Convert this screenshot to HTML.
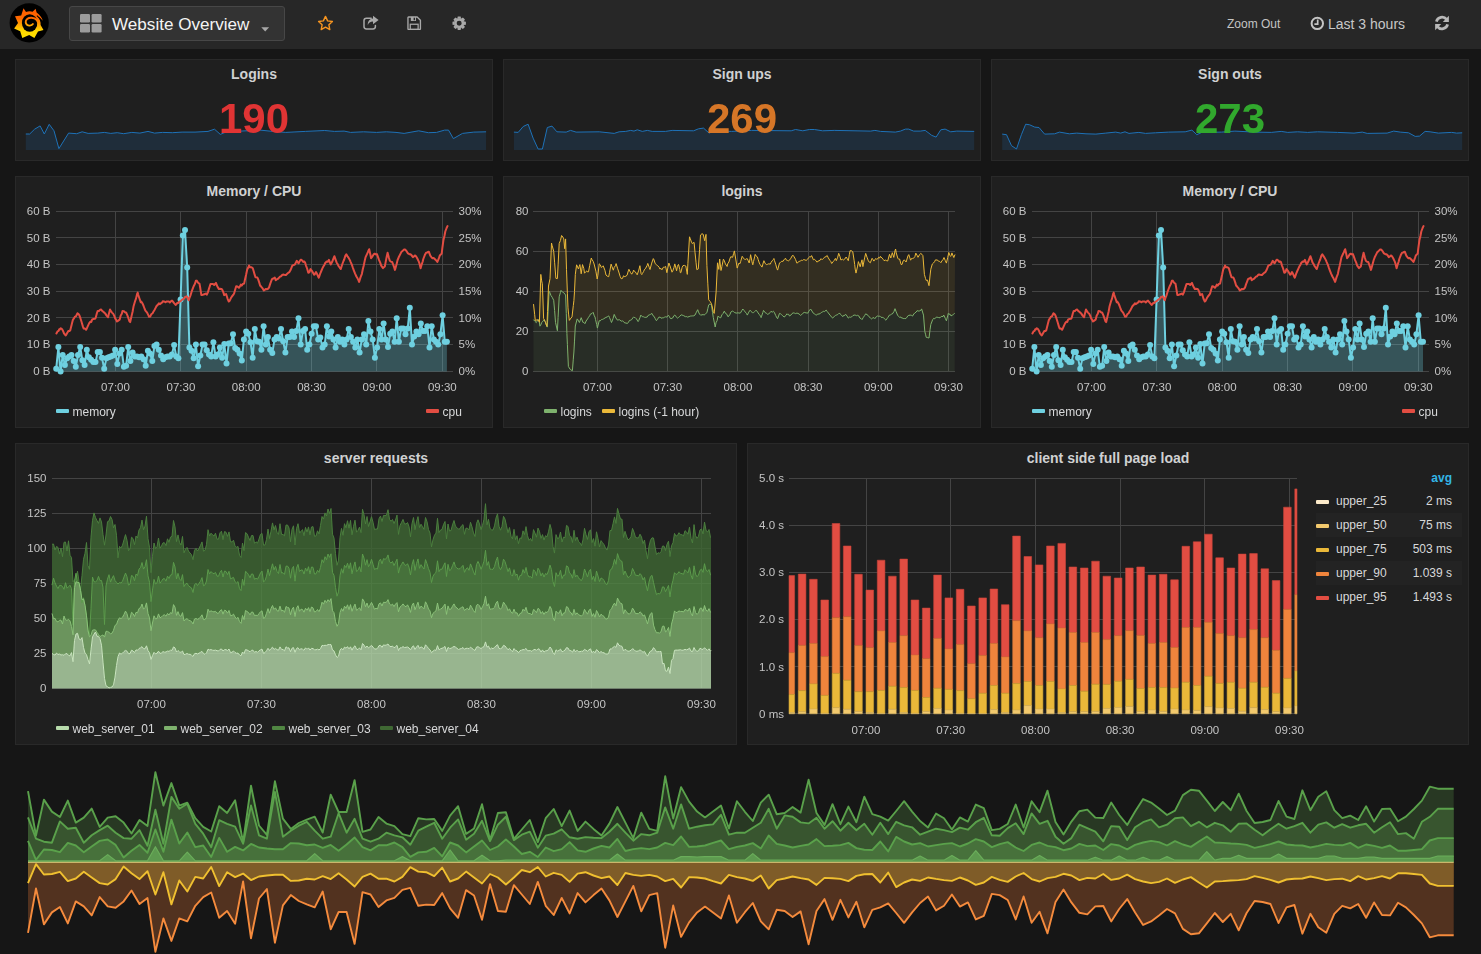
<!DOCTYPE html>
<html lang="en">
<head>
<meta charset="utf-8">
<title>Grafana - Website Overview</title>
<style>
html,body{margin:0;padding:0;}
body{width:1481px;height:954px;background:#161616;font-family:"Liberation Sans",Arial,sans-serif;color:#d8d9da;position:relative;overflow:hidden;}
.abs{position:absolute;}
.navbar{left:0;top:0;width:1481px;height:49px;background:#272727;}
.panel{position:absolute;box-sizing:border-box;background:#1f1f1f;border:1px solid #292929;}
.ptitle{position:absolute;left:0;right:0;top:6px;text-align:center;font-weight:bold;font-size:14px;line-height:16px;color:#d0d1d2;}
.big{position:absolute;text-align:center;font-weight:bold;font-size:42px;line-height:48px;}
#charts{position:absolute;left:0;top:0;will-change:transform;}
.titlebox{left:69px;top:6px;width:216px;height:35px;box-sizing:border-box;background:#333333;border:1px solid #474747;border-radius:3px;}
.titlebox .t{position:absolute;left:42px;top:6.5px;font-size:17.1px;line-height:21px;color:#f4f4f4;white-space:nowrap;}
.legend{position:absolute;font-size:12px;line-height:14px;color:#d8d9da;white-space:nowrap;}
.legend i{display:inline-block;width:13px;height:4px;border-radius:1px;vertical-align:3px;margin-right:3.5px;}
.lt{position:absolute;font-size:12px;line-height:14px;color:#d8d9da;white-space:nowrap;}
.row{position:absolute;left:1316px;width:146px;height:24px;}
.row.alt{background:#232323;}
.row i{position:absolute;left:0;top:11.2px;width:13px;height:4px;border-radius:1px;}
.row span{position:absolute;top:5px;font-size:12px;line-height:14px;}
.row .n{left:20px;}
.row .v{right:10px;}
</style>
</head>
<body>
<div class="abs navbar"></div>

<!-- logo -->
<svg class="abs" style="left:8px;top:2px" width="42" height="42" viewBox="8 2 42 42">
<defs><linearGradient id="lg1" gradientUnits="userSpaceOnUse" x1="0" y1="8" x2="0" y2="38"><stop offset="0" stop-color="#ff5a00"/><stop offset="0.35" stop-color="#ff6a00"/><stop offset="0.62" stop-color="#ffb400"/><stop offset="0.75" stop-color="#ffd800"/><stop offset="1" stop-color="#ffe000"/></linearGradient></defs>
<circle cx="29.2" cy="22.8" r="19.6" fill="#000"/>
<path d="M23.5 8.2 L26 12 Q29.5 10.8 32.6 11.8 L35.6 8.7 L36.6 12.6 C39.6 14.6 41.8 17.6 42.8 20.8 C41.4 18.8 39.6 17.4 37.6 16.4 C39.8 18.8 40.9 21.8 40.6 25.1 L43.5 30.1 L38 31.4 L34.4 37.9 L29.2 34.9 L22.3 37.9 L20.2 31.2 L14.1 28.4 L18 23 L15 16.2 L21.2 15.6 Z" fill="url(#lg1)"/>
<ellipse cx="29.7" cy="23" rx="7.8" ry="8.7" fill="#000"/>
<path d="M38.1 25.6 C39 21 36 17.9 31.4 17.7 C27.8 17.6 25.6 19.7 25.7 22.1 C25.8 24.3 27.6 25.7 29.8 25.6 C31.2 25.5 32.4 24.9 32.9 24.1" fill="none" stroke="url(#lg1)" stroke-width="1.9" stroke-linecap="round"/>
<path d="M36.9 15.6 C39.2 17.2 40.8 19.4 41.9 22.2" fill="none" stroke="#000" stroke-width="1.1"/>
</svg>

<!-- title dropdown -->
<div class="abs titlebox">
<svg class="abs" style="left:10px;top:7px" width="22" height="19" viewBox="0 0 22 19"><g fill="#9c9c9c"><rect x="0" y="0" width="10" height="8.4" rx="1.2"/><rect x="11.6" y="0" width="10" height="8.4" rx="1.2"/><rect x="0" y="10" width="10" height="8.4" rx="1.2"/><rect x="11.6" y="10" width="10" height="8.4" rx="1.2"/></g></svg>
<div class="t">Website Overview</div>
<svg class="abs" style="left:191px;top:20px" width="9" height="5" viewBox="0 0 9 5"><path d="M0.3 0.3H8.1L4.2 4.4Z" fill="#a8a8a8"/></svg>
</div>

<!-- nav icons -->
<svg class="abs" style="left:317px;top:15px" width="17" height="16" viewBox="0 0 17 16"><path d="M8.5 1.4 L10.6 5.9 L15.4 6.5 L11.9 9.8 L12.8 14.6 L8.5 12.2 L4.2 14.6 L5.1 9.8 L1.6 6.5 L6.4 5.9 Z" fill="none" stroke="#f79520" stroke-width="1.4" stroke-linejoin="round"/></svg>
<svg class="abs" style="left:362px;top:14.5px" width="18" height="16" viewBox="0 0 18 16"><path d="M9.2 3.2H4.4C3 3.2 2 4.2 2 5.6V11.6C2 13 3 14 4.4 14H11C12.4 14 13.4 13 13.4 11.6V10.4" fill="none" stroke="#a9a9a9" stroke-width="1.5" stroke-linecap="round"/><path d="M11 0.8L16.6 5L11 9.2V6.6C8.2 6.6 6.6 7.8 5.8 10.2C5.6 6.2 7.6 3.6 11 3.4Z" fill="#a9a9a9"/></svg>
<svg class="abs" style="left:407.3px;top:15.6px" width="14.4" height="14.4" viewBox="0 0 15 15"><path d="M1 1.6C1 1.2 1.2 1 1.6 1H10.6L14 4.4V13.4C14 13.8 13.8 14 13.4 14H1.6C1.2 14 1 13.8 1 13.4Z" fill="none" stroke="#a9a9a9" stroke-width="1.4" stroke-linejoin="round"/><rect x="4" y="1" width="5.4" height="4.2" fill="#a9a9a9"/><rect x="6.9" y="1.8" width="1.5" height="2.6" fill="#272727"/><rect x="3.4" y="8.6" width="8.2" height="5.4" fill="none" stroke="#a9a9a9" stroke-width="1.3"/></svg>
<svg class="abs" style="left:451.6px;top:15.7px" width="14.4" height="14.4" viewBox="-7.5 -7.5 15 15"><g fill="#a9a9a9"><path d="M-1.5 -7H1.5L2 -4.6H-2Z"/><path d="M-1.5 -7H1.5L2 -4.6H-2Z" transform="rotate(45)"/><path d="M-1.5 -7H1.5L2 -4.6H-2Z" transform="rotate(90)"/><path d="M-1.5 -7H1.5L2 -4.6H-2Z" transform="rotate(135)"/><path d="M-1.5 -7H1.5L2 -4.6H-2Z" transform="rotate(180)"/><path d="M-1.5 -7H1.5L2 -4.6H-2Z" transform="rotate(225)"/><path d="M-1.5 -7H1.5L2 -4.6H-2Z" transform="rotate(270)"/><path d="M-1.5 -7H1.5L2 -4.6H-2Z" transform="rotate(315)"/></g><circle r="3.9" fill="none" stroke="#a9a9a9" stroke-width="2.6"/></svg>

<div class="lt" style="left:1227px;top:17px;color:#c4c4c4;">Zoom Out</div>
<svg class="abs" style="left:1310px;top:16px" width="15" height="15" viewBox="0 0 15 15"><circle cx="7.3" cy="7.4" r="5.7" fill="none" stroke="#c4c4c4" stroke-width="2"/><path d="M7.7 3.6V8.1H4.4" fill="none" stroke="#c4c4c4" stroke-width="1.7"/></svg>
<div class="lt" style="left:1328px;top:16px;font-size:14px;line-height:16px;color:#c8c8c8;">Last 3 hours</div>
<svg class="abs" style="left:1434px;top:15px" width="16" height="16" viewBox="0 0 16 16"><g fill="none" stroke="#b8b8b8" stroke-width="2.7"><path d="M2.4 6.6A5.8 5.8 0 0 1 12.6 4.4"/><path d="M13.6 9.4A5.8 5.8 0 0 1 3.4 11.6"/></g><path d="M14.9 0.8V6.9H8.8Z" fill="#b8b8b8"/><path d="M1.1 15.2V9.1H7.2Z" fill="#b8b8b8"/></svg>

<!-- row 1 -->
<div class="panel" style="left:15px;top:59px;width:478px;height:102px;"><div class="ptitle">Logins</div></div>
<div class="panel" style="left:503px;top:59px;width:478px;height:102px;"><div class="ptitle">Sign ups</div></div>
<div class="panel" style="left:991px;top:59px;width:478px;height:102px;"><div class="ptitle">Sign outs</div></div>
<!-- row 2 -->
<div class="panel" style="left:15px;top:176px;width:478px;height:252px;"><div class="ptitle">Memory / CPU</div></div>
<div class="panel" style="left:503px;top:176px;width:478px;height:252px;"><div class="ptitle">logins</div></div>
<div class="panel" style="left:991px;top:176px;width:478px;height:252px;"><div class="ptitle">Memory / CPU</div></div>
<!-- row 3 -->
<div class="panel" style="left:15px;top:443px;width:722px;height:302px;"><div class="ptitle">server requests</div></div>
<div class="panel" style="left:747px;top:443px;width:722px;height:302px;"><div class="ptitle">client side full page load</div>
</div>
<div class="row" style="top:489px;"><i style="background:#fceaca"></i><span class="n">upper_25</span><span class="v">2 ms</span></div>
<div class="row alt" style="top:513px;"><i style="background:#f2c96d"></i><span class="n">upper_50</span><span class="v">75 ms</span></div>
<div class="row" style="top:537px;"><i style="background:#eab839"></i><span class="n">upper_75</span><span class="v">503 ms</span></div>
<div class="row alt" style="top:561px;"><i style="background:#ef843c"></i><span class="n">upper_90</span><span class="v">1.039 s</span></div>
<div class="row" style="top:585px;"><i style="background:#e24d42"></i><span class="n">upper_95</span><span class="v">1.493 s</span></div>
<div class="lt" style="left:1400px;width:52px;text-align:right;top:471px;color:#33b5e5;font-weight:bold;">avg</div>

<svg id="charts" width="1481" height="954" viewBox="0 0 1481 954" font-family='"Liberation Sans", Arial, sans-serif'><path d="M25.8 134 L29.7 134 L34.6 129.2 L40.1 125.9 L44.3 134 L49.2 124.3 L54 130.8 L58.9 148.6 L68.6 133.1 L76.7 133.7 L82.2 131.8 L88.1 133.4 L97.8 133.1 L104.3 132.4 L110.8 133.4 L117.2 132.7 L123.7 133.7 L131.8 132.4 L139.9 133.1 L148 131.4 L154.5 133.1 L162.6 132.4 L172.4 132.7 L182.1 132.1 L195 132.1 L208 131.4 L214.5 129.2 L220.3 134.4 L227.5 131.4 L240.4 131.1 L259.9 130.1 L272.8 131.4 L285.8 132.4 L305.3 131.4 L324.7 130.5 L334.4 131.4 L344.1 131.1 L350.6 132.4 L363.6 131.8 L376.6 132.4 L386.3 131.8 L396 132.4 L404.1 133.4 L418.7 130.8 L428.4 132.7 L436.5 132.4 L444.6 130.1 L448.5 130.1 L453.4 138.6 L462.5 133.4 L473.8 132.1 L486.1 131.8 L486.1 150 L25.8 150 Z" fill="#1f2d3a" stroke="none"/>
<path d="M25.8 134 L29.7 134 L34.6 129.2 L40.1 125.9 L44.3 134 L49.2 124.3 L54 130.8 L58.9 148.6 L68.6 133.1 L76.7 133.7 L82.2 131.8 L88.1 133.4 L97.8 133.1 L104.3 132.4 L110.8 133.4 L117.2 132.7 L123.7 133.7 L131.8 132.4 L139.9 133.1 L148 131.4 L154.5 133.1 L162.6 132.4 L172.4 132.7 L182.1 132.1 L195 132.1 L208 131.4 L214.5 129.2 L220.3 134.4 L227.5 131.4 L240.4 131.1 L259.9 130.1 L272.8 131.4 L285.8 132.4 L305.3 131.4 L324.7 130.5 L334.4 131.4 L344.1 131.1 L350.6 132.4 L363.6 131.8 L376.6 132.4 L386.3 131.8 L396 132.4 L404.1 133.4 L418.7 130.8 L428.4 132.7 L436.5 132.4 L444.6 130.1 L448.5 130.1 L453.4 138.6 L462.5 133.4 L473.8 132.1 L486.1 131.8" fill="none" stroke="#1e72b8" stroke-width="1" stroke-linejoin="round"/>
<path d="M513.9 132.1 L518.2 132.4 L523.2 126.5 L528.1 124.2 L533.1 138.1 L538.1 149 L542.4 149 L547.3 127.5 L552 126.1 L556.9 131.8 L566.2 132.1 L570.5 130.4 L576.1 132.1 L599.3 131.8 L614.2 133.4 L619.1 131.8 L625.7 131.4 L630.7 130.4 L634 131.1 L637.3 129.8 L642.3 131.4 L647.3 130.4 L652.2 131.4 L665.5 131.4 L672.1 130.4 L693.6 130.8 L698.5 128.8 L703.5 128.1 L709.1 133.1 L715.1 130.8 L731.6 131.4 L751.5 130.4 L791.2 130.8 L795.5 129.5 L802.8 130.8 L809.4 129.5 L814.4 129.5 L822.6 130.8 L834.2 130.4 L870.6 131.1 L874.9 130.4 L880.5 131.4 L895.4 132.1 L900.4 131.1 L905.4 129.1 L908.7 129.1 L913.6 131.1 L920.3 131.1 L925.2 130.4 L931.8 135.4 L936.1 137.1 L940.8 129.8 L945.1 129.1 L950.7 131.8 L956.7 131.1 L974.2 131.4 L974.2 150 L513.9 150 Z" fill="#1f2d3a" stroke="none"/>
<path d="M513.9 132.1 L518.2 132.4 L523.2 126.5 L528.1 124.2 L533.1 138.1 L538.1 149 L542.4 149 L547.3 127.5 L552 126.1 L556.9 131.8 L566.2 132.1 L570.5 130.4 L576.1 132.1 L599.3 131.8 L614.2 133.4 L619.1 131.8 L625.7 131.4 L630.7 130.4 L634 131.1 L637.3 129.8 L642.3 131.4 L647.3 130.4 L652.2 131.4 L665.5 131.4 L672.1 130.4 L693.6 130.8 L698.5 128.8 L703.5 128.1 L709.1 133.1 L715.1 130.8 L731.6 131.4 L751.5 130.4 L791.2 130.8 L795.5 129.5 L802.8 130.8 L809.4 129.5 L814.4 129.5 L822.6 130.8 L834.2 130.4 L870.6 131.1 L874.9 130.4 L880.5 131.4 L895.4 132.1 L900.4 131.1 L905.4 129.1 L908.7 129.1 L913.6 131.1 L920.3 131.1 L925.2 130.4 L931.8 135.4 L936.1 137.1 L940.8 129.8 L945.1 129.1 L950.7 131.8 L956.7 131.1 L974.2 131.4" fill="none" stroke="#1e72b8" stroke-width="1" stroke-linejoin="round"/>
<path d="M1002.2 134.1 L1006.5 134.7 L1011.5 145.7 L1016.5 149 L1021.4 134.7 L1025.7 124.2 L1029.7 124.8 L1034.7 127.1 L1039 127.5 L1044.6 134.1 L1054.5 133.8 L1059.5 132.1 L1069.4 133.8 L1076.7 133.1 L1086 133.8 L1095.9 134.1 L1105.8 133.1 L1115.7 132.1 L1120.7 133.1 L1125 131.8 L1129 133.4 L1138.9 132.4 L1145.5 133.4 L1155.5 132.8 L1168.7 132.1 L1185.2 131.8 L1191.9 130.1 L1196.8 134.7 L1201.8 132.4 L1221.6 132.1 L1234.9 131.1 L1254.7 132.1 L1271.3 132.4 L1281.2 131.4 L1287.8 132.4 L1297.7 131.8 L1307.7 132.4 L1317.6 131.8 L1337.5 132.4 L1354 133.1 L1362.3 132.1 L1367.2 133.4 L1387.1 133.1 L1393.7 131.1 L1400.3 132.1 L1408.6 132.8 L1415.2 136.4 L1419.5 136.1 L1425.1 131.4 L1430.1 131.8 L1438.4 133.1 L1451.6 132.4 L1456.6 133.1 L1462.2 132.8 L1462.2 150 L1002.2 150 Z" fill="#1f2d3a" stroke="none"/>
<path d="M1002.2 134.1 L1006.5 134.7 L1011.5 145.7 L1016.5 149 L1021.4 134.7 L1025.7 124.2 L1029.7 124.8 L1034.7 127.1 L1039 127.5 L1044.6 134.1 L1054.5 133.8 L1059.5 132.1 L1069.4 133.8 L1076.7 133.1 L1086 133.8 L1095.9 134.1 L1105.8 133.1 L1115.7 132.1 L1120.7 133.1 L1125 131.8 L1129 133.4 L1138.9 132.4 L1145.5 133.4 L1155.5 132.8 L1168.7 132.1 L1185.2 131.8 L1191.9 130.1 L1196.8 134.7 L1201.8 132.4 L1221.6 132.1 L1234.9 131.1 L1254.7 132.1 L1271.3 132.4 L1281.2 131.4 L1287.8 132.4 L1297.7 131.8 L1307.7 132.4 L1317.6 131.8 L1337.5 132.4 L1354 133.1 L1362.3 132.1 L1367.2 133.4 L1387.1 133.1 L1393.7 131.1 L1400.3 132.1 L1408.6 132.8 L1415.2 136.4 L1419.5 136.1 L1425.1 131.4 L1430.1 131.8 L1438.4 133.1 L1451.6 132.4 L1456.6 133.1 L1462.2 132.8" fill="none" stroke="#1e72b8" stroke-width="1" stroke-linejoin="round"/>
<path d="M55.8 211.5H453.4M55.8 237.5H453.4M55.8 264.5H453.4M55.8 291.5H453.4M55.8 317.5H453.4M55.8 344.5H453.4M55.8 371.5H453.4M115.5 211.5V371.5M180.5 211.5V371.5M246.5 211.5V371.5M311.5 211.5V371.5M376.5 211.5V371.5M442.5 211.5V371.5" stroke="#ffffff" stroke-opacity="0.17" stroke-width="1" fill="none" shape-rendering="crispEdges"/>
<text x="50.5" y="215.1" text-anchor="end" font-size="11.5" fill="#c4c4c4" font-weight="normal">60 B</text>
<text x="50.5" y="241.8" text-anchor="end" font-size="11.5" fill="#c4c4c4" font-weight="normal">50 B</text>
<text x="50.5" y="268.4" text-anchor="end" font-size="11.5" fill="#c4c4c4" font-weight="normal">40 B</text>
<text x="50.5" y="295.1" text-anchor="end" font-size="11.5" fill="#c4c4c4" font-weight="normal">30 B</text>
<text x="50.5" y="321.8" text-anchor="end" font-size="11.5" fill="#c4c4c4" font-weight="normal">20 B</text>
<text x="50.5" y="348.4" text-anchor="end" font-size="11.5" fill="#c4c4c4" font-weight="normal">10 B</text>
<text x="50.5" y="375.1" text-anchor="end" font-size="11.5" fill="#c4c4c4" font-weight="normal">0 B</text>
<text x="458.5" y="215.1" text-anchor="start" font-size="11.5" fill="#c4c4c4" font-weight="normal">30%</text>
<text x="458.5" y="241.8" text-anchor="start" font-size="11.5" fill="#c4c4c4" font-weight="normal">25%</text>
<text x="458.5" y="268.4" text-anchor="start" font-size="11.5" fill="#c4c4c4" font-weight="normal">20%</text>
<text x="458.5" y="295.1" text-anchor="start" font-size="11.5" fill="#c4c4c4" font-weight="normal">15%</text>
<text x="458.5" y="321.8" text-anchor="start" font-size="11.5" fill="#c4c4c4" font-weight="normal">10%</text>
<text x="458.5" y="348.4" text-anchor="start" font-size="11.5" fill="#c4c4c4" font-weight="normal">5%</text>
<text x="458.5" y="375.1" text-anchor="start" font-size="11.5" fill="#c4c4c4" font-weight="normal">0%</text>
<text x="115.5" y="390.8" text-anchor="middle" font-size="11.5" fill="#c4c4c4" font-weight="normal">07:00</text>
<text x="180.9" y="390.8" text-anchor="middle" font-size="11.5" fill="#c4c4c4" font-weight="normal">07:30</text>
<text x="246.2" y="390.8" text-anchor="middle" font-size="11.5" fill="#c4c4c4" font-weight="normal">08:00</text>
<text x="311.6" y="390.8" text-anchor="middle" font-size="11.5" fill="#c4c4c4" font-weight="normal">08:30</text>
<text x="376.9" y="390.8" text-anchor="middle" font-size="11.5" fill="#c4c4c4" font-weight="normal">09:00</text>
<text x="442.3" y="390.8" text-anchor="middle" font-size="11.5" fill="#c4c4c4" font-weight="normal">09:30</text>
<path d="M56.2 368.7 L58.4 347 L60.6 371.5 L62.7 355 L64.9 364.9 L67.1 358.3 L69.3 356.4 L71.5 355 L73.7 361.1 L75.8 366.8 L78 355 L80.2 347 L82.4 360.2 L84.6 364.9 L86.8 349.8 L88.9 357.3 L91.1 359.7 L93.3 362.1 L95.5 362.1 L97.7 352.1 L99.9 352.1 L102 357.8 L104.2 368.7 L106.4 358.3 L108.6 357.3 L110.8 356.4 L113 355.5 L115.1 349.8 L117.3 363.9 L119.5 353.6 L121.7 349.8 L123.9 366.8 L126.1 365.8 L128.2 347 L130.4 361.1 L132.6 352.6 L134.8 356.4 L137 356.4 L139.2 357.3 L141.3 356.4 L143.5 359.2 L145.7 365.8 L147.9 350.7 L150.1 353.6 L152.3 361.1 L154.4 346 L156.6 344.6 L158.8 349.8 L161 355.5 L163.2 359.2 L165.3 357.3 L167.5 356.4 L169.7 356.4 L171.9 354.5 L174.1 345.1 L176.3 356.4 L178.4 358.3 L180.6 299.5 L182.8 235.5 L185 230.1 L187.2 267.5 L189.4 347.4 L191.5 350.7 L193.7 358.3 L195.9 344.6 L198.1 366.3 L200.3 355.5 L202.5 344.6 L204.6 344.6 L206.8 350.3 L209 354.5 L211.2 356.4 L213.4 342.2 L215.6 356.4 L217.7 354.5 L219.9 347.4 L222.1 357.8 L224.3 344.1 L226.5 363.5 L228.7 343.6 L230.8 343.2 L233 334.2 L235.2 347.9 L237.4 349.8 L239.6 353.6 L241.8 360.6 L243.9 339.4 L246.1 331.4 L248.3 333.7 L250.5 342.2 L252.7 357.8 L254.8 329 L257 341.3 L259.2 341.8 L261.4 349.8 L263.6 326.2 L265.8 344.6 L267.9 337 L270.1 349.8 L272.3 353.1 L274.5 339.4 L276.7 337 L278.9 338.5 L281 329 L283.2 341.3 L285.4 352.6 L287.6 337 L289.8 337 L292 331.4 L294.1 337 L296.3 330.9 L298.5 318.2 L300.7 344.6 L302.9 330.9 L305.1 329 L307.2 349.8 L309.4 344.6 L311.6 333.7 L313.8 326.2 L316 326.2 L318.2 339.4 L320.3 337.5 L322.5 347.4 L324.7 344.6 L326.9 326.2 L329.1 336.6 L331.3 331.4 L333.4 339.4 L335.6 347.4 L337.8 337 L340 341.8 L342.2 339.4 L344.4 344.6 L346.5 339.4 L348.7 329 L350.9 337 L353.1 341.8 L355.3 347.4 L357.4 339.4 L359.6 352.6 L361.8 339.4 L364 334.2 L366.2 344.6 L368.4 321 L370.5 331.4 L372.7 339.4 L374.9 357.8 L377.1 347.4 L379.3 329 L381.5 339.4 L383.6 323.4 L385.8 339.4 L388 347 L390.2 333.7 L392.4 331.4 L394.6 341.8 L396.7 318.2 L398.9 341.8 L401.1 328.5 L403.3 328.5 L405.5 334.2 L407.7 328.5 L409.8 307.8 L412 344.6 L414.2 336.6 L416.4 331.4 L418.6 334.2 L420.8 323.4 L422.9 330.9 L425.1 330.9 L427.3 326.2 L429.5 347.4 L431.7 326.2 L433.9 339.4 L436 341.8 L438.2 344.6 L440.4 334.2 L442.6 315.3 L444.8 341.8 L446.9 341.8 L446.9 371.5 L56.2 371.5 Z" fill="#6ed0e0" fill-opacity="0.3"/>
<path d="M56.2 368.7 L58.4 347 L60.6 371.5 L62.7 355 L64.9 364.9 L67.1 358.3 L69.3 356.4 L71.5 355 L73.7 361.1 L75.8 366.8 L78 355 L80.2 347 L82.4 360.2 L84.6 364.9 L86.8 349.8 L88.9 357.3 L91.1 359.7 L93.3 362.1 L95.5 362.1 L97.7 352.1 L99.9 352.1 L102 357.8 L104.2 368.7 L106.4 358.3 L108.6 357.3 L110.8 356.4 L113 355.5 L115.1 349.8 L117.3 363.9 L119.5 353.6 L121.7 349.8 L123.9 366.8 L126.1 365.8 L128.2 347 L130.4 361.1 L132.6 352.6 L134.8 356.4 L137 356.4 L139.2 357.3 L141.3 356.4 L143.5 359.2 L145.7 365.8 L147.9 350.7 L150.1 353.6 L152.3 361.1 L154.4 346 L156.6 344.6 L158.8 349.8 L161 355.5 L163.2 359.2 L165.3 357.3 L167.5 356.4 L169.7 356.4 L171.9 354.5 L174.1 345.1 L176.3 356.4 L178.4 358.3 L180.6 299.5 L182.8 235.5 L185 230.1 L187.2 267.5 L189.4 347.4 L191.5 350.7 L193.7 358.3 L195.9 344.6 L198.1 366.3 L200.3 355.5 L202.5 344.6 L204.6 344.6 L206.8 350.3 L209 354.5 L211.2 356.4 L213.4 342.2 L215.6 356.4 L217.7 354.5 L219.9 347.4 L222.1 357.8 L224.3 344.1 L226.5 363.5 L228.7 343.6 L230.8 343.2 L233 334.2 L235.2 347.9 L237.4 349.8 L239.6 353.6 L241.8 360.6 L243.9 339.4 L246.1 331.4 L248.3 333.7 L250.5 342.2 L252.7 357.8 L254.8 329 L257 341.3 L259.2 341.8 L261.4 349.8 L263.6 326.2 L265.8 344.6 L267.9 337 L270.1 349.8 L272.3 353.1 L274.5 339.4 L276.7 337 L278.9 338.5 L281 329 L283.2 341.3 L285.4 352.6 L287.6 337 L289.8 337 L292 331.4 L294.1 337 L296.3 330.9 L298.5 318.2 L300.7 344.6 L302.9 330.9 L305.1 329 L307.2 349.8 L309.4 344.6 L311.6 333.7 L313.8 326.2 L316 326.2 L318.2 339.4 L320.3 337.5 L322.5 347.4 L324.7 344.6 L326.9 326.2 L329.1 336.6 L331.3 331.4 L333.4 339.4 L335.6 347.4 L337.8 337 L340 341.8 L342.2 339.4 L344.4 344.6 L346.5 339.4 L348.7 329 L350.9 337 L353.1 341.8 L355.3 347.4 L357.4 339.4 L359.6 352.6 L361.8 339.4 L364 334.2 L366.2 344.6 L368.4 321 L370.5 331.4 L372.7 339.4 L374.9 357.8 L377.1 347.4 L379.3 329 L381.5 339.4 L383.6 323.4 L385.8 339.4 L388 347 L390.2 333.7 L392.4 331.4 L394.6 341.8 L396.7 318.2 L398.9 341.8 L401.1 328.5 L403.3 328.5 L405.5 334.2 L407.7 328.5 L409.8 307.8 L412 344.6 L414.2 336.6 L416.4 331.4 L418.6 334.2 L420.8 323.4 L422.9 330.9 L425.1 330.9 L427.3 326.2 L429.5 347.4 L431.7 326.2 L433.9 339.4 L436 341.8 L438.2 344.6 L440.4 334.2 L442.6 315.3 L444.8 341.8 L446.9 341.8" fill="none" stroke="#6ed0e0" stroke-width="2" stroke-linejoin="round"/>
<g fill="#6ed0e0"><circle cx="56.2" cy="368.7" r="3"/><circle cx="58.4" cy="347" r="3"/><circle cx="60.6" cy="371.5" r="3"/><circle cx="62.7" cy="355" r="3"/><circle cx="64.9" cy="364.9" r="3"/><circle cx="67.1" cy="358.3" r="3"/><circle cx="69.3" cy="356.4" r="3"/><circle cx="71.5" cy="355" r="3"/><circle cx="73.7" cy="361.1" r="3"/><circle cx="75.8" cy="366.8" r="3"/><circle cx="78" cy="355" r="3"/><circle cx="80.2" cy="347" r="3"/><circle cx="82.4" cy="360.2" r="3"/><circle cx="84.6" cy="364.9" r="3"/><circle cx="86.8" cy="349.8" r="3"/><circle cx="88.9" cy="357.3" r="3"/><circle cx="91.1" cy="359.7" r="3"/><circle cx="93.3" cy="362.1" r="3"/><circle cx="95.5" cy="362.1" r="3"/><circle cx="97.7" cy="352.1" r="3"/><circle cx="99.9" cy="352.1" r="3"/><circle cx="102" cy="357.8" r="3"/><circle cx="104.2" cy="368.7" r="3"/><circle cx="106.4" cy="358.3" r="3"/><circle cx="108.6" cy="357.3" r="3"/><circle cx="110.8" cy="356.4" r="3"/><circle cx="113" cy="355.5" r="3"/><circle cx="115.1" cy="349.8" r="3"/><circle cx="117.3" cy="363.9" r="3"/><circle cx="119.5" cy="353.6" r="3"/><circle cx="121.7" cy="349.8" r="3"/><circle cx="123.9" cy="366.8" r="3"/><circle cx="126.1" cy="365.8" r="3"/><circle cx="128.2" cy="347" r="3"/><circle cx="130.4" cy="361.1" r="3"/><circle cx="132.6" cy="352.6" r="3"/><circle cx="134.8" cy="356.4" r="3"/><circle cx="137" cy="356.4" r="3"/><circle cx="139.2" cy="357.3" r="3"/><circle cx="141.3" cy="356.4" r="3"/><circle cx="143.5" cy="359.2" r="3"/><circle cx="145.7" cy="365.8" r="3"/><circle cx="147.9" cy="350.7" r="3"/><circle cx="150.1" cy="353.6" r="3"/><circle cx="152.3" cy="361.1" r="3"/><circle cx="154.4" cy="346" r="3"/><circle cx="156.6" cy="344.6" r="3"/><circle cx="158.8" cy="349.8" r="3"/><circle cx="161" cy="355.5" r="3"/><circle cx="163.2" cy="359.2" r="3"/><circle cx="165.3" cy="357.3" r="3"/><circle cx="167.5" cy="356.4" r="3"/><circle cx="169.7" cy="356.4" r="3"/><circle cx="171.9" cy="354.5" r="3"/><circle cx="174.1" cy="345.1" r="3"/><circle cx="176.3" cy="356.4" r="3"/><circle cx="178.4" cy="358.3" r="3"/><circle cx="180.6" cy="299.5" r="3"/><circle cx="182.8" cy="235.5" r="3"/><circle cx="185" cy="230.1" r="3"/><circle cx="187.2" cy="267.5" r="3"/><circle cx="189.4" cy="347.4" r="3"/><circle cx="191.5" cy="350.7" r="3"/><circle cx="193.7" cy="358.3" r="3"/><circle cx="195.9" cy="344.6" r="3"/><circle cx="198.1" cy="366.3" r="3"/><circle cx="200.3" cy="355.5" r="3"/><circle cx="202.5" cy="344.6" r="3"/><circle cx="204.6" cy="344.6" r="3"/><circle cx="206.8" cy="350.3" r="3"/><circle cx="209" cy="354.5" r="3"/><circle cx="211.2" cy="356.4" r="3"/><circle cx="213.4" cy="342.2" r="3"/><circle cx="215.6" cy="356.4" r="3"/><circle cx="217.7" cy="354.5" r="3"/><circle cx="219.9" cy="347.4" r="3"/><circle cx="222.1" cy="357.8" r="3"/><circle cx="224.3" cy="344.1" r="3"/><circle cx="226.5" cy="363.5" r="3"/><circle cx="228.7" cy="343.6" r="3"/><circle cx="230.8" cy="343.2" r="3"/><circle cx="233" cy="334.2" r="3"/><circle cx="235.2" cy="347.9" r="3"/><circle cx="237.4" cy="349.8" r="3"/><circle cx="239.6" cy="353.6" r="3"/><circle cx="241.8" cy="360.6" r="3"/><circle cx="243.9" cy="339.4" r="3"/><circle cx="246.1" cy="331.4" r="3"/><circle cx="248.3" cy="333.7" r="3"/><circle cx="250.5" cy="342.2" r="3"/><circle cx="252.7" cy="357.8" r="3"/><circle cx="254.8" cy="329" r="3"/><circle cx="257" cy="341.3" r="3"/><circle cx="259.2" cy="341.8" r="3"/><circle cx="261.4" cy="349.8" r="3"/><circle cx="263.6" cy="326.2" r="3"/><circle cx="265.8" cy="344.6" r="3"/><circle cx="267.9" cy="337" r="3"/><circle cx="270.1" cy="349.8" r="3"/><circle cx="272.3" cy="353.1" r="3"/><circle cx="274.5" cy="339.4" r="3"/><circle cx="276.7" cy="337" r="3"/><circle cx="278.9" cy="338.5" r="3"/><circle cx="281" cy="329" r="3"/><circle cx="283.2" cy="341.3" r="3"/><circle cx="285.4" cy="352.6" r="3"/><circle cx="287.6" cy="337" r="3"/><circle cx="289.8" cy="337" r="3"/><circle cx="292" cy="331.4" r="3"/><circle cx="294.1" cy="337" r="3"/><circle cx="296.3" cy="330.9" r="3"/><circle cx="298.5" cy="318.2" r="3"/><circle cx="300.7" cy="344.6" r="3"/><circle cx="302.9" cy="330.9" r="3"/><circle cx="305.1" cy="329" r="3"/><circle cx="307.2" cy="349.8" r="3"/><circle cx="309.4" cy="344.6" r="3"/><circle cx="311.6" cy="333.7" r="3"/><circle cx="313.8" cy="326.2" r="3"/><circle cx="316" cy="326.2" r="3"/><circle cx="318.2" cy="339.4" r="3"/><circle cx="320.3" cy="337.5" r="3"/><circle cx="322.5" cy="347.4" r="3"/><circle cx="324.7" cy="344.6" r="3"/><circle cx="326.9" cy="326.2" r="3"/><circle cx="329.1" cy="336.6" r="3"/><circle cx="331.3" cy="331.4" r="3"/><circle cx="333.4" cy="339.4" r="3"/><circle cx="335.6" cy="347.4" r="3"/><circle cx="337.8" cy="337" r="3"/><circle cx="340" cy="341.8" r="3"/><circle cx="342.2" cy="339.4" r="3"/><circle cx="344.4" cy="344.6" r="3"/><circle cx="346.5" cy="339.4" r="3"/><circle cx="348.7" cy="329" r="3"/><circle cx="350.9" cy="337" r="3"/><circle cx="353.1" cy="341.8" r="3"/><circle cx="355.3" cy="347.4" r="3"/><circle cx="357.4" cy="339.4" r="3"/><circle cx="359.6" cy="352.6" r="3"/><circle cx="361.8" cy="339.4" r="3"/><circle cx="364" cy="334.2" r="3"/><circle cx="366.2" cy="344.6" r="3"/><circle cx="368.4" cy="321" r="3"/><circle cx="370.5" cy="331.4" r="3"/><circle cx="372.7" cy="339.4" r="3"/><circle cx="374.9" cy="357.8" r="3"/><circle cx="377.1" cy="347.4" r="3"/><circle cx="379.3" cy="329" r="3"/><circle cx="381.5" cy="339.4" r="3"/><circle cx="383.6" cy="323.4" r="3"/><circle cx="385.8" cy="339.4" r="3"/><circle cx="388" cy="347" r="3"/><circle cx="390.2" cy="333.7" r="3"/><circle cx="392.4" cy="331.4" r="3"/><circle cx="394.6" cy="341.8" r="3"/><circle cx="396.7" cy="318.2" r="3"/><circle cx="398.9" cy="341.8" r="3"/><circle cx="401.1" cy="328.5" r="3"/><circle cx="403.3" cy="328.5" r="3"/><circle cx="405.5" cy="334.2" r="3"/><circle cx="407.7" cy="328.5" r="3"/><circle cx="409.8" cy="307.8" r="3"/><circle cx="412" cy="344.6" r="3"/><circle cx="414.2" cy="336.6" r="3"/><circle cx="416.4" cy="331.4" r="3"/><circle cx="418.6" cy="334.2" r="3"/><circle cx="420.8" cy="323.4" r="3"/><circle cx="422.9" cy="330.9" r="3"/><circle cx="425.1" cy="330.9" r="3"/><circle cx="427.3" cy="326.2" r="3"/><circle cx="429.5" cy="347.4" r="3"/><circle cx="431.7" cy="326.2" r="3"/><circle cx="433.9" cy="339.4" r="3"/><circle cx="436" cy="341.8" r="3"/><circle cx="438.2" cy="344.6" r="3"/><circle cx="440.4" cy="334.2" r="3"/><circle cx="442.6" cy="315.3" r="3"/><circle cx="444.8" cy="341.8" r="3"/><circle cx="446.9" cy="341.8" r="3"/></g>
<path d="M56.4 333.4 L57.5 331.4 L58.6 330.8 L59.2 329.3 L59.7 329.5 L60.8 328.2 L61.9 329 L63 330.8 L64 333.4 L65.6 335.5 L66.2 334.8 L67.3 332.7 L68.3 331.1 L69.5 330.9 L70.2 330.4 L71.7 324.5 L72.9 319.8 L73.9 318.4 L75 316.6 L76 316.3 L77.5 313.2 L78.2 313.7 L79.3 315.1 L80.4 318.2 L81.5 321.8 L83 326.9 L83.7 328.5 L84.8 328.5 L86.1 329.8 L86.9 328.2 L88.5 324.6 L89.1 323.4 L90.2 321.8 L91.3 321.9 L92.2 319.4 L93.5 319 L94.9 318.8 L95.7 317.8 L96.8 313.5 L97.7 310.9 L98.9 311 L100 309.9 L101 309.5 L102.2 310.9 L103.3 311.7 L104.4 312.8 L105 313.1 L106.6 315.6 L108.1 317.2 L108.7 314.5 L110 309.5 L110.9 311.2 L112 312.6 L113.3 313.9 L114.2 315.7 L115.3 318.6 L116.4 320.3 L117 321.4 L117.5 321.2 L118.5 320.4 L119.7 319.6 L120.7 315.5 L121.8 313.8 L122.5 311.1 L124 311.2 L125.1 312.4 L126.1 312.4 L127.3 315.1 L128.4 318.2 L129.4 321.3 L130.2 322.1 L131.6 315.9 L132.7 311.2 L133.5 306.6 L134.9 301.7 L136 298.7 L137.1 293.9 L137.7 292.6 L138.2 294.8 L139.3 298 L140.8 302.3 L141.4 301.7 L142.6 303.6 L143.6 306 L144.7 309 L145.4 310.6 L146.9 312.3 L148 314.4 L149.1 316.7 L150.2 316.6 L151.2 314.3 L152.7 313.2 L153.4 311.7 L154.5 310 L155.6 307.9 L156.4 306.3 L157.8 304.8 L158.9 303.3 L160.1 304.1 L161.1 303.2 L162.2 302.5 L162.8 301.3 L164.3 301.5 L165.6 302.3 L166.5 301.4 L167.6 301.5 L168.7 301.4 L169.2 301.9 L169.8 302.5 L170.9 301.3 L172 300.6 L173.1 301.8 L174.1 303.2 L175.6 304.9 L176.3 304.4 L177.4 302.7 L178.4 302.9 L179.6 301.4 L180.7 301.2 L182.1 299.6 L182.9 299.3 L183.9 298.7 L185 296.9 L186.1 296.7 L186.7 296.2 L187.2 297 L188.3 299.7 L188.8 300.3 L189.4 298 L190.5 295.4 L191.6 291.7 L193.1 287.6 L193.8 285.9 L194.8 284.1 L195.9 280.8 L196.7 280.6 L198.1 282.7 L199.5 283.8 L200.3 288.3 L201.3 294.9 L202.5 294.9 L203.6 294.5 L205 294 L205.8 293.5 L206.8 294.7 L207.9 292.3 L209 288.6 L210.5 284 L211.2 284 L212.3 283.9 L213.4 284.2 L214.2 285 L216 282.9 L216.7 285 L217.7 287.1 L218.8 289.1 L219.9 288.7 L221.5 288.9 L222.1 289.5 L223.2 291.9 L224.2 295.1 L225.4 294.4 L226.1 294 L227.6 298.8 L228.8 301.5 L229.7 300.7 L230.8 298.3 L231.9 296.5 L233.4 294.7 L234.1 293.4 L235.2 289.5 L236.2 286.3 L237.4 286.5 L238.9 287.8 L239.5 287.1 L240.8 284.6 L241.7 285.6 L242.8 284 L244.1 283.6 L245 279.4 L246.1 274.8 L247.2 269.5 L248.3 267.5 L249 265.5 L250 267.3 L251.5 267.2 L252.8 268.3 L253.7 271.2 L254.8 275.2 L255.5 277.2 L257.3 277.4 L258.1 279.2 L259.2 282.4 L260.1 285.5 L261.3 286.8 L262.4 288.1 L263.8 290.4 L264.6 290 L265.7 288.9 L266.8 289.3 L268.3 288.5 L269 287.6 L270.1 284.1 L271.1 281.3 L272 279.2 L273.3 278.5 L274.8 277.5 L275.7 280.2 L276.6 279.4 L277.7 279 L278.8 277.9 L279.4 277.5 L279.9 276.6 L281 276.3 L282.1 275 L283 274.5 L284.2 274.8 L285.8 275.1 L286.4 274.7 L287.5 273.4 L288.6 272.5 L289.4 272.1 L290.8 269.5 L292.2 265.8 L292.9 265.2 L294 265 L294.9 264.5 L296.2 261.9 L296.8 260.8 L297.3 261.6 L298.6 263.3 L299.5 261.5 L300.8 259.7 L301.7 260 L303.2 262 L303.9 261.4 L305 262.2 L306 265.6 L307.1 268.5 L308.3 272.7 L309.3 272.4 L310.5 269.1 L311.5 270.3 L312.6 272 L313.7 273.9 L314.2 274.7 L314.8 274.3 L316 272.1 L316.9 273.7 L318 276.2 L318.8 277.7 L320.2 273.6 L321.3 271 L322.4 268.4 L323.5 266.3 L324.6 264.4 L325.2 263 L326.7 261.5 L327.8 261.8 L328.9 259.9 L330 262.6 L330.7 264.5 L332.2 261.8 L333.3 258.8 L334.4 256.2 L335.5 259.3 L336.6 262.4 L337.1 263.3 L337.6 264 L338.7 266.2 L339.8 267.8 L340.8 269 L342 265 L343.5 261 L344.2 259.5 L345.3 255.9 L346.3 254.4 L347.4 256.1 L348.5 257.6 L350 260.4 L350.7 262.1 L351.8 264.6 L352.7 267.3 L354 270.8 L355.1 273.6 L356.4 276.5 L357.3 277.9 L358.4 280.1 L359.1 281.9 L360.5 277.4 L361.9 273.8 L362.7 269.8 L363.8 265.2 L364.9 259.9 L365.6 257.1 L367.1 253.8 L368.2 251.3 L369.2 249.2 L370.3 254.2 L371.1 258.2 L372.5 256.3 L373.6 254.4 L374.7 253.7 L375.8 254.4 L376.9 254.1 L377.5 255.6 L379.1 260.1 L380.2 262.6 L381.2 265.6 L382.3 267.1 L383 268.1 L384.8 266.6 L385.6 262.4 L386.7 256.7 L387.6 252.7 L388.9 257.8 L389.8 260.8 L391.1 261.7 L392.1 261.9 L393.2 264.6 L394.3 267.7 L394.9 269.9 L395.4 268.6 L396.5 264.4 L397.6 260 L398.7 257.3 L399.8 255.1 L401.3 252.1 L401.9 251.6 L403 250.6 L404.1 249.5 L405 249.6 L406.3 250.8 L407.7 253.1 L408.5 253.7 L409.6 254.3 L410.5 254.2 L411.8 255.5 L412.3 256.4 L412.9 257.1 L413.9 256.4 L415 255.4 L416 256.3 L417.2 258.3 L418.8 261.6 L419.4 263.3 L420.6 268.3 L421.6 264.8 L422.7 261.5 L423.3 259 L424.8 255.1 L426.1 252.7 L427 252.6 L428.1 251.9 L428.8 251.7 L430.3 255.7 L431.6 257.4 L432.5 258.2 L433.6 258 L434.3 258.6 L435.7 259.9 L436.8 261.1 L437.4 262 L439 257.9 L439.8 255.5 L441.7 253.6 L442.3 248.4 L443.5 239.7 L444.5 235.7 L445.3 231.5 L446.6 228 L447.5 226.1" fill="none" stroke="#e24d42" stroke-width="2" stroke-linejoin="round" stroke-linecap="round"/>
<path d="M1031.8 211.5H1429.4M1031.8 237.5H1429.4M1031.8 264.5H1429.4M1031.8 291.5H1429.4M1031.8 317.5H1429.4M1031.8 344.5H1429.4M1031.8 371.5H1429.4M1091.5 211.5V371.5M1156.5 211.5V371.5M1222.5 211.5V371.5M1287.5 211.5V371.5M1352.5 211.5V371.5M1418.5 211.5V371.5" stroke="#ffffff" stroke-opacity="0.17" stroke-width="1" fill="none" shape-rendering="crispEdges"/>
<text x="1026.5" y="215.1" text-anchor="end" font-size="11.5" fill="#c4c4c4" font-weight="normal">60 B</text>
<text x="1026.5" y="241.8" text-anchor="end" font-size="11.5" fill="#c4c4c4" font-weight="normal">50 B</text>
<text x="1026.5" y="268.4" text-anchor="end" font-size="11.5" fill="#c4c4c4" font-weight="normal">40 B</text>
<text x="1026.5" y="295.1" text-anchor="end" font-size="11.5" fill="#c4c4c4" font-weight="normal">30 B</text>
<text x="1026.5" y="321.8" text-anchor="end" font-size="11.5" fill="#c4c4c4" font-weight="normal">20 B</text>
<text x="1026.5" y="348.4" text-anchor="end" font-size="11.5" fill="#c4c4c4" font-weight="normal">10 B</text>
<text x="1026.5" y="375.1" text-anchor="end" font-size="11.5" fill="#c4c4c4" font-weight="normal">0 B</text>
<text x="1434.5" y="215.1" text-anchor="start" font-size="11.5" fill="#c4c4c4" font-weight="normal">30%</text>
<text x="1434.5" y="241.8" text-anchor="start" font-size="11.5" fill="#c4c4c4" font-weight="normal">25%</text>
<text x="1434.5" y="268.4" text-anchor="start" font-size="11.5" fill="#c4c4c4" font-weight="normal">20%</text>
<text x="1434.5" y="295.1" text-anchor="start" font-size="11.5" fill="#c4c4c4" font-weight="normal">15%</text>
<text x="1434.5" y="321.8" text-anchor="start" font-size="11.5" fill="#c4c4c4" font-weight="normal">10%</text>
<text x="1434.5" y="348.4" text-anchor="start" font-size="11.5" fill="#c4c4c4" font-weight="normal">5%</text>
<text x="1434.5" y="375.1" text-anchor="start" font-size="11.5" fill="#c4c4c4" font-weight="normal">0%</text>
<text x="1091.5" y="390.8" text-anchor="middle" font-size="11.5" fill="#c4c4c4" font-weight="normal">07:00</text>
<text x="1156.9" y="390.8" text-anchor="middle" font-size="11.5" fill="#c4c4c4" font-weight="normal">07:30</text>
<text x="1222.2" y="390.8" text-anchor="middle" font-size="11.5" fill="#c4c4c4" font-weight="normal">08:00</text>
<text x="1287.6" y="390.8" text-anchor="middle" font-size="11.5" fill="#c4c4c4" font-weight="normal">08:30</text>
<text x="1352.9" y="390.8" text-anchor="middle" font-size="11.5" fill="#c4c4c4" font-weight="normal">09:00</text>
<text x="1418.3" y="390.8" text-anchor="middle" font-size="11.5" fill="#c4c4c4" font-weight="normal">09:30</text>
<path d="M1032.2 368.7 L1034.4 347 L1036.6 371.5 L1038.7 355 L1040.9 364.9 L1043.1 358.3 L1045.3 356.4 L1047.5 355 L1049.7 361.1 L1051.8 366.8 L1054 355 L1056.2 347 L1058.4 360.2 L1060.6 364.9 L1062.8 349.8 L1064.9 357.3 L1067.1 359.7 L1069.3 362.1 L1071.5 362.1 L1073.7 352.1 L1075.9 352.1 L1078 357.8 L1080.2 368.7 L1082.4 358.3 L1084.6 357.3 L1086.8 356.4 L1089 355.5 L1091.1 349.8 L1093.3 363.9 L1095.5 353.6 L1097.7 349.8 L1099.9 366.8 L1102.1 365.8 L1104.2 347 L1106.4 361.1 L1108.6 352.6 L1110.8 356.4 L1113 356.4 L1115.2 357.3 L1117.3 356.4 L1119.5 359.2 L1121.7 365.8 L1123.9 350.7 L1126.1 353.6 L1128.3 361.1 L1130.4 346 L1132.6 344.6 L1134.8 349.8 L1137 355.5 L1139.2 359.2 L1141.3 357.3 L1143.5 356.4 L1145.7 356.4 L1147.9 354.5 L1150.1 345.1 L1152.3 356.4 L1154.4 358.3 L1156.6 299.5 L1158.8 235.5 L1161 230.1 L1163.2 267.5 L1165.4 347.4 L1167.5 350.7 L1169.7 358.3 L1171.9 344.6 L1174.1 366.3 L1176.3 355.5 L1178.5 344.6 L1180.6 344.6 L1182.8 350.3 L1185 354.5 L1187.2 356.4 L1189.4 342.2 L1191.6 356.4 L1193.7 354.5 L1195.9 347.4 L1198.1 357.8 L1200.3 344.1 L1202.5 363.5 L1204.7 343.6 L1206.8 343.2 L1209 334.2 L1211.2 347.9 L1213.4 349.8 L1215.6 353.6 L1217.8 360.6 L1219.9 339.4 L1222.1 331.4 L1224.3 333.7 L1226.5 342.2 L1228.7 357.8 L1230.8 329 L1233 341.3 L1235.2 341.8 L1237.4 349.8 L1239.6 326.2 L1241.8 344.6 L1243.9 337 L1246.1 349.8 L1248.3 353.1 L1250.5 339.4 L1252.7 337 L1254.9 338.5 L1257 329 L1259.2 341.3 L1261.4 352.6 L1263.6 337 L1265.8 337 L1268 331.4 L1270.1 337 L1272.3 330.9 L1274.5 318.2 L1276.7 344.6 L1278.9 330.9 L1281.1 329 L1283.2 349.8 L1285.4 344.6 L1287.6 333.7 L1289.8 326.2 L1292 326.2 L1294.2 339.4 L1296.3 337.5 L1298.5 347.4 L1300.7 344.6 L1302.9 326.2 L1305.1 336.6 L1307.3 331.4 L1309.4 339.4 L1311.6 347.4 L1313.8 337 L1316 341.8 L1318.2 339.4 L1320.4 344.6 L1322.5 339.4 L1324.7 329 L1326.9 337 L1329.1 341.8 L1331.3 347.4 L1333.4 339.4 L1335.6 352.6 L1337.8 339.4 L1340 334.2 L1342.2 344.6 L1344.4 321 L1346.5 331.4 L1348.7 339.4 L1350.9 357.8 L1353.1 347.4 L1355.3 329 L1357.5 339.4 L1359.6 323.4 L1361.8 339.4 L1364 347 L1366.2 333.7 L1368.4 331.4 L1370.6 341.8 L1372.7 318.2 L1374.9 341.8 L1377.1 328.5 L1379.3 328.5 L1381.5 334.2 L1383.7 328.5 L1385.8 307.8 L1388 344.6 L1390.2 336.6 L1392.4 331.4 L1394.6 334.2 L1396.8 323.4 L1398.9 330.9 L1401.1 330.9 L1403.3 326.2 L1405.5 347.4 L1407.7 326.2 L1409.9 339.4 L1412 341.8 L1414.2 344.6 L1416.4 334.2 L1418.6 315.3 L1420.8 341.8 L1423 341.8 L1423 371.5 L1032.2 371.5 Z" fill="#6ed0e0" fill-opacity="0.3"/>
<path d="M1032.2 368.7 L1034.4 347 L1036.6 371.5 L1038.7 355 L1040.9 364.9 L1043.1 358.3 L1045.3 356.4 L1047.5 355 L1049.7 361.1 L1051.8 366.8 L1054 355 L1056.2 347 L1058.4 360.2 L1060.6 364.9 L1062.8 349.8 L1064.9 357.3 L1067.1 359.7 L1069.3 362.1 L1071.5 362.1 L1073.7 352.1 L1075.9 352.1 L1078 357.8 L1080.2 368.7 L1082.4 358.3 L1084.6 357.3 L1086.8 356.4 L1089 355.5 L1091.1 349.8 L1093.3 363.9 L1095.5 353.6 L1097.7 349.8 L1099.9 366.8 L1102.1 365.8 L1104.2 347 L1106.4 361.1 L1108.6 352.6 L1110.8 356.4 L1113 356.4 L1115.2 357.3 L1117.3 356.4 L1119.5 359.2 L1121.7 365.8 L1123.9 350.7 L1126.1 353.6 L1128.3 361.1 L1130.4 346 L1132.6 344.6 L1134.8 349.8 L1137 355.5 L1139.2 359.2 L1141.3 357.3 L1143.5 356.4 L1145.7 356.4 L1147.9 354.5 L1150.1 345.1 L1152.3 356.4 L1154.4 358.3 L1156.6 299.5 L1158.8 235.5 L1161 230.1 L1163.2 267.5 L1165.4 347.4 L1167.5 350.7 L1169.7 358.3 L1171.9 344.6 L1174.1 366.3 L1176.3 355.5 L1178.5 344.6 L1180.6 344.6 L1182.8 350.3 L1185 354.5 L1187.2 356.4 L1189.4 342.2 L1191.6 356.4 L1193.7 354.5 L1195.9 347.4 L1198.1 357.8 L1200.3 344.1 L1202.5 363.5 L1204.7 343.6 L1206.8 343.2 L1209 334.2 L1211.2 347.9 L1213.4 349.8 L1215.6 353.6 L1217.8 360.6 L1219.9 339.4 L1222.1 331.4 L1224.3 333.7 L1226.5 342.2 L1228.7 357.8 L1230.8 329 L1233 341.3 L1235.2 341.8 L1237.4 349.8 L1239.6 326.2 L1241.8 344.6 L1243.9 337 L1246.1 349.8 L1248.3 353.1 L1250.5 339.4 L1252.7 337 L1254.9 338.5 L1257 329 L1259.2 341.3 L1261.4 352.6 L1263.6 337 L1265.8 337 L1268 331.4 L1270.1 337 L1272.3 330.9 L1274.5 318.2 L1276.7 344.6 L1278.9 330.9 L1281.1 329 L1283.2 349.8 L1285.4 344.6 L1287.6 333.7 L1289.8 326.2 L1292 326.2 L1294.2 339.4 L1296.3 337.5 L1298.5 347.4 L1300.7 344.6 L1302.9 326.2 L1305.1 336.6 L1307.3 331.4 L1309.4 339.4 L1311.6 347.4 L1313.8 337 L1316 341.8 L1318.2 339.4 L1320.4 344.6 L1322.5 339.4 L1324.7 329 L1326.9 337 L1329.1 341.8 L1331.3 347.4 L1333.4 339.4 L1335.6 352.6 L1337.8 339.4 L1340 334.2 L1342.2 344.6 L1344.4 321 L1346.5 331.4 L1348.7 339.4 L1350.9 357.8 L1353.1 347.4 L1355.3 329 L1357.5 339.4 L1359.6 323.4 L1361.8 339.4 L1364 347 L1366.2 333.7 L1368.4 331.4 L1370.6 341.8 L1372.7 318.2 L1374.9 341.8 L1377.1 328.5 L1379.3 328.5 L1381.5 334.2 L1383.7 328.5 L1385.8 307.8 L1388 344.6 L1390.2 336.6 L1392.4 331.4 L1394.6 334.2 L1396.8 323.4 L1398.9 330.9 L1401.1 330.9 L1403.3 326.2 L1405.5 347.4 L1407.7 326.2 L1409.9 339.4 L1412 341.8 L1414.2 344.6 L1416.4 334.2 L1418.6 315.3 L1420.8 341.8 L1423 341.8" fill="none" stroke="#6ed0e0" stroke-width="2" stroke-linejoin="round"/>
<g fill="#6ed0e0"><circle cx="1032.2" cy="368.7" r="3"/><circle cx="1034.4" cy="347" r="3"/><circle cx="1036.6" cy="371.5" r="3"/><circle cx="1038.7" cy="355" r="3"/><circle cx="1040.9" cy="364.9" r="3"/><circle cx="1043.1" cy="358.3" r="3"/><circle cx="1045.3" cy="356.4" r="3"/><circle cx="1047.5" cy="355" r="3"/><circle cx="1049.7" cy="361.1" r="3"/><circle cx="1051.8" cy="366.8" r="3"/><circle cx="1054" cy="355" r="3"/><circle cx="1056.2" cy="347" r="3"/><circle cx="1058.4" cy="360.2" r="3"/><circle cx="1060.6" cy="364.9" r="3"/><circle cx="1062.8" cy="349.8" r="3"/><circle cx="1064.9" cy="357.3" r="3"/><circle cx="1067.1" cy="359.7" r="3"/><circle cx="1069.3" cy="362.1" r="3"/><circle cx="1071.5" cy="362.1" r="3"/><circle cx="1073.7" cy="352.1" r="3"/><circle cx="1075.9" cy="352.1" r="3"/><circle cx="1078" cy="357.8" r="3"/><circle cx="1080.2" cy="368.7" r="3"/><circle cx="1082.4" cy="358.3" r="3"/><circle cx="1084.6" cy="357.3" r="3"/><circle cx="1086.8" cy="356.4" r="3"/><circle cx="1089" cy="355.5" r="3"/><circle cx="1091.1" cy="349.8" r="3"/><circle cx="1093.3" cy="363.9" r="3"/><circle cx="1095.5" cy="353.6" r="3"/><circle cx="1097.7" cy="349.8" r="3"/><circle cx="1099.9" cy="366.8" r="3"/><circle cx="1102.1" cy="365.8" r="3"/><circle cx="1104.2" cy="347" r="3"/><circle cx="1106.4" cy="361.1" r="3"/><circle cx="1108.6" cy="352.6" r="3"/><circle cx="1110.8" cy="356.4" r="3"/><circle cx="1113" cy="356.4" r="3"/><circle cx="1115.2" cy="357.3" r="3"/><circle cx="1117.3" cy="356.4" r="3"/><circle cx="1119.5" cy="359.2" r="3"/><circle cx="1121.7" cy="365.8" r="3"/><circle cx="1123.9" cy="350.7" r="3"/><circle cx="1126.1" cy="353.6" r="3"/><circle cx="1128.3" cy="361.1" r="3"/><circle cx="1130.4" cy="346" r="3"/><circle cx="1132.6" cy="344.6" r="3"/><circle cx="1134.8" cy="349.8" r="3"/><circle cx="1137" cy="355.5" r="3"/><circle cx="1139.2" cy="359.2" r="3"/><circle cx="1141.3" cy="357.3" r="3"/><circle cx="1143.5" cy="356.4" r="3"/><circle cx="1145.7" cy="356.4" r="3"/><circle cx="1147.9" cy="354.5" r="3"/><circle cx="1150.1" cy="345.1" r="3"/><circle cx="1152.3" cy="356.4" r="3"/><circle cx="1154.4" cy="358.3" r="3"/><circle cx="1156.6" cy="299.5" r="3"/><circle cx="1158.8" cy="235.5" r="3"/><circle cx="1161" cy="230.1" r="3"/><circle cx="1163.2" cy="267.5" r="3"/><circle cx="1165.4" cy="347.4" r="3"/><circle cx="1167.5" cy="350.7" r="3"/><circle cx="1169.7" cy="358.3" r="3"/><circle cx="1171.9" cy="344.6" r="3"/><circle cx="1174.1" cy="366.3" r="3"/><circle cx="1176.3" cy="355.5" r="3"/><circle cx="1178.5" cy="344.6" r="3"/><circle cx="1180.6" cy="344.6" r="3"/><circle cx="1182.8" cy="350.3" r="3"/><circle cx="1185" cy="354.5" r="3"/><circle cx="1187.2" cy="356.4" r="3"/><circle cx="1189.4" cy="342.2" r="3"/><circle cx="1191.6" cy="356.4" r="3"/><circle cx="1193.7" cy="354.5" r="3"/><circle cx="1195.9" cy="347.4" r="3"/><circle cx="1198.1" cy="357.8" r="3"/><circle cx="1200.3" cy="344.1" r="3"/><circle cx="1202.5" cy="363.5" r="3"/><circle cx="1204.7" cy="343.6" r="3"/><circle cx="1206.8" cy="343.2" r="3"/><circle cx="1209" cy="334.2" r="3"/><circle cx="1211.2" cy="347.9" r="3"/><circle cx="1213.4" cy="349.8" r="3"/><circle cx="1215.6" cy="353.6" r="3"/><circle cx="1217.8" cy="360.6" r="3"/><circle cx="1219.9" cy="339.4" r="3"/><circle cx="1222.1" cy="331.4" r="3"/><circle cx="1224.3" cy="333.7" r="3"/><circle cx="1226.5" cy="342.2" r="3"/><circle cx="1228.7" cy="357.8" r="3"/><circle cx="1230.8" cy="329" r="3"/><circle cx="1233" cy="341.3" r="3"/><circle cx="1235.2" cy="341.8" r="3"/><circle cx="1237.4" cy="349.8" r="3"/><circle cx="1239.6" cy="326.2" r="3"/><circle cx="1241.8" cy="344.6" r="3"/><circle cx="1243.9" cy="337" r="3"/><circle cx="1246.1" cy="349.8" r="3"/><circle cx="1248.3" cy="353.1" r="3"/><circle cx="1250.5" cy="339.4" r="3"/><circle cx="1252.7" cy="337" r="3"/><circle cx="1254.9" cy="338.5" r="3"/><circle cx="1257" cy="329" r="3"/><circle cx="1259.2" cy="341.3" r="3"/><circle cx="1261.4" cy="352.6" r="3"/><circle cx="1263.6" cy="337" r="3"/><circle cx="1265.8" cy="337" r="3"/><circle cx="1268" cy="331.4" r="3"/><circle cx="1270.1" cy="337" r="3"/><circle cx="1272.3" cy="330.9" r="3"/><circle cx="1274.5" cy="318.2" r="3"/><circle cx="1276.7" cy="344.6" r="3"/><circle cx="1278.9" cy="330.9" r="3"/><circle cx="1281.1" cy="329" r="3"/><circle cx="1283.2" cy="349.8" r="3"/><circle cx="1285.4" cy="344.6" r="3"/><circle cx="1287.6" cy="333.7" r="3"/><circle cx="1289.8" cy="326.2" r="3"/><circle cx="1292" cy="326.2" r="3"/><circle cx="1294.2" cy="339.4" r="3"/><circle cx="1296.3" cy="337.5" r="3"/><circle cx="1298.5" cy="347.4" r="3"/><circle cx="1300.7" cy="344.6" r="3"/><circle cx="1302.9" cy="326.2" r="3"/><circle cx="1305.1" cy="336.6" r="3"/><circle cx="1307.3" cy="331.4" r="3"/><circle cx="1309.4" cy="339.4" r="3"/><circle cx="1311.6" cy="347.4" r="3"/><circle cx="1313.8" cy="337" r="3"/><circle cx="1316" cy="341.8" r="3"/><circle cx="1318.2" cy="339.4" r="3"/><circle cx="1320.4" cy="344.6" r="3"/><circle cx="1322.5" cy="339.4" r="3"/><circle cx="1324.7" cy="329" r="3"/><circle cx="1326.9" cy="337" r="3"/><circle cx="1329.1" cy="341.8" r="3"/><circle cx="1331.3" cy="347.4" r="3"/><circle cx="1333.4" cy="339.4" r="3"/><circle cx="1335.6" cy="352.6" r="3"/><circle cx="1337.8" cy="339.4" r="3"/><circle cx="1340" cy="334.2" r="3"/><circle cx="1342.2" cy="344.6" r="3"/><circle cx="1344.4" cy="321" r="3"/><circle cx="1346.5" cy="331.4" r="3"/><circle cx="1348.7" cy="339.4" r="3"/><circle cx="1350.9" cy="357.8" r="3"/><circle cx="1353.1" cy="347.4" r="3"/><circle cx="1355.3" cy="329" r="3"/><circle cx="1357.5" cy="339.4" r="3"/><circle cx="1359.6" cy="323.4" r="3"/><circle cx="1361.8" cy="339.4" r="3"/><circle cx="1364" cy="347" r="3"/><circle cx="1366.2" cy="333.7" r="3"/><circle cx="1368.4" cy="331.4" r="3"/><circle cx="1370.6" cy="341.8" r="3"/><circle cx="1372.7" cy="318.2" r="3"/><circle cx="1374.9" cy="341.8" r="3"/><circle cx="1377.1" cy="328.5" r="3"/><circle cx="1379.3" cy="328.5" r="3"/><circle cx="1381.5" cy="334.2" r="3"/><circle cx="1383.7" cy="328.5" r="3"/><circle cx="1385.8" cy="307.8" r="3"/><circle cx="1388" cy="344.6" r="3"/><circle cx="1390.2" cy="336.6" r="3"/><circle cx="1392.4" cy="331.4" r="3"/><circle cx="1394.6" cy="334.2" r="3"/><circle cx="1396.8" cy="323.4" r="3"/><circle cx="1398.9" cy="330.9" r="3"/><circle cx="1401.1" cy="330.9" r="3"/><circle cx="1403.3" cy="326.2" r="3"/><circle cx="1405.5" cy="347.4" r="3"/><circle cx="1407.7" cy="326.2" r="3"/><circle cx="1409.9" cy="339.4" r="3"/><circle cx="1412" cy="341.8" r="3"/><circle cx="1414.2" cy="344.6" r="3"/><circle cx="1416.4" cy="334.2" r="3"/><circle cx="1418.6" cy="315.3" r="3"/><circle cx="1420.8" cy="341.8" r="3"/><circle cx="1423" cy="341.8" r="3"/></g>
<path d="M1032.4 333.4 L1033.5 331.4 L1034.6 330.8 L1035.2 329.3 L1035.7 329.5 L1036.8 328.2 L1037.9 329 L1039 330.8 L1040 333.4 L1041.6 335.5 L1042.2 334.8 L1043.3 332.7 L1044.3 331.1 L1045.5 330.9 L1046.2 330.4 L1047.7 324.5 L1048.9 319.8 L1049.9 318.4 L1051 316.6 L1052 316.3 L1053.5 313.2 L1054.2 313.7 L1055.3 315.1 L1056.4 318.2 L1057.5 321.8 L1059 326.9 L1059.7 328.5 L1060.8 328.5 L1062.1 329.8 L1062.9 328.2 L1064.5 324.6 L1065.1 323.4 L1066.2 321.8 L1067.3 321.9 L1068.2 319.4 L1069.5 319 L1070.9 318.8 L1071.7 317.8 L1072.8 313.5 L1073.7 310.9 L1074.9 311 L1076 309.9 L1077 309.5 L1078.2 310.9 L1079.3 311.7 L1080.4 312.8 L1081 313.1 L1082.6 315.6 L1084.1 317.2 L1084.7 314.5 L1086 309.5 L1086.9 311.2 L1088 312.6 L1089.3 313.9 L1090.2 315.7 L1091.3 318.6 L1092.4 320.3 L1093 321.4 L1093.5 321.2 L1094.5 320.4 L1095.7 319.6 L1096.7 315.5 L1097.8 313.8 L1098.5 311.1 L1100 311.2 L1101.1 312.4 L1102.1 312.4 L1103.3 315.1 L1104.4 318.2 L1105.5 321.3 L1106.2 322.1 L1107.6 315.9 L1108.7 311.2 L1109.5 306.6 L1110.9 301.7 L1112 298.7 L1113.1 293.9 L1113.7 292.6 L1114.2 294.8 L1115.3 298 L1116.8 302.3 L1117.4 301.7 L1118.6 303.6 L1119.6 306 L1120.7 309 L1121.4 310.6 L1122.9 312.3 L1124 314.4 L1125 316.7 L1126.2 316.6 L1127.2 314.3 L1128.7 313.2 L1129.4 311.7 L1130.5 310 L1131.6 307.9 L1132.4 306.3 L1133.8 304.8 L1134.9 303.3 L1136 304.1 L1137.1 303.2 L1138.2 302.5 L1138.8 301.3 L1140.3 301.5 L1141.5 302.3 L1142.5 301.4 L1143.6 301.5 L1144.7 301.4 L1145.2 301.9 L1145.8 302.5 L1146.9 301.3 L1148 300.6 L1149 301.8 L1150.1 303.2 L1151.6 304.9 L1152.3 304.4 L1153.4 302.7 L1154.4 302.9 L1155.6 301.4 L1156.7 301.2 L1158.1 299.6 L1158.9 299.3 L1160 298.7 L1161 296.9 L1162.1 296.7 L1162.7 296.2 L1163.2 297 L1164.3 299.7 L1164.8 300.3 L1165.4 298 L1166.5 295.4 L1167.6 291.7 L1169.1 287.6 L1169.8 285.9 L1170.8 284.1 L1171.9 280.8 L1172.7 280.6 L1174.1 282.7 L1175.5 283.8 L1176.3 288.3 L1177.3 294.9 L1178.5 294.9 L1179.6 294.5 L1181 294 L1181.8 293.5 L1182.8 294.7 L1183.9 292.3 L1185 288.6 L1186.5 284 L1187.2 284 L1188.3 283.9 L1189.4 284.2 L1190.2 285 L1192 282.9 L1192.7 285 L1193.7 287.1 L1194.8 289.1 L1195.9 288.7 L1197.5 288.9 L1198.1 289.5 L1199.2 291.9 L1200.2 295.1 L1201.4 294.4 L1202.1 294 L1203.5 298.8 L1204.8 301.5 L1205.7 300.7 L1206.8 298.3 L1207.9 296.5 L1209.4 294.7 L1210.1 293.4 L1211.2 289.5 L1212.2 286.3 L1213.4 286.5 L1214.9 287.8 L1215.5 287.1 L1216.8 284.6 L1217.7 285.6 L1218.8 284 L1220.1 283.6 L1221 279.4 L1222.1 274.8 L1223.2 269.5 L1224.3 267.5 L1225 265.5 L1226 267.3 L1227.5 267.2 L1228.8 268.3 L1229.7 271.2 L1230.8 275.2 L1231.5 277.2 L1233.3 277.4 L1234.1 279.2 L1235.2 282.4 L1236.1 285.5 L1237.3 286.8 L1238.4 288.1 L1239.8 290.4 L1240.6 290 L1241.7 288.9 L1242.8 289.3 L1244.3 288.5 L1245 287.6 L1246.1 284.1 L1247.2 281.3 L1248 279.2 L1249.3 278.5 L1250.8 277.5 L1251.7 280.2 L1252.6 279.4 L1253.7 279 L1254.8 277.9 L1255.3 277.5 L1255.9 276.6 L1257 276.3 L1258 275 L1259 274.5 L1260.2 274.8 L1261.8 275.1 L1262.4 274.7 L1263.5 273.4 L1264.6 272.5 L1265.4 272.1 L1266.8 269.5 L1268.2 265.8 L1269 265.2 L1270 265 L1270.9 264.5 L1272.2 261.9 L1272.8 260.8 L1273.3 261.6 L1274.6 263.3 L1275.5 261.5 L1276.8 259.7 L1277.7 260 L1279.2 262 L1279.8 261.4 L1281 262.2 L1282 265.6 L1283.1 268.5 L1284.3 272.7 L1285.3 272.4 L1286.5 269.1 L1287.5 270.3 L1288.6 272 L1289.7 273.9 L1290.2 274.7 L1290.8 274.3 L1292 272.1 L1292.9 273.7 L1294 276.2 L1294.8 277.7 L1296.2 273.6 L1297.3 271 L1298.5 268.4 L1299.5 266.3 L1300.6 264.4 L1301.2 263 L1302.7 261.5 L1303.8 261.8 L1304.9 259.9 L1306 262.6 L1306.7 264.5 L1308.2 261.8 L1309.3 258.8 L1310.4 256.2 L1311.5 259.3 L1312.5 262.4 L1313.1 263.3 L1313.6 264 L1314.7 266.2 L1315.8 267.8 L1316.8 269 L1318 265 L1319.5 261 L1320.2 259.5 L1321.3 255.9 L1322.3 254.4 L1323.5 256.1 L1324.5 257.6 L1326 260.4 L1326.7 262.1 L1327.8 264.6 L1328.7 267.3 L1330 270.8 L1331.1 273.6 L1332.4 276.5 L1333.3 277.9 L1334.3 280.1 L1335.1 281.9 L1336.5 277.4 L1337.9 273.8 L1338.7 269.8 L1339.8 265.2 L1340.9 259.9 L1341.5 257.1 L1343.1 253.8 L1344.2 251.3 L1345.2 249.2 L1346.3 254.2 L1347.1 258.2 L1348.5 256.3 L1349.6 254.4 L1350.7 253.7 L1351.8 254.4 L1352.9 254.1 L1353.5 255.6 L1355.1 260.1 L1356.2 262.6 L1357.2 265.6 L1358.3 267.1 L1359 268.1 L1360.8 266.6 L1361.6 262.4 L1362.7 256.7 L1363.6 252.7 L1364.9 257.8 L1365.8 260.8 L1367 261.7 L1368.2 261.9 L1369.2 264.6 L1370.3 267.7 L1370.9 269.9 L1371.4 268.6 L1372.5 264.4 L1373.7 260 L1374.7 257.3 L1375.8 255.1 L1377.3 252.1 L1378 251.6 L1379 250.6 L1380.1 249.5 L1381 249.6 L1382.3 250.8 L1383.7 253.1 L1384.5 253.7 L1385.6 254.3 L1386.5 254.2 L1387.8 255.5 L1388.3 256.4 L1388.8 257.1 L1389.9 256.4 L1391 255.4 L1392 256.3 L1393.2 258.3 L1394.8 261.6 L1395.4 263.3 L1396.6 268.3 L1397.6 264.8 L1398.7 261.5 L1399.3 259 L1400.8 255.1 L1402.1 252.7 L1403 252.6 L1404.1 251.9 L1404.8 251.7 L1406.3 255.7 L1407.6 257.4 L1408.5 258.2 L1409.6 258 L1410.3 258.6 L1411.7 259.9 L1412.8 261.1 L1413.5 262 L1415 257.9 L1415.8 255.5 L1417.7 253.6 L1418.3 248.4 L1419.5 239.7 L1420.5 235.7 L1421.3 231.5 L1422.6 228 L1423.5 226.1" fill="none" stroke="#e24d42" stroke-width="2" stroke-linejoin="round" stroke-linecap="round"/>
<path d="M533 211.5H955M533 251.5H955M533 291.5H955M533 331.5H955M533 371.5H955M597.5 211.5V371.5M667.5 211.5V371.5M737.5 211.5V371.5M808.5 211.5V371.5M878.5 211.5V371.5M948.5 211.5V371.5" stroke="#ffffff" stroke-opacity="0.17" stroke-width="1" fill="none" shape-rendering="crispEdges"/>
<text x="528.5" y="215.1" text-anchor="end" font-size="11.5" fill="#c4c4c4" font-weight="normal">80</text>
<text x="528.5" y="255.1" text-anchor="end" font-size="11.5" fill="#c4c4c4" font-weight="normal">60</text>
<text x="528.5" y="295.1" text-anchor="end" font-size="11.5" fill="#c4c4c4" font-weight="normal">40</text>
<text x="528.5" y="335.1" text-anchor="end" font-size="11.5" fill="#c4c4c4" font-weight="normal">20</text>
<text x="528.5" y="375.1" text-anchor="end" font-size="11.5" fill="#c4c4c4" font-weight="normal">0</text>
<text x="597.5" y="390.8" text-anchor="middle" font-size="11.5" fill="#c4c4c4" font-weight="normal">07:00</text>
<text x="667.7" y="390.8" text-anchor="middle" font-size="11.5" fill="#c4c4c4" font-weight="normal">07:30</text>
<text x="737.9" y="390.8" text-anchor="middle" font-size="11.5" fill="#c4c4c4" font-weight="normal">08:00</text>
<text x="808.1" y="390.8" text-anchor="middle" font-size="11.5" fill="#c4c4c4" font-weight="normal">08:30</text>
<text x="878.3" y="390.8" text-anchor="middle" font-size="11.5" fill="#c4c4c4" font-weight="normal">09:00</text>
<text x="948.5" y="390.8" text-anchor="middle" font-size="11.5" fill="#c4c4c4" font-weight="normal">09:30</text>
<path d="M533.5 304.1 L534.7 314.7 L535.3 320.5 L537 319.8 L538.1 319.9 L539.4 322.3 L540.8 274.4 L541.7 280.9 L542.3 283.8 L542.9 298 L543.6 318.4 L545.4 322.3 L546.9 326.4 L547.5 311.5 L548.5 286 L550 278.8 L551.5 243 L552.2 245.8 L553.7 251.2 L554.6 262.2 L555.9 278.3 L557.4 278.6 L558.1 264.9 L559.2 243.5 L560.4 240.6 L561.6 235.5 L562.8 237 L563.8 238.9 L564.7 248.7 L565.6 238.9 L566.5 269.3 L567.4 293.2 L568 307.9 L568.6 314.1 L569.3 320.4 L570.9 318.1 L572 316.9 L573.3 305.6 L573.9 300.6 L574.5 291.3 L575.3 274.5 L576.6 264.8 L578.5 269 L579.1 266.7 L579.9 264.6 L581.2 273.8 L582.5 264.6 L583.8 268.5 L584.5 273.2 L586.1 271.4 L586.7 270.9 L587.3 271.8 L588.5 271.8 L589.7 265.4 L591.3 258 L592 259.6 L593.2 261.4 L594.1 264 L595.9 271.2 L597.2 279 L597.9 275.2 L599.2 263.8 L600.2 264.7 L601.4 267.5 L602.5 266.4 L603.2 265.8 L604.9 270.2 L606 275 L607.2 276.1 L608.7 276.7 L609.5 272.6 L611.1 264.1 L611.9 266.4 L613.3 270.2 L614.2 267.4 L615.4 265.7 L616.1 263.6 L617.7 268.8 L618.8 272 L620.1 276.3 L621.2 278.7 L622.4 278.5 L623.6 275.7 L624.3 276.6 L625.9 276.2 L627.1 275.2 L628.3 270.9 L628.9 269.3 L630.6 272.6 L631.7 274.2 L633 272 L633.5 270.2 L634.1 271 L635.3 271.8 L636.5 273.8 L637.2 274.8 L638.8 270.1 L639.9 265.7 L641.1 273.8 L641.8 274.6 L642.3 273.6 L643.5 271.7 L644.6 269.2 L645.4 268.7 L647 265.7 L647.8 263.4 L649.3 267.6 L650 269.5 L651.7 263.1 L653.3 258.6 L654 259.8 L655.2 263.6 L656.4 264.7 L657.5 265.5 L659.2 267.3 L659.9 269 L661 268.4 L661.9 269.8 L663.4 267.2 L664.5 267.2 L665.6 266.4 L666.9 272.7 L668 267 L668.9 263 L670.4 267 L672 272.2 L672.7 271.2 L673.9 267.7 L674.8 263.9 L676.6 270.8 L677.4 266.3 L678.5 264.4 L679.8 269.5 L680.3 272.7 L680.9 272.6 L682.1 267.4 L683 265.6 L684.4 265.4 L685.8 266 L687.3 274.4 L687.9 263.4 L689.5 236.8 L690.3 238.7 L691.5 242.2 L692.2 243.5 L694.1 242.4 L695 252.3 L696.1 262.8 L696.8 269.6 L698.3 268.9 L699.6 249.2 L700.5 235 L702 233.7 L703.2 234.3 L704.7 240.7 L706 234.4 L706.9 265.4 L707.8 283.2 L708.7 299.8 L710.2 301.5 L711.5 303.8 L712.5 308 L713.3 311.6 L714.2 313.4 L714.9 306 L716.1 292 L717.5 262.8 L718.8 269.4 L719.7 259 L721 270.5 L721.9 266.4 L723.4 259.2 L724.2 260.4 L725.4 263.9 L727.1 266.5 L727.7 263.8 L728.9 262 L730.1 258.1 L730.8 256.7 L732.6 257.3 L733.6 253.5 L734.4 250.9 L735.9 260 L737.2 268.1 L738.2 265.1 L739 263 L740 263.7 L740.6 261.7 L742.2 256.3 L742.9 257.6 L744.6 259.2 L745.3 259.5 L746.4 258.8 L747.3 258.7 L749.2 263 L750 258.7 L750.6 254.7 L752.3 263.1 L752.8 264.8 L753.5 261.6 L754.6 256.9 L755.2 254.4 L755.8 255.7 L757.4 256.9 L758.1 259.3 L759.3 263 L760.2 264.6 L762 267.1 L762.8 264.2 L763.9 260.7 L765.2 263.5 L766.6 264.6 L767.5 264.3 L768.7 263.8 L770.3 264.1 L771 262.5 L772.2 260.7 L773.4 259.5 L773.9 258.5 L774.5 260.7 L775.7 264.2 L776.9 268.5 L777.6 270.1 L779.5 262.9 L780.4 262.5 L781.5 261.3 L783.1 261.3 L783.9 259.9 L785.5 258.2 L786.2 259.9 L787.4 260.4 L788.6 260.8 L789.7 259.9 L790.9 258.2 L792.3 255.6 L793.2 255.4 L794.1 256.8 L795.6 259.6 L796.9 263.2 L797.9 262.4 L799.1 261.4 L800.5 261.1 L801.4 260.1 L802.6 260.4 L803.3 259.7 L804.9 259.8 L806.1 260.5 L807.3 259.5 L808.8 257.6 L809.6 256.6 L810.8 257 L811.6 255.6 L813.4 259.8 L814.3 259.3 L815.5 260.2 L817.1 262.2 L817.8 261.2 L819 260.8 L820.1 260.3 L820.7 258.8 L821.3 259.1 L822.5 259.4 L823.7 258.2 L824.4 257.3 L826 256.6 L827.2 255.5 L828.3 257.9 L829.9 260.4 L830.7 261.3 L831.7 263.5 L833 261.8 L834.2 260.4 L835.4 258.4 L836.3 260.7 L837.7 257.2 L838.7 253.3 L840 256.6 L840.9 260 L842.4 259.2 L843.7 260 L844.7 259.1 L846.1 257 L847.1 258.5 L848.3 260.7 L849.4 254.3 L850.1 250.7 L851.7 250.8 L852.8 251.9 L854.1 260.3 L854.7 264.5 L855.2 269.1 L856 273.1 L857.6 266.1 L858.4 261.6 L860.2 266.8 L861.1 263 L862 259.8 L862.9 266.6 L864.6 257.9 L865.7 253.4 L867 257.2 L868.4 260.9 L869.3 262.1 L870.3 262.8 L872.1 258.3 L872.8 259.3 L873.9 261.1 L875.1 259.2 L875.8 258.5 L876.3 259.2 L877.6 259 L878.6 257.3 L879.8 258 L880.4 256.3 L881 257.1 L882.2 258.1 L883.3 259.5 L884 260.6 L885.7 260.1 L886.8 260.8 L887.7 261 L889.5 254.3 L890.8 258 L891.5 255.5 L892.3 252.7 L893.8 257.4 L895 250.7 L895.6 249 L896.2 252.8 L897.8 258.2 L898.5 259.1 L899.6 259 L901.1 264.5 L902 264.5 L903.2 260.8 L904.2 259.8 L906.1 262 L906.7 260.1 L907.9 256 L908.8 254.6 L910.6 260.2 L911.4 258.6 L912.6 258.4 L913.4 258.4 L914.9 256.5 L915.8 253.1 L917.3 255.7 L918 257.3 L919.6 254.6 L920.7 253.4 L921.9 254.3 L922.9 255.6 L924.4 274.4 L925.5 278.4 L926.2 280.4 L927.5 280.1 L929 285.7 L930.1 275 L930.8 269.2 L932.3 264 L933.6 262.9 L934.8 261.3 L935.4 259.9 L936 260 L937.1 259.9 L938.2 260.9 L939.5 261.3 L940.9 262.7 L941.8 261 L943 259.6 L944 257.5 L945.3 260.6 L946.4 263.1 L947.7 257.5 L948.8 252.5 L950 255.5 L950.6 256.4 L951.2 255.5 L951.9 252.9 L953.8 257.5 L955 254.5 L954.7 313.3 L953.5 314.3 L952.4 315.1 L951 315.9 L950 314.1 L948.9 314.2 L948.3 313.4 L947.7 315.9 L946.4 320.8 L945.3 318.4 L943.7 315 L943 316.6 L941.8 316.4 L940.7 316.9 L940 317.8 L938.3 317.5 L937.1 317.2 L936.3 317.1 L934.8 318.8 L933.6 318.4 L932.7 319.6 L930.8 324.5 L930.1 329.4 L929 338 L927.8 337.7 L926.2 337.3 L925.5 334.2 L924.8 331.5 L923.5 315.1 L921.6 308.9 L920.8 310.4 L919.6 310.9 L918.9 311.1 L917.1 310.7 L916.1 312.1 L914.9 312.9 L913.8 314 L912.5 316.1 L911.4 315.3 L910.2 315.1 L908.8 315.4 L907.9 315.8 L906.7 317.7 L905.1 318.8 L904.4 318.5 L903.2 318.5 L902 317.8 L901.5 318 L900.9 317 L899.7 317.3 L898.5 316.3 L897.8 315.7 L896.2 311.9 L895 308.7 L893.9 311.7 L892.3 314 L891.5 314.2 L890.4 314.9 L889.5 315 L888 317.3 L886.8 318.9 L885.9 320.2 L884.5 318.9 L883.3 317.5 L882.2 317.4 L881 317.3 L879.8 316.1 L878.6 316.3 L877.6 316 L876.3 316.7 L874.9 318.7 L874 317.7 L872.8 317.9 L871.6 318.9 L870.5 318.2 L869.4 317 L868.1 315.4 L867 314.7 L865.7 313.8 L864.6 315.6 L863.4 317.3 L862 319.6 L861.1 318.6 L859.9 318.1 L858.8 315.9 L857.4 315.3 L856.4 315.7 L855.2 315.1 L854.1 315.1 L852.8 315.7 L851.7 316.8 L850.6 317.3 L849.4 317.1 L848.3 318.1 L847.1 316.1 L845.5 314.2 L844.7 315.5 L843.5 315.5 L842.8 316.7 L841.2 314.8 L840 313.7 L839.1 313.2 L837.7 314.6 L836.3 315.1 L835.4 315.5 L834.2 316.6 L832.7 317.9 L831.9 317.5 L830.7 315.9 L829.9 315 L828.3 312.9 L827.2 311.5 L826.2 310.1 L824.4 311.6 L823.7 311.3 L822.5 311.9 L821.3 312.6 L820.7 313.1 L820.1 313.6 L819 314 L817.8 314.1 L816.1 315.2 L815.5 314.7 L814.3 313.8 L813.4 313.3 L812 311.1 L810.6 309 L809.6 310.1 L808.5 311.8 L807.9 313.2 L807.3 313 L806.1 312.9 L804.9 312.6 L804.2 312.4 L802.6 313.5 L801.4 314.9 L800.5 315.4 L799.1 314 L797.9 313.4 L796.9 313.1 L795.6 313.6 L794.4 313.1 L793.2 312.9 L792.1 313.5 L790.9 315.1 L789.5 316 L788.6 314.3 L787.4 314.3 L786.8 313.9 L786.2 315.2 L785 316.3 L784 317.1 L782.7 315.7 L781.5 314.6 L780.4 313.7 L779.5 313.4 L777.6 318.7 L776.9 317.9 L775.7 315.5 L774.5 312.8 L773.9 311.7 L773.4 311.3 L772.2 312.2 L771 311.3 L770.3 312.2 L768.7 314 L767.5 314.3 L766.3 313.2 L765.2 312.7 L763.5 310.4 L762.8 312.6 L761.6 316.2 L761.1 317.6 L760.5 316.1 L759.3 314.5 L758.1 312.9 L756.5 310.5 L755.8 310.5 L754.6 311.6 L753.5 312.6 L752.8 312.5 L752.3 312.6 L751.1 311.5 L750.1 310.2 L748.8 312.1 L747.3 315.1 L746.4 313.4 L745.3 312.1 L744.1 310.5 L742.8 309 L741.8 310.6 L740.6 312.8 L740 313.1 L739 313 L738.2 312.9 L737.1 312.9 L736.3 313.1 L734.7 312.6 L733.5 311.6 L732.4 311.1 L730.8 312.1 L730.1 314.2 L728.9 316 L728 316.8 L726.5 313.8 L725.4 313.3 L724.3 311.1 L723 313.6 L721.9 314.8 L720.7 317.8 L719.5 317.3 L717.9 316.2 L717.2 320.4 L716 322.8 L715.2 327 L713.3 317.5 L712.5 312.3 L711.5 305.3 L710.2 303.9 L708.7 304.9 L707.8 308.7 L706.9 312.7 L705.5 313.8 L704.1 315.1 L703.1 314.5 L702 314.9 L700.5 315.1 L699.6 314.2 L698.5 312.1 L697.7 309.7 L696.1 312.8 L695 315 L693.8 315.8 L692.6 315.9 L691.3 316 L690.3 316.1 L689.1 316.6 L687.6 317.1 L686.8 316.6 L685.6 316.7 L684 315.9 L683.3 315.5 L682.1 315.1 L681.2 314.8 L679.8 316.3 L678.6 317.4 L677.5 318.1 L676.2 316.9 L674.8 315 L673.9 315.7 L672.7 318 L671.1 318.7 L670.4 318.5 L669.2 316.3 L668.4 315.2 L666.9 317.1 L665.7 316.8 L664.5 317.2 L663.8 317.7 L662.2 317.9 L661 318.2 L660.1 317.1 L658.7 317.3 L657.5 319.4 L656.4 320.7 L655.2 318.6 L654 316.3 L652.8 315.5 L651.9 313.4 L650.5 314.4 L649.3 314.9 L648.2 315.4 L647.3 316.9 L645.8 317.4 L644.6 317.3 L643.6 316.8 L642.3 316.7 L640.8 315.1 L640 317.5 L638.8 320.4 L638.1 321.6 L636.3 318.7 L635.3 317.7 L634.1 317.4 L633.5 317.1 L633 317.6 L631.8 319.5 L630.8 320.1 L629.4 320.5 L628.3 322.6 L627.1 323.5 L625.9 322.9 L624.8 323.1 L623.4 321.4 L622.4 320.9 L621.2 321.2 L619.7 319.8 L618.9 319.8 L617.7 320 L617 319.8 L615.4 317 L614.2 314.4 L613.1 318.4 L611.5 322.5 L610.7 320.5 L609.5 317.5 L608.7 315.9 L607.2 316.9 L606 317.4 L605.1 317.9 L603.7 318.8 L602.5 319.4 L601.4 319.6 L600.2 320.9 L599.2 320.7 L597.4 328.1 L596.7 324.5 L595.5 319.5 L595 317 L594.3 315.9 L593.1 312.3 L592 313.5 L590.4 314.1 L589.7 315.8 L588.5 317.3 L587.6 318.9 L586.1 321 L584.9 323.7 L583.8 322.4 L583 322.5 L581.2 317.7 L580.3 320.2 L579.4 322.5 L578 320 L577.2 318.9 L575.3 326 L574.5 341.1 L573.9 352 L573.3 359.2 L572.4 370.7 L570.9 369.9 L570.2 369.4 L568.4 366.5 L567.4 344.7 L566.9 333.4 L566.3 313.6 L565.6 295 L563.8 292.8 L562.8 292.1 L561.6 291.4 L561 290.4 L560.4 292.6 L559.2 296.8 L558.1 317.4 L557.4 330.7 L555.5 322.4 L554.6 310.4 L553.7 300.3 L552.2 297.3 L550.9 295.4 L549.9 292.7 L549.1 291.2 L547.3 327.1 L546.4 325.3 L545.2 321.7 L544.5 319.8 L542.7 321.3 L541.7 322.6 L540.5 325.6 L539.9 326.2 L539 319.7 L538.2 319.9 L537 321.4 L536.3 322.6 L534.7 321 L533.5 319.7 Z" fill="#eab839" fill-opacity="0.1"/>
<path d="M533.5 319.7 L534.7 321 L536.3 322.6 L537 321.4 L538.2 319.9 L539 319.7 L539.9 326.2 L540.5 325.6 L541.7 322.6 L542.7 321.3 L544.5 319.8 L545.2 321.7 L546.4 325.3 L547.3 327.1 L549.1 291.2 L549.9 292.7 L550.9 295.4 L552.2 297.3 L553.7 300.3 L554.6 310.4 L555.5 322.4 L557.4 330.7 L558.1 317.4 L559.2 296.8 L560.4 292.6 L561 290.4 L561.6 291.4 L562.8 292.1 L563.8 292.8 L565.6 295 L566.3 313.6 L566.9 333.4 L567.4 344.7 L568.4 366.5 L570.2 369.4 L570.9 369.9 L572.4 370.7 L573.3 359.2 L573.9 352 L574.5 341.1 L575.3 326 L577.2 318.9 L578 320 L579.4 322.5 L580.3 320.2 L581.2 317.7 L583 322.5 L583.8 322.4 L584.9 323.7 L586.1 321 L587.6 318.9 L588.5 317.3 L589.7 315.8 L590.4 314.1 L592 313.5 L593.1 312.3 L594.3 315.9 L595 317 L595.5 319.5 L596.7 324.5 L597.4 328.1 L599.2 320.7 L600.2 320.9 L601.4 319.6 L602.5 319.4 L603.7 318.8 L605.1 317.9 L606 317.4 L607.2 316.9 L608.7 315.9 L609.5 317.5 L610.7 320.5 L611.5 322.5 L613.1 318.4 L614.2 314.4 L615.4 317 L617 319.8 L617.7 320 L618.9 319.8 L619.7 319.8 L621.2 321.2 L622.4 320.9 L623.4 321.4 L624.8 323.1 L625.9 322.9 L627.1 323.5 L628.3 322.6 L629.4 320.5 L630.8 320.1 L631.8 319.5 L633 317.6 L633.5 317.1 L634.1 317.4 L635.3 317.7 L636.3 318.7 L638.1 321.6 L638.8 320.4 L640 317.5 L640.8 315.1 L642.3 316.7 L643.6 316.8 L644.6 317.3 L645.8 317.4 L647.3 316.9 L648.2 315.4 L649.3 314.9 L650.5 314.4 L651.9 313.4 L652.8 315.5 L654 316.3 L655.2 318.6 L656.4 320.7 L657.5 319.4 L658.7 317.3 L660.1 317.1 L661 318.2 L662.2 317.9 L663.8 317.7 L664.5 317.2 L665.7 316.8 L666.9 317.1 L668.4 315.2 L669.2 316.3 L670.4 318.5 L671.1 318.7 L672.7 318 L673.9 315.7 L674.8 315 L676.2 316.9 L677.5 318.1 L678.6 317.4 L679.8 316.3 L681.2 314.8 L682.1 315.1 L683.3 315.5 L684 315.9 L685.6 316.7 L686.8 316.6 L687.6 317.1 L689.1 316.6 L690.3 316.1 L691.3 316 L692.6 315.9 L693.8 315.8 L695 315 L696.1 312.8 L697.7 309.7 L698.5 312.1 L699.6 314.2 L700.5 315.1 L702 314.9 L703.1 314.5 L704.1 315.1 L705.5 313.8 L706.9 312.7 L707.8 308.7 L708.7 304.9 L710.2 303.9 L711.5 305.3 L712.5 312.3 L713.3 317.5 L715.2 327 L716 322.8 L717.2 320.4 L717.9 316.2 L719.5 317.3 L720.7 317.8 L721.9 314.8 L723 313.6 L724.3 311.1 L725.4 313.3 L726.5 313.8 L728 316.8 L728.9 316 L730.1 314.2 L730.8 312.1 L732.4 311.1 L733.5 311.6 L734.7 312.6 L736.3 313.1 L737.1 312.9 L738.2 312.9 L739 313 L740 313.1 L740.6 312.8 L741.8 310.6 L742.8 309 L744.1 310.5 L745.3 312.1 L746.4 313.4 L747.3 315.1 L748.8 312.1 L750.1 310.2 L751.1 311.5 L752.3 312.6 L752.8 312.5 L753.5 312.6 L754.6 311.6 L755.8 310.5 L756.5 310.5 L758.1 312.9 L759.3 314.5 L760.5 316.1 L761.1 317.6 L761.6 316.2 L762.8 312.6 L763.5 310.4 L765.2 312.7 L766.3 313.2 L767.5 314.3 L768.7 314 L770.3 312.2 L771 311.3 L772.2 312.2 L773.4 311.3 L773.9 311.7 L774.5 312.8 L775.7 315.5 L776.9 317.9 L777.6 318.7 L779.5 313.4 L780.4 313.7 L781.5 314.6 L782.7 315.7 L784 317.1 L785 316.3 L786.2 315.2 L786.8 313.9 L787.4 314.3 L788.6 314.3 L789.5 316 L790.9 315.1 L792.1 313.5 L793.2 312.9 L794.4 313.1 L795.6 313.6 L796.9 313.1 L797.9 313.4 L799.1 314 L800.5 315.4 L801.4 314.9 L802.6 313.5 L804.2 312.4 L804.9 312.6 L806.1 312.9 L807.3 313 L807.9 313.2 L808.5 311.8 L809.6 310.1 L810.6 309 L812 311.1 L813.4 313.3 L814.3 313.8 L815.5 314.7 L816.1 315.2 L817.8 314.1 L819 314 L820.1 313.6 L820.7 313.1 L821.3 312.6 L822.5 311.9 L823.7 311.3 L824.4 311.6 L826.2 310.1 L827.2 311.5 L828.3 312.9 L829.9 315 L830.7 315.9 L831.9 317.5 L832.7 317.9 L834.2 316.6 L835.4 315.5 L836.3 315.1 L837.7 314.6 L839.1 313.2 L840 313.7 L841.2 314.8 L842.8 316.7 L843.5 315.5 L844.7 315.5 L845.5 314.2 L847.1 316.1 L848.3 318.1 L849.4 317.1 L850.6 317.3 L851.7 316.8 L852.8 315.7 L854.1 315.1 L855.2 315.1 L856.4 315.7 L857.4 315.3 L858.8 315.9 L859.9 318.1 L861.1 318.6 L862 319.6 L863.4 317.3 L864.6 315.6 L865.7 313.8 L867 314.7 L868.1 315.4 L869.4 317 L870.5 318.2 L871.6 318.9 L872.8 317.9 L874 317.7 L874.9 318.7 L876.3 316.7 L877.6 316 L878.6 316.3 L879.8 316.1 L881 317.3 L882.2 317.4 L883.3 317.5 L884.5 318.9 L885.9 320.2 L886.8 318.9 L888 317.3 L889.5 315 L890.4 314.9 L891.5 314.2 L892.3 314 L893.9 311.7 L895 308.7 L896.2 311.9 L897.8 315.7 L898.5 316.3 L899.7 317.3 L900.9 317 L901.5 318 L902 317.8 L903.2 318.5 L904.4 318.5 L905.1 318.8 L906.7 317.7 L907.9 315.8 L908.8 315.4 L910.2 315.1 L911.4 315.3 L912.5 316.1 L913.8 314 L914.9 312.9 L916.1 312.1 L917.1 310.7 L918.9 311.1 L919.6 310.9 L920.8 310.4 L921.6 308.9 L923.5 315.1 L924.8 331.5 L925.5 334.2 L926.2 337.3 L927.8 337.7 L929 338 L930.1 329.4 L930.8 324.5 L932.7 319.6 L933.6 318.4 L934.8 318.8 L936.3 317.1 L937.1 317.2 L938.3 317.5 L940 317.8 L940.7 316.9 L941.8 316.4 L943 316.6 L943.7 315 L945.3 318.4 L946.4 320.8 L947.7 315.9 L948.3 313.4 L948.9 314.2 L950 314.1 L951 315.9 L952.4 315.1 L953.5 314.3 L954.7 313.3 L954.7 371.5 L533.5 371.5 Z" fill="#7eb26d" fill-opacity="0.1"/>
<path d="M533.5 319.7 L534.7 321 L536.3 322.6 L537 321.4 L538.2 319.9 L539 319.7 L539.9 326.2 L540.5 325.6 L541.7 322.6 L542.7 321.3 L544.5 319.8 L545.2 321.7 L546.4 325.3 L547.3 327.1 L549.1 291.2 L549.9 292.7 L550.9 295.4 L552.2 297.3 L553.7 300.3 L554.6 310.4 L555.5 322.4 L557.4 330.7 L558.1 317.4 L559.2 296.8 L560.4 292.6 L561 290.4 L561.6 291.4 L562.8 292.1 L563.8 292.8 L565.6 295 L566.3 313.6 L566.9 333.4 L567.4 344.7 L568.4 366.5 L570.2 369.4 L570.9 369.9 L572.4 370.7 L573.3 359.2 L573.9 352 L574.5 341.1 L575.3 326 L577.2 318.9 L578 320 L579.4 322.5 L580.3 320.2 L581.2 317.7 L583 322.5 L583.8 322.4 L584.9 323.7 L586.1 321 L587.6 318.9 L588.5 317.3 L589.7 315.8 L590.4 314.1 L592 313.5 L593.1 312.3 L594.3 315.9 L595 317 L595.5 319.5 L596.7 324.5 L597.4 328.1 L599.2 320.7 L600.2 320.9 L601.4 319.6 L602.5 319.4 L603.7 318.8 L605.1 317.9 L606 317.4 L607.2 316.9 L608.7 315.9 L609.5 317.5 L610.7 320.5 L611.5 322.5 L613.1 318.4 L614.2 314.4 L615.4 317 L617 319.8 L617.7 320 L618.9 319.8 L619.7 319.8 L621.2 321.2 L622.4 320.9 L623.4 321.4 L624.8 323.1 L625.9 322.9 L627.1 323.5 L628.3 322.6 L629.4 320.5 L630.8 320.1 L631.8 319.5 L633 317.6 L633.5 317.1 L634.1 317.4 L635.3 317.7 L636.3 318.7 L638.1 321.6 L638.8 320.4 L640 317.5 L640.8 315.1 L642.3 316.7 L643.6 316.8 L644.6 317.3 L645.8 317.4 L647.3 316.9 L648.2 315.4 L649.3 314.9 L650.5 314.4 L651.9 313.4 L652.8 315.5 L654 316.3 L655.2 318.6 L656.4 320.7 L657.5 319.4 L658.7 317.3 L660.1 317.1 L661 318.2 L662.2 317.9 L663.8 317.7 L664.5 317.2 L665.7 316.8 L666.9 317.1 L668.4 315.2 L669.2 316.3 L670.4 318.5 L671.1 318.7 L672.7 318 L673.9 315.7 L674.8 315 L676.2 316.9 L677.5 318.1 L678.6 317.4 L679.8 316.3 L681.2 314.8 L682.1 315.1 L683.3 315.5 L684 315.9 L685.6 316.7 L686.8 316.6 L687.6 317.1 L689.1 316.6 L690.3 316.1 L691.3 316 L692.6 315.9 L693.8 315.8 L695 315 L696.1 312.8 L697.7 309.7 L698.5 312.1 L699.6 314.2 L700.5 315.1 L702 314.9 L703.1 314.5 L704.1 315.1 L705.5 313.8 L706.9 312.7 L707.8 308.7 L708.7 304.9 L710.2 303.9 L711.5 305.3 L712.5 312.3 L713.3 317.5 L715.2 327 L716 322.8 L717.2 320.4 L717.9 316.2 L719.5 317.3 L720.7 317.8 L721.9 314.8 L723 313.6 L724.3 311.1 L725.4 313.3 L726.5 313.8 L728 316.8 L728.9 316 L730.1 314.2 L730.8 312.1 L732.4 311.1 L733.5 311.6 L734.7 312.6 L736.3 313.1 L737.1 312.9 L738.2 312.9 L739 313 L740 313.1 L740.6 312.8 L741.8 310.6 L742.8 309 L744.1 310.5 L745.3 312.1 L746.4 313.4 L747.3 315.1 L748.8 312.1 L750.1 310.2 L751.1 311.5 L752.3 312.6 L752.8 312.5 L753.5 312.6 L754.6 311.6 L755.8 310.5 L756.5 310.5 L758.1 312.9 L759.3 314.5 L760.5 316.1 L761.1 317.6 L761.6 316.2 L762.8 312.6 L763.5 310.4 L765.2 312.7 L766.3 313.2 L767.5 314.3 L768.7 314 L770.3 312.2 L771 311.3 L772.2 312.2 L773.4 311.3 L773.9 311.7 L774.5 312.8 L775.7 315.5 L776.9 317.9 L777.6 318.7 L779.5 313.4 L780.4 313.7 L781.5 314.6 L782.7 315.7 L784 317.1 L785 316.3 L786.2 315.2 L786.8 313.9 L787.4 314.3 L788.6 314.3 L789.5 316 L790.9 315.1 L792.1 313.5 L793.2 312.9 L794.4 313.1 L795.6 313.6 L796.9 313.1 L797.9 313.4 L799.1 314 L800.5 315.4 L801.4 314.9 L802.6 313.5 L804.2 312.4 L804.9 312.6 L806.1 312.9 L807.3 313 L807.9 313.2 L808.5 311.8 L809.6 310.1 L810.6 309 L812 311.1 L813.4 313.3 L814.3 313.8 L815.5 314.7 L816.1 315.2 L817.8 314.1 L819 314 L820.1 313.6 L820.7 313.1 L821.3 312.6 L822.5 311.9 L823.7 311.3 L824.4 311.6 L826.2 310.1 L827.2 311.5 L828.3 312.9 L829.9 315 L830.7 315.9 L831.9 317.5 L832.7 317.9 L834.2 316.6 L835.4 315.5 L836.3 315.1 L837.7 314.6 L839.1 313.2 L840 313.7 L841.2 314.8 L842.8 316.7 L843.5 315.5 L844.7 315.5 L845.5 314.2 L847.1 316.1 L848.3 318.1 L849.4 317.1 L850.6 317.3 L851.7 316.8 L852.8 315.7 L854.1 315.1 L855.2 315.1 L856.4 315.7 L857.4 315.3 L858.8 315.9 L859.9 318.1 L861.1 318.6 L862 319.6 L863.4 317.3 L864.6 315.6 L865.7 313.8 L867 314.7 L868.1 315.4 L869.4 317 L870.5 318.2 L871.6 318.9 L872.8 317.9 L874 317.7 L874.9 318.7 L876.3 316.7 L877.6 316 L878.6 316.3 L879.8 316.1 L881 317.3 L882.2 317.4 L883.3 317.5 L884.5 318.9 L885.9 320.2 L886.8 318.9 L888 317.3 L889.5 315 L890.4 314.9 L891.5 314.2 L892.3 314 L893.9 311.7 L895 308.7 L896.2 311.9 L897.8 315.7 L898.5 316.3 L899.7 317.3 L900.9 317 L901.5 318 L902 317.8 L903.2 318.5 L904.4 318.5 L905.1 318.8 L906.7 317.7 L907.9 315.8 L908.8 315.4 L910.2 315.1 L911.4 315.3 L912.5 316.1 L913.8 314 L914.9 312.9 L916.1 312.1 L917.1 310.7 L918.9 311.1 L919.6 310.9 L920.8 310.4 L921.6 308.9 L923.5 315.1 L924.8 331.5 L925.5 334.2 L926.2 337.3 L927.8 337.7 L929 338 L930.1 329.4 L930.8 324.5 L932.7 319.6 L933.6 318.4 L934.8 318.8 L936.3 317.1 L937.1 317.2 L938.3 317.5 L940 317.8 L940.7 316.9 L941.8 316.4 L943 316.6 L943.7 315 L945.3 318.4 L946.4 320.8 L947.7 315.9 L948.3 313.4 L948.9 314.2 L950 314.1 L951 315.9 L952.4 315.1 L953.5 314.3 L954.7 313.3" fill="none" stroke="#7eb26d" stroke-width="1" stroke-linejoin="round"/>
<path d="M533.5 304.1 L534.7 314.7 L535.3 320.5 L537 319.8 L538.1 319.9 L539.4 322.3 L540.8 274.4 L541.7 280.9 L542.3 283.8 L542.9 298 L543.6 318.4 L545.4 322.3 L546.9 326.4 L547.5 311.5 L548.5 286 L550 278.8 L551.5 243 L552.2 245.8 L553.7 251.2 L554.6 262.2 L555.9 278.3 L557.4 278.6 L558.1 264.9 L559.2 243.5 L560.4 240.6 L561.6 235.5 L562.8 237 L563.8 238.9 L564.7 248.7 L565.6 238.9 L566.5 269.3 L567.4 293.2 L568 307.9 L568.6 314.1 L569.3 320.4 L570.9 318.1 L572 316.9 L573.3 305.6 L573.9 300.6 L574.5 291.3 L575.3 274.5 L576.6 264.8 L578.5 269 L579.1 266.7 L579.9 264.6 L581.2 273.8 L582.5 264.6 L583.8 268.5 L584.5 273.2 L586.1 271.4 L586.7 270.9 L587.3 271.8 L588.5 271.8 L589.7 265.4 L591.3 258 L592 259.6 L593.2 261.4 L594.1 264 L595.9 271.2 L597.2 279 L597.9 275.2 L599.2 263.8 L600.2 264.7 L601.4 267.5 L602.5 266.4 L603.2 265.8 L604.9 270.2 L606 275 L607.2 276.1 L608.7 276.7 L609.5 272.6 L611.1 264.1 L611.9 266.4 L613.3 270.2 L614.2 267.4 L615.4 265.7 L616.1 263.6 L617.7 268.8 L618.8 272 L620.1 276.3 L621.2 278.7 L622.4 278.5 L623.6 275.7 L624.3 276.6 L625.9 276.2 L627.1 275.2 L628.3 270.9 L628.9 269.3 L630.6 272.6 L631.7 274.2 L633 272 L633.5 270.2 L634.1 271 L635.3 271.8 L636.5 273.8 L637.2 274.8 L638.8 270.1 L639.9 265.7 L641.1 273.8 L641.8 274.6 L642.3 273.6 L643.5 271.7 L644.6 269.2 L645.4 268.7 L647 265.7 L647.8 263.4 L649.3 267.6 L650 269.5 L651.7 263.1 L653.3 258.6 L654 259.8 L655.2 263.6 L656.4 264.7 L657.5 265.5 L659.2 267.3 L659.9 269 L661 268.4 L661.9 269.8 L663.4 267.2 L664.5 267.2 L665.6 266.4 L666.9 272.7 L668 267 L668.9 263 L670.4 267 L672 272.2 L672.7 271.2 L673.9 267.7 L674.8 263.9 L676.6 270.8 L677.4 266.3 L678.5 264.4 L679.8 269.5 L680.3 272.7 L680.9 272.6 L682.1 267.4 L683 265.6 L684.4 265.4 L685.8 266 L687.3 274.4 L687.9 263.4 L689.5 236.8 L690.3 238.7 L691.5 242.2 L692.2 243.5 L694.1 242.4 L695 252.3 L696.1 262.8 L696.8 269.6 L698.3 268.9 L699.6 249.2 L700.5 235 L702 233.7 L703.2 234.3 L704.7 240.7 L706 234.4 L706.9 265.4 L707.8 283.2 L708.7 299.8 L710.2 301.5 L711.5 303.8 L712.5 308 L713.3 311.6 L714.2 313.4 L714.9 306 L716.1 292 L717.5 262.8 L718.8 269.4 L719.7 259 L721 270.5 L721.9 266.4 L723.4 259.2 L724.2 260.4 L725.4 263.9 L727.1 266.5 L727.7 263.8 L728.9 262 L730.1 258.1 L730.8 256.7 L732.6 257.3 L733.6 253.5 L734.4 250.9 L735.9 260 L737.2 268.1 L738.2 265.1 L739 263 L740 263.7 L740.6 261.7 L742.2 256.3 L742.9 257.6 L744.6 259.2 L745.3 259.5 L746.4 258.8 L747.3 258.7 L749.2 263 L750 258.7 L750.6 254.7 L752.3 263.1 L752.8 264.8 L753.5 261.6 L754.6 256.9 L755.2 254.4 L755.8 255.7 L757.4 256.9 L758.1 259.3 L759.3 263 L760.2 264.6 L762 267.1 L762.8 264.2 L763.9 260.7 L765.2 263.5 L766.6 264.6 L767.5 264.3 L768.7 263.8 L770.3 264.1 L771 262.5 L772.2 260.7 L773.4 259.5 L773.9 258.5 L774.5 260.7 L775.7 264.2 L776.9 268.5 L777.6 270.1 L779.5 262.9 L780.4 262.5 L781.5 261.3 L783.1 261.3 L783.9 259.9 L785.5 258.2 L786.2 259.9 L787.4 260.4 L788.6 260.8 L789.7 259.9 L790.9 258.2 L792.3 255.6 L793.2 255.4 L794.1 256.8 L795.6 259.6 L796.9 263.2 L797.9 262.4 L799.1 261.4 L800.5 261.1 L801.4 260.1 L802.6 260.4 L803.3 259.7 L804.9 259.8 L806.1 260.5 L807.3 259.5 L808.8 257.6 L809.6 256.6 L810.8 257 L811.6 255.6 L813.4 259.8 L814.3 259.3 L815.5 260.2 L817.1 262.2 L817.8 261.2 L819 260.8 L820.1 260.3 L820.7 258.8 L821.3 259.1 L822.5 259.4 L823.7 258.2 L824.4 257.3 L826 256.6 L827.2 255.5 L828.3 257.9 L829.9 260.4 L830.7 261.3 L831.7 263.5 L833 261.8 L834.2 260.4 L835.4 258.4 L836.3 260.7 L837.7 257.2 L838.7 253.3 L840 256.6 L840.9 260 L842.4 259.2 L843.7 260 L844.7 259.1 L846.1 257 L847.1 258.5 L848.3 260.7 L849.4 254.3 L850.1 250.7 L851.7 250.8 L852.8 251.9 L854.1 260.3 L854.7 264.5 L855.2 269.1 L856 273.1 L857.6 266.1 L858.4 261.6 L860.2 266.8 L861.1 263 L862 259.8 L862.9 266.6 L864.6 257.9 L865.7 253.4 L867 257.2 L868.4 260.9 L869.3 262.1 L870.3 262.8 L872.1 258.3 L872.8 259.3 L873.9 261.1 L875.1 259.2 L875.8 258.5 L876.3 259.2 L877.6 259 L878.6 257.3 L879.8 258 L880.4 256.3 L881 257.1 L882.2 258.1 L883.3 259.5 L884 260.6 L885.7 260.1 L886.8 260.8 L887.7 261 L889.5 254.3 L890.8 258 L891.5 255.5 L892.3 252.7 L893.8 257.4 L895 250.7 L895.6 249 L896.2 252.8 L897.8 258.2 L898.5 259.1 L899.6 259 L901.1 264.5 L902 264.5 L903.2 260.8 L904.2 259.8 L906.1 262 L906.7 260.1 L907.9 256 L908.8 254.6 L910.6 260.2 L911.4 258.6 L912.6 258.4 L913.4 258.4 L914.9 256.5 L915.8 253.1 L917.3 255.7 L918 257.3 L919.6 254.6 L920.7 253.4 L921.9 254.3 L922.9 255.6 L924.4 274.4 L925.5 278.4 L926.2 280.4 L927.5 280.1 L929 285.7 L930.1 275 L930.8 269.2 L932.3 264 L933.6 262.9 L934.8 261.3 L935.4 259.9 L936 260 L937.1 259.9 L938.2 260.9 L939.5 261.3 L940.9 262.7 L941.8 261 L943 259.6 L944 257.5 L945.3 260.6 L946.4 263.1 L947.7 257.5 L948.8 252.5 L950 255.5 L950.6 256.4 L951.2 255.5 L951.9 252.9 L953.8 257.5 L955 254.5" fill="none" stroke="#eab839" stroke-width="1" stroke-linejoin="round"/>
<path d="M51.8 478.5H711M51.8 513.5H711M51.8 548.5H711M51.8 583.5H711M51.8 618.5H711M51.8 653.5H711M51.8 688.5H711M151.5 478.5V688.5M261.5 478.5V688.5M371.5 478.5V688.5M481.5 478.5V688.5M591.5 478.5V688.5M701.5 478.5V688.5" stroke="#ffffff" stroke-opacity="0.17" stroke-width="1" fill="none" shape-rendering="crispEdges"/>
<text x="46.5" y="482.1" text-anchor="end" font-size="11.5" fill="#c4c4c4" font-weight="normal">150</text>
<text x="46.5" y="517.1" text-anchor="end" font-size="11.5" fill="#c4c4c4" font-weight="normal">125</text>
<text x="46.5" y="552.1" text-anchor="end" font-size="11.5" fill="#c4c4c4" font-weight="normal">100</text>
<text x="46.5" y="587.1" text-anchor="end" font-size="11.5" fill="#c4c4c4" font-weight="normal">75</text>
<text x="46.5" y="622.1" text-anchor="end" font-size="11.5" fill="#c4c4c4" font-weight="normal">50</text>
<text x="46.5" y="657.1" text-anchor="end" font-size="11.5" fill="#c4c4c4" font-weight="normal">25</text>
<text x="46.5" y="692.1" text-anchor="end" font-size="11.5" fill="#c4c4c4" font-weight="normal">0</text>
<text x="151.4" y="707.8" text-anchor="middle" font-size="11.5" fill="#c4c4c4" font-weight="normal">07:00</text>
<text x="261.4" y="707.8" text-anchor="middle" font-size="11.5" fill="#c4c4c4" font-weight="normal">07:30</text>
<text x="371.4" y="707.8" text-anchor="middle" font-size="11.5" fill="#c4c4c4" font-weight="normal">08:00</text>
<text x="481.4" y="707.8" text-anchor="middle" font-size="11.5" fill="#c4c4c4" font-weight="normal">08:30</text>
<text x="591.4" y="707.8" text-anchor="middle" font-size="11.5" fill="#c4c4c4" font-weight="normal">09:00</text>
<text x="701.4" y="707.8" text-anchor="middle" font-size="11.5" fill="#c4c4c4" font-weight="normal">09:30</text>
<path d="M52 544.3 L53.5 544 L55 550 L56.5 546.5 L58 547.4 L59.5 554.1 L61 548 L62.5 556.7 L64 542.3 L65.5 542 L67 551 L68.5 540.8 L70 555.3 L71.5 557.6 L73 581.7 L74.5 580 L76 579.5 L77.5 571.2 L79 581.4 L80.5 589.7 L82 575.5 L83.5 559.3 L85 553.3 L86.5 542.5 L88 565.6 L89.5 569.3 L91 537.1 L92.5 520.3 L94 512.9 L95.5 517.6 L97 520.6 L98.5 523.4 L100 517.9 L101.5 521.9 L103 534.6 L104.5 545.2 L106 535 L107.5 521.7 L109 521 L110.5 516.5 L112 519.4 L113.5 527.8 L115 524.5 L116.5 535.3 L118 557.8 L119.5 546.4 L121 547.9 L122.5 545.2 L124 539.8 L125.5 534.6 L127 540.3 L128.5 550.7 L130 549.1 L131.5 537.2 L133 538.5 L134.5 544.7 L136 536.1 L137.5 537.9 L139 530 L140.5 527.7 L142 520.1 L143.5 529.7 L145 526.1 L146.5 516.2 L148 538.7 L149.5 547.5 L151 572.7 L152.5 556.3 L154 543 L155.5 548.5 L157 546.7 L158.5 538 L160 548.2 L161.5 545.9 L163 542.8 L164.5 542.8 L166 545.6 L167.5 538.8 L169 542.3 L170.5 537.1 L172 536.4 L173.5 520.5 L175 526.9 L176.5 541.6 L178 534.9 L179.5 542.3 L181 545.1 L182.5 536.4 L184 552.8 L185.5 549.1 L187 547.4 L188.5 551.1 L190 553 L191.5 554.7 L193 559.7 L194.5 550.3 L196 548.3 L197.5 551 L199 548.5 L200.5 545.3 L202 541.9 L203.5 551.2 L205 550.3 L206.5 544.6 L208 529.7 L209.5 536 L211 533.2 L212.5 534.7 L214 536.1 L215.5 533.2 L217 539.2 L218.5 539.2 L220 532.8 L221.5 531.2 L223 539.6 L224.5 531.6 L226 532.2 L227.5 536.4 L229 531.9 L230.5 541.8 L232 541.9 L233.5 540.2 L235 545.8 L236.5 547.3 L238 546.4 L239.5 555.3 L241 557.5 L242.5 543.1 L244 550.6 L245.5 532.6 L247 533.7 L248.5 537.3 L250 540.5 L251.5 535.6 L253 535.5 L254.5 543.3 L256 541.8 L257.5 543.1 L259 539.1 L260.5 534.4 L262 533.4 L263.5 545.1 L265 545 L266.5 539.5 L268 529.1 L269.5 538.5 L271 531.2 L272.5 522.9 L274 529.8 L275.5 525.5 L277 532.3 L278.5 534.4 L280 523.7 L281.5 534.4 L283 534.5 L284.5 535.8 L286 525.1 L287.5 525 L289 528 L290.5 541.8 L292 529.4 L293.5 525.8 L295 545 L296.5 528.7 L298 523.7 L299.5 532.8 L301 531.6 L302.5 529.6 L304 535.7 L305.5 527.4 L307 532.1 L308.5 526.9 L310 534.8 L311.5 527 L313 526.6 L314.5 536.3 L316 536 L317.5 530.8 L319 533.9 L320.5 525.6 L322 516.5 L323.5 519.1 L325 512.9 L326.5 516 L328 509 L329.5 513.6 L331 508.5 L332.5 534.2 L334 538.1 L335.5 553.6 L337 565.3 L338.5 560.1 L340 537.5 L341.5 528.4 L343 535.3 L344.5 523.7 L346 527.8 L347.5 520.7 L349 528.2 L350.5 520.4 L352 534.8 L353.5 526.6 L355 520.2 L356.5 532.2 L358 530.4 L359.5 527.1 L361 532.6 L362.5 509.3 L364 514.7 L365.5 524 L367 516.5 L368.5 526.5 L370 521.8 L371.5 516.7 L373 522.2 L374.5 529.6 L376 529 L377.5 529 L379 518.7 L380.5 516.1 L382 521.5 L383.5 515.5 L385 515.7 L386.5 515.2 L388 509.7 L389.5 519.3 L391 521.3 L392.5 519.5 L394 523.5 L395.5 520.1 L397 515.1 L398.5 534.4 L400 525.5 L401.5 522.5 L403 519.4 L404.5 523.8 L406 524 L407.5 522.6 L409 526.5 L410.5 536.8 L412 523.6 L413.5 517.5 L415 529.7 L416.5 521.9 L418 516.6 L419.5 527.5 L421 524.2 L422.5 526.7 L424 529.4 L425.5 517.5 L427 521.6 L428.5 529.5 L430 533.1 L431.5 546.9 L433 539.5 L434.5 535.2 L436 533.1 L437.5 518.3 L439 532.6 L440.5 530 L442 529.5 L443.5 524.6 L445 521.5 L446.5 539 L448 524 L449.5 531 L451 530.5 L452.5 524.9 L454 520.5 L455.5 526.4 L457 527.6 L458.5 529.2 L460 528.7 L461.5 525.9 L463 524.6 L464.5 534.3 L466 528.1 L467.5 528.3 L469 529.9 L470.5 522.3 L472 526.9 L473.5 532.9 L475 536.5 L476.5 523.6 L478 519.8 L479.5 523.9 L481 529.6 L482.5 525.6 L484 519.2 L485.5 503.7 L487 524.8 L488.5 519.3 L490 528.4 L491.5 529.8 L493 530.1 L494.5 525.9 L496 518 L497.5 513.8 L499 526.3 L500.5 530.2 L502 526.5 L503.5 516.3 L505 519.1 L506.5 525.8 L508 532.7 L509.5 527.5 L511 536.3 L512.5 538.8 L514 529.3 L515.5 539.6 L517 535.7 L518.5 543.6 L520 537.9 L521.5 538.6 L523 530.8 L524.5 534.5 L526 526.6 L527.5 535.7 L529 540.4 L530.5 538.4 L532 541.2 L533.5 529.6 L535 533.1 L536.5 537.2 L538 528.1 L539.5 531.5 L541 538.4 L542.5 534.6 L544 540.1 L545.5 535.7 L547 536.8 L548.5 531.8 L550 524.4 L551.5 530 L553 546.4 L554.5 553.1 L556 534.6 L557.5 538.6 L559 538 L560.5 532 L562 542 L563.5 537.1 L565 537.7 L566.5 525.4 L568 526.5 L569.5 535.3 L571 536.8 L572.5 542.5 L574 530.3 L575.5 540.5 L577 537.1 L578.5 541.3 L580 542.9 L581.5 545.7 L583 539.9 L584.5 528.3 L586 534.6 L587.5 539.4 L589 531.8 L590.5 529.8 L592 542.6 L593.5 538.6 L595 546.2 L596.5 531.8 L598 538.6 L599.5 547 L601 540.6 L602.5 542.7 L604 544.6 L605.5 548.2 L607 550.1 L608.5 544.9 L610 530.5 L611.5 530.6 L613 523.8 L614.5 516.9 L616 523.4 L617.5 508.4 L619 514.1 L620.5 519.1 L622 519.2 L623.5 537.5 L625 531.3 L626.5 536.1 L628 540 L629.5 538.8 L631 536.7 L632.5 528.4 L634 532.2 L635.5 537.4 L637 537.9 L638.5 537.9 L640 534.2 L641.5 536.9 L643 543.6 L644.5 540 L646 550.7 L647.5 558.7 L649 546.2 L650.5 540.2 L652 537.8 L653.5 538 L655 546.8 L656.5 554.6 L658 552.7 L659.5 553.3 L661 551.7 L662.5 546.1 L664 546.1 L665.5 550.5 L667 544.3 L668.5 541.2 L670 556.5 L671.5 545.8 L673 542.7 L674.5 533.4 L676 536.1 L677.5 535.4 L679 532.7 L680.5 534.7 L682 534.7 L683.5 536 L685 530.7 L686.5 531.9 L688 534.2 L689.5 527.1 L691 538.3 L692.5 543 L694 524.6 L695.5 535.4 L697 538.4 L698.5 536.2 L700 529.9 L701.5 529 L703 533.9 L704.5 522.1 L706 530.1 L707.5 532.2 L709 529.5 L710.5 537.4 L711 537.2 L711 574.7 L710.5 574.8 L709 569.5 L707.5 571.6 L706 570.2 L704.5 563.7 L703 572.4 L701.5 569.1 L700 570.3 L698.5 575 L697 576.8 L695.5 574.1 L694 565.8 L692.5 579.1 L691 575.1 L689.5 567.4 L688 572.9 L686.5 571.2 L685 569.7 L683.5 574.3 L682 573.6 L680.5 573.4 L679 571.7 L677.5 573.8 L676 574.5 L674.5 572.7 L673 580.2 L671.5 585.9 L670 596.9 L668.5 585.4 L667 588.8 L665.5 591.7 L664 587.1 L662.5 586.9 L661 592.1 L659.5 594 L658 593.4 L656.5 594.7 L655 589.2 L653.5 582.4 L652 575.4 L650.5 576.6 L649 582.1 L647.5 590.8 L646 585 L644.5 577.4 L643 580 L641.5 575.3 L640 573.6 L638.5 576 L637 575.3 L635.5 575.4 L634 571.4 L632.5 568.4 L631 574.9 L629.5 576.5 L628 577.7 L626.5 574.4 L625 571 L623.5 574.9 L622 561.4 L620.5 560.8 L619 558.3 L617.5 553.6 L616 564.3 L614.5 559.4 L613 565.7 L611.5 569.3 L610 570.2 L608.5 580.7 L607 584.6 L605.5 583.7 L604 580.5 L602.5 578.7 L601 578 L599.5 581.6 L598 576 L596.5 571.1 L595 581.5 L593.5 576.2 L592 579.7 L590.5 569.3 L589 571.5 L587.5 576.9 L586 572.8 L584.5 569 L583 577.2 L581.5 580.5 L580 579.7 L578.5 577.6 L577 575.1 L575.5 577 L574 569.6 L572.5 578.2 L571 574.2 L569.5 573.1 L568 566.8 L566.5 565.8 L565 575.2 L563.5 575.1 L562 578.7 L560.5 570.3 L559 575.4 L557.5 576.2 L556 572.7 L554.5 586.5 L553 581.5 L551.5 569.7 L550 565.1 L548.5 570.8 L547 574.6 L545.5 573.5 L544 577.1 L542.5 572.9 L541 576 L539.5 570.6 L538 568.2 L536.5 575.6 L535 571.3 L533.5 569.7 L532 578.2 L530.5 576.5 L529 577 L527.5 574.4 L526 567.4 L524.5 573.1 L523 569.5 L521.5 575.4 L520 575.4 L518.5 580.2 L517 574 L515.5 575.5 L514 569.6 L512.5 576.1 L511 574.6 L509.5 567.9 L508 571.7 L506.5 566.4 L505 561.7 L503.5 559.2 L502 566.6 L500.5 569.7 L499 567 L497.5 557 L496 560.9 L494.5 566.5 L493 569.4 L491.5 569.3 L490 569.2 L488.5 561.6 L487 565.4 L485.5 550.3 L484 561.1 L482.5 565.8 L481 569.3 L479.5 564.7 L478 561.4 L476.5 564.6 L475 575.1 L473.5 571.9 L472 567.5 L470.5 563.9 L469 570.3 L467.5 567.7 L466 569 L464.5 572.3 L463 565.3 L461.5 567.1 L460 568.7 L458.5 568.9 L457 568.3 L455.5 566.7 L454 561.9 L452.5 565.7 L451 569.5 L449.5 570.6 L448 564.3 L446.5 576.5 L445 562.8 L443.5 565.8 L442 569.3 L440.5 569.1 L439 571.7 L437.5 560.8 L436 572.4 L434.5 573.8 L433 576.2 L431.5 582.5 L430 572.3 L428.5 568.7 L427 563.7 L425.5 559.6 L424 569 L422.5 567 L421 564.6 L419.5 568.3 L418 558.9 L416.5 563.6 L415 570.4 L413.5 559.6 L412 564.8 L410.5 575 L409 567.2 L407.5 563.7 L406 565.5 L404.5 564.7 L403 561.9 L401.5 564.4 L400 566.9 L398.5 573.1 L397 559.2 L395.5 562.4 L394 565.6 L392.5 561.4 L391 563.1 L389.5 561.8 L388 554.9 L386.5 558.4 L385 559.3 L383.5 558.6 L382 563.9 L380.5 559.1 L379 561.4 L377.5 569 L376 568.5 L374.5 569.5 L373 564.3 L371.5 559.3 L370 564.1 L368.5 566.7 L367 559.6 L365.5 565.2 L364 558.1 L362.5 554 L361 571.9 L359.5 566.7 L358 570.4 L356.5 571.5 L355 561.9 L353.5 566.9 L352 573.8 L350.5 562.8 L349 568.7 L347.5 563.2 L346 567.7 L344.5 565.3 L343 573.2 L341.5 568.7 L340 575.6 L338.5 591.9 L337 596.2 L335.5 587.4 L334 575.3 L332.5 572.6 L331 553.8 L329.5 557.4 L328 554 L326.5 559.7 L325 556.7 L323.5 562.6 L322 559.7 L320.5 567.3 L319 572.4 L317.5 570.3 L316 573.9 L314.5 574 L313 567.3 L311.5 567 L310 573.9 L308.5 566.7 L307 571.2 L305.5 568 L304 574.1 L302.5 570 L301 570 L299.5 571.5 L298 564.4 L296.5 568.2 L295 581.2 L293.5 566.4 L292 568.9 L290.5 578.2 L289 568.2 L287.5 566.1 L286 566.2 L284.5 574.4 L283 572.7 L281.5 573 L280 564.5 L278.5 573.5 L277 571.4 L275.5 566.4 L274 569.9 L272.5 563.8 L271 569.5 L269.5 575.7 L268 569.1 L266.5 576.1 L265 580.7 L263.5 581.9 L262 571.1 L260.5 573 L259 576.3 L257.5 579.2 L256 578.3 L254.5 579.4 L253 574.2 L251.5 574 L250 577.8 L248.5 574.7 L247 572.6 L245.5 571.4 L244 585.4 L242.5 579.1 L241 590.6 L239.5 588.6 L238 581.6 L236.5 582.9 L235 581.7 L233.5 577.4 L232 578.1 L230.5 578.9 L229 571.3 L227.5 574.6 L226 571.5 L224.5 571.1 L223 577 L221.5 570.3 L220 572.4 L218.5 576.3 L217 576.1 L215.5 572.4 L214 573.7 L212.5 573.2 L211 571.5 L209.5 573.9 L208 569.5 L206.5 581 L205 584.9 L203.5 585.8 L202 577.6 L200.5 581.2 L199 583.3 L197.5 585.5 L196 583.3 L194.5 584.8 L193 592.5 L191.5 587.9 L190 587 L188.5 585.7 L187 583.2 L185.5 584 L184 586.6 L182.5 574.6 L181 580.7 L179.5 578.9 L178 573.3 L176.5 578.9 L175 567 L173.5 562.4 L172 574.6 L170.5 575 L169 578.5 L167.5 576.1 L166 581.2 L164.5 578.6 L163 578.9 L161.5 581.2 L160 583.2 L158.5 576.2 L157 582.9 L155.5 583.9 L154 579.4 L152.5 590.1 L151 601.6 L149.5 582.3 L148 575.9 L146.5 559.7 L145 566.5 L143.5 569.1 L142 562.5 L140.5 567.7 L139 569.1 L137.5 575.5 L136 574.1 L134.5 580.7 L133 576.3 L131.5 575.5 L130 584 L128.5 585.2 L127 576.9 L125.5 573.1 L124 577 L122.5 581.2 L121 583 L119.5 582.5 L118 584 L116.5 582.4 L115 580.5 L113.5 575.6 L112 578.3 L110.5 582.1 L109 574.7 L107.5 579.1 L106 586 L104.5 624.5 L103 587.3 L101.5 580.5 L100 580.7 L98.5 576.4 L97 580.6 L95.5 581.8 L94 581.7 L92.5 577.1 L91 608.3 L89.5 634.6 L88 629.3 L86.5 616.6 L85 606.1 L83.5 597.8 L82 602.7 L80.5 588.6 L79 584.2 L77.5 583.3 L76 573.2 L74.5 580.7 L73 624.8 L71.5 588.6 L70 585.2 L68.5 586.7 L67 588.2 L65.5 582.7 L64 589.3 L62.5 586.5 L61 585.4 L59.5 585.4 L58 588.7 L56.5 586.1 L55 582.8 L53.5 578.1 L52 585.1Z" fill="#3f6833" fill-opacity="0.8"/>
<path d="M52 585.1 L53.5 578.1 L55 582.8 L56.5 586.1 L58 588.7 L59.5 585.4 L61 585.4 L62.5 586.5 L64 589.3 L65.5 582.7 L67 588.2 L68.5 586.7 L70 585.2 L71.5 588.6 L73 624.8 L74.5 580.7 L76 573.2 L77.5 583.3 L79 584.2 L80.5 588.6 L82 602.7 L83.5 597.8 L85 606.1 L86.5 616.6 L88 629.3 L89.5 634.6 L91 608.3 L92.5 577.1 L94 581.7 L95.5 581.8 L97 580.6 L98.5 576.4 L100 580.7 L101.5 580.5 L103 587.3 L104.5 624.5 L106 586 L107.5 579.1 L109 574.7 L110.5 582.1 L112 578.3 L113.5 575.6 L115 580.5 L116.5 582.4 L118 584 L119.5 582.5 L121 583 L122.5 581.2 L124 577 L125.5 573.1 L127 576.9 L128.5 585.2 L130 584 L131.5 575.5 L133 576.3 L134.5 580.7 L136 574.1 L137.5 575.5 L139 569.1 L140.5 567.7 L142 562.5 L143.5 569.1 L145 566.5 L146.5 559.7 L148 575.9 L149.5 582.3 L151 601.6 L152.5 590.1 L154 579.4 L155.5 583.9 L157 582.9 L158.5 576.2 L160 583.2 L161.5 581.2 L163 578.9 L164.5 578.6 L166 581.2 L167.5 576.1 L169 578.5 L170.5 575 L172 574.6 L173.5 562.4 L175 567 L176.5 578.9 L178 573.3 L179.5 578.9 L181 580.7 L182.5 574.6 L184 586.6 L185.5 584 L187 583.2 L188.5 585.7 L190 587 L191.5 587.9 L193 592.5 L194.5 584.8 L196 583.3 L197.5 585.5 L199 583.3 L200.5 581.2 L202 577.6 L203.5 585.8 L205 584.9 L206.5 581 L208 569.5 L209.5 573.9 L211 571.5 L212.5 573.2 L214 573.7 L215.5 572.4 L217 576.1 L218.5 576.3 L220 572.4 L221.5 570.3 L223 577 L224.5 571.1 L226 571.5 L227.5 574.6 L229 571.3 L230.5 578.9 L232 578.1 L233.5 577.4 L235 581.7 L236.5 582.9 L238 581.6 L239.5 588.6 L241 590.6 L242.5 579.1 L244 585.4 L245.5 571.4 L247 572.6 L248.5 574.7 L250 577.8 L251.5 574 L253 574.2 L254.5 579.4 L256 578.3 L257.5 579.2 L259 576.3 L260.5 573 L262 571.1 L263.5 581.9 L265 580.7 L266.5 576.1 L268 569.1 L269.5 575.7 L271 569.5 L272.5 563.8 L274 569.9 L275.5 566.4 L277 571.4 L278.5 573.5 L280 564.5 L281.5 573 L283 572.7 L284.5 574.4 L286 566.2 L287.5 566.1 L289 568.2 L290.5 578.2 L292 568.9 L293.5 566.4 L295 581.2 L296.5 568.2 L298 564.4 L299.5 571.5 L301 570 L302.5 570 L304 574.1 L305.5 568 L307 571.2 L308.5 566.7 L310 573.9 L311.5 567 L313 567.3 L314.5 574 L316 573.9 L317.5 570.3 L319 572.4 L320.5 567.3 L322 559.7 L323.5 562.6 L325 556.7 L326.5 559.7 L328 554 L329.5 557.4 L331 553.8 L332.5 572.6 L334 575.3 L335.5 587.4 L337 596.2 L338.5 591.9 L340 575.6 L341.5 568.7 L343 573.2 L344.5 565.3 L346 567.7 L347.5 563.2 L349 568.7 L350.5 562.8 L352 573.8 L353.5 566.9 L355 561.9 L356.5 571.5 L358 570.4 L359.5 566.7 L361 571.9 L362.5 554 L364 558.1 L365.5 565.2 L367 559.6 L368.5 566.7 L370 564.1 L371.5 559.3 L373 564.3 L374.5 569.5 L376 568.5 L377.5 569 L379 561.4 L380.5 559.1 L382 563.9 L383.5 558.6 L385 559.3 L386.5 558.4 L388 554.9 L389.5 561.8 L391 563.1 L392.5 561.4 L394 565.6 L395.5 562.4 L397 559.2 L398.5 573.1 L400 566.9 L401.5 564.4 L403 561.9 L404.5 564.7 L406 565.5 L407.5 563.7 L409 567.2 L410.5 575 L412 564.8 L413.5 559.6 L415 570.4 L416.5 563.6 L418 558.9 L419.5 568.3 L421 564.6 L422.5 567 L424 569 L425.5 559.6 L427 563.7 L428.5 568.7 L430 572.3 L431.5 582.5 L433 576.2 L434.5 573.8 L436 572.4 L437.5 560.8 L439 571.7 L440.5 569.1 L442 569.3 L443.5 565.8 L445 562.8 L446.5 576.5 L448 564.3 L449.5 570.6 L451 569.5 L452.5 565.7 L454 561.9 L455.5 566.7 L457 568.3 L458.5 568.9 L460 568.7 L461.5 567.1 L463 565.3 L464.5 572.3 L466 569 L467.5 567.7 L469 570.3 L470.5 563.9 L472 567.5 L473.5 571.9 L475 575.1 L476.5 564.6 L478 561.4 L479.5 564.7 L481 569.3 L482.5 565.8 L484 561.1 L485.5 550.3 L487 565.4 L488.5 561.6 L490 569.2 L491.5 569.3 L493 569.4 L494.5 566.5 L496 560.9 L497.5 557 L499 567 L500.5 569.7 L502 566.6 L503.5 559.2 L505 561.7 L506.5 566.4 L508 571.7 L509.5 567.9 L511 574.6 L512.5 576.1 L514 569.6 L515.5 575.5 L517 574 L518.5 580.2 L520 575.4 L521.5 575.4 L523 569.5 L524.5 573.1 L526 567.4 L527.5 574.4 L529 577 L530.5 576.5 L532 578.2 L533.5 569.7 L535 571.3 L536.5 575.6 L538 568.2 L539.5 570.6 L541 576 L542.5 572.9 L544 577.1 L545.5 573.5 L547 574.6 L548.5 570.8 L550 565.1 L551.5 569.7 L553 581.5 L554.5 586.5 L556 572.7 L557.5 576.2 L559 575.4 L560.5 570.3 L562 578.7 L563.5 575.1 L565 575.2 L566.5 565.8 L568 566.8 L569.5 573.1 L571 574.2 L572.5 578.2 L574 569.6 L575.5 577 L577 575.1 L578.5 577.6 L580 579.7 L581.5 580.5 L583 577.2 L584.5 569 L586 572.8 L587.5 576.9 L589 571.5 L590.5 569.3 L592 579.7 L593.5 576.2 L595 581.5 L596.5 571.1 L598 576 L599.5 581.6 L601 578 L602.5 578.7 L604 580.5 L605.5 583.7 L607 584.6 L608.5 580.7 L610 570.2 L611.5 569.3 L613 565.7 L614.5 559.4 L616 564.3 L617.5 553.6 L619 558.3 L620.5 560.8 L622 561.4 L623.5 574.9 L625 571 L626.5 574.4 L628 577.7 L629.5 576.5 L631 574.9 L632.5 568.4 L634 571.4 L635.5 575.4 L637 575.3 L638.5 576 L640 573.6 L641.5 575.3 L643 580 L644.5 577.4 L646 585 L647.5 590.8 L649 582.1 L650.5 576.6 L652 575.4 L653.5 582.4 L655 589.2 L656.5 594.7 L658 593.4 L659.5 594 L661 592.1 L662.5 586.9 L664 587.1 L665.5 591.7 L667 588.8 L668.5 585.4 L670 596.9 L671.5 585.9 L673 580.2 L674.5 572.7 L676 574.5 L677.5 573.8 L679 571.7 L680.5 573.4 L682 573.6 L683.5 574.3 L685 569.7 L686.5 571.2 L688 572.9 L689.5 567.4 L691 575.1 L692.5 579.1 L694 565.8 L695.5 574.1 L697 576.8 L698.5 575 L700 570.3 L701.5 569.1 L703 572.4 L704.5 563.7 L706 570.2 L707.5 571.6 L709 569.5 L710.5 574.8 L711 574.7 L711 612.7 L710.5 612.3 L709 608.6 L707.5 611.3 L706 610.2 L704.5 605.5 L703 611.5 L701.5 608.1 L700 608.3 L698.5 612.9 L697 614.5 L695.5 612.4 L694 606.5 L692.5 615.9 L691 613.2 L689.5 608 L688 611.1 L686.5 610.1 L685 609.5 L683.5 612 L682 611.4 L680.5 611.5 L679 611 L677.5 612 L676 612.7 L674.5 610.9 L673 618.6 L671.5 624.1 L670 636.4 L668.5 627.4 L667 630.7 L665.5 631.9 L664 626.1 L662.5 626.3 L661 631.8 L659.5 633 L658 632.7 L656.5 632.8 L655 629.7 L653.5 625.1 L652 612.7 L650.5 613.8 L649 617.6 L647.5 623.9 L646 619.3 L644.5 614.9 L643 616.1 L641.5 613 L640 611.9 L638.5 613.7 L637 613.6 L635.5 613.6 L634 610.3 L632.5 608.1 L631 612.7 L629.5 613.8 L628 613.8 L626.5 611.7 L625 609.7 L623.5 613.7 L622 603.8 L620.5 603.4 L619 601.1 L617.5 598.1 L616 605.9 L614.5 603.1 L613 605.4 L611.5 608.9 L610 610.4 L608.5 617.1 L607 619 L605.5 618.9 L604 616.4 L602.5 615.5 L601 614.2 L599.5 616.9 L598 613.1 L596.5 610.5 L595 617.3 L593.5 613.6 L592 616.4 L590.5 609.1 L589 610.2 L587.5 614.2 L586 612 L584.5 609.3 L583 614.4 L581.5 616 L580 615.5 L578.5 614.5 L577 612.8 L575.5 614.7 L574 609.3 L572.5 615.4 L571 612.6 L569.5 611.7 L568 607.5 L566.5 606.6 L565 612.8 L563.5 613 L562 615.8 L560.5 609.8 L559 613.3 L557.5 612.9 L556 611.1 L554.5 620.7 L553 617.6 L551.5 609.2 L550 606.4 L548.5 610.6 L547 612.6 L545.5 611.9 L544 614.5 L542.5 611.5 L541 613.7 L539.5 609.5 L538 608.3 L536.5 612.7 L535 610.5 L533.5 609.5 L532 614.9 L530.5 613.7 L529 613.5 L527.5 612.9 L526 607.3 L524.5 611 L523 609.2 L521.5 613.2 L520 613.4 L518.5 616.3 L517 612.7 L515.5 613.2 L514 609.1 L512.5 613.4 L511 612.2 L509.5 608.8 L508 610.6 L506.5 606.3 L505 604.3 L503.5 602.1 L502 607.3 L500.5 609.1 L499 608 L497.5 601.2 L496 603.1 L494.5 607.4 L493 608.8 L491.5 608.9 L490 609.4 L488.5 603.7 L487 606 L485.5 596.2 L484 603.5 L482.5 606.9 L481 609.5 L479.5 605.8 L478 604.3 L476.5 605.3 L475 612.5 L473.5 610.6 L472 607.9 L470.5 605.2 L469 610 L467.5 608.3 L466 609.1 L464.5 610.5 L463 606.8 L461.5 607.4 L460 608.5 L458.5 609.6 L457 607.9 L455.5 607.1 L454 603.9 L452.5 606.2 L451 609 L449.5 609.7 L448 605.9 L446.5 614.4 L445 604.1 L443.5 606.2 L442 608.3 L440.5 608.9 L439 610.4 L437.5 603 L436 610.8 L434.5 612 L433 613.3 L431.5 617.7 L430 610.9 L428.5 609 L427 604.7 L425.5 601.8 L424 608.9 L422.5 607.2 L421 606.1 L419.5 608.6 L418 602.2 L416.5 605.7 L415 609.8 L413.5 603 L412 605.3 L410.5 612.4 L409 607.7 L407.5 604.8 L406 606.8 L404.5 605.9 L403 603.9 L401.5 605.9 L400 607 L398.5 611.8 L397 602.6 L395.5 604.1 L394 606.6 L392.5 604.1 L391 605.3 L389.5 604 L388 599.6 L386.5 602.2 L385 602.5 L383.5 602.2 L382 606 L380.5 602.9 L379 603.8 L377.5 609 L376 608.2 L374.5 609.3 L373 605.5 L371.5 602.4 L370 605.1 L368.5 607.7 L367 603 L365.5 606.7 L364 601.1 L362.5 598.9 L361 610.7 L359.5 607.7 L358 609.4 L356.5 610.3 L355 604.1 L353.5 607.2 L352 611.3 L350.5 604.6 L349 609.6 L347.5 604.8 L346 608.3 L344.5 606.2 L343 611.2 L341.5 608.5 L340 612.6 L338.5 623.5 L337 626.4 L335.5 621.5 L334 612.7 L332.5 610.8 L331 598.6 L329.5 601.7 L328 599.7 L326.5 602.5 L325 600.3 L323.5 604.2 L322 602.2 L320.5 608.3 L319 611.7 L317.5 609.5 L316 611.5 L314.5 612 L313 607.9 L311.5 607 L310 611.6 L308.5 607.6 L307 610.4 L305.5 608.2 L304 612.2 L302.5 609.5 L301 609.2 L299.5 611.3 L298 605.7 L296.5 608.2 L295 616.5 L293.5 607.2 L292 609.2 L290.5 614.8 L289 607.9 L287.5 607.4 L286 606.5 L284.5 612.4 L283 610.2 L281.5 611 L280 606.1 L278.5 611.1 L277 610.8 L275.5 607.8 L274 609.3 L272.5 605.5 L271 608.5 L269.5 613.2 L268 608.6 L266.5 613.3 L265 617.5 L263.5 618.4 L262 610.8 L260.5 611.7 L259 613.6 L257.5 615.7 L256 615.2 L254.5 615.6 L253 612.2 L251.5 612.1 L250 614.9 L248.5 612.5 L247 611.5 L245.5 610.5 L244 619.6 L242.5 615.5 L241 623.4 L239.5 621.5 L238 617.3 L236.5 618.7 L235 617 L233.5 614.1 L232 615.5 L230.5 615.7 L229 610.4 L227.5 613.2 L226 610.7 L224.5 610.2 L223 614.2 L221.5 609.7 L220 610.8 L218.5 613.3 L217 613.2 L215.5 611.3 L214 611.9 L212.5 611.5 L211 610.8 L209.5 611.9 L208 609.2 L206.5 617.2 L205 619.6 L203.5 619.6 L202 614.8 L200.5 617 L199 618.6 L197.5 619.3 L196 618.5 L194.5 619 L193 624 L191.5 621.4 L190 620.7 L188.5 620 L187 618.7 L185.5 619.2 L184 621 L182.5 612.6 L181 616.4 L179.5 615.6 L178 611.6 L176.5 615.4 L175 607.2 L173.5 604.6 L172 613.5 L170.5 612.6 L169 615 L167.5 613.4 L166 616.2 L164.5 614.8 L163 615.4 L161.5 616.9 L160 617.8 L158.5 613.9 L157 618.5 L155.5 618.9 L154 615.8 L152.5 623 L151 630.7 L149.5 617.9 L148 613.5 L146.5 602.9 L145 607.6 L143.5 609.2 L142 604 L140.5 607.8 L139 608.5 L137.5 612.8 L136 612.3 L134.5 616.5 L133 613.5 L131.5 612.3 L130 618.3 L128.5 619.7 L127 613.8 L125.5 611.1 L124 614.4 L122.5 617.3 L121 618.6 L119.5 617.8 L118 620.2 L116.5 624.5 L115 625.4 L113.5 630.3 L112 633.2 L110.5 633.7 L109 632.4 L107.5 631.4 L106 631.3 L104.5 637.1 L103 635 L101.5 635.5 L100 636.7 L98.5 634.4 L97 632.3 L95.5 629.9 L94 629.8 L92.5 630.2 L91 635.4 L89.5 636.8 L88 630.8 L86.5 615.9 L85 605.3 L83.5 599 L82 599.6 L80.5 590.4 L79 582.6 L77.5 582.6 L76 581.7 L74.5 587.7 L73 634.8 L71.5 626.5 L70 620.9 L68.5 619.3 L67 620.4 L65.5 619.9 L64 616 L62.5 624 L61 620.1 L59.5 620.3 L58 621.9 L56.5 621.4 L55 618.3 L53.5 618.7 L52 613.5Z" fill="#508642" fill-opacity="0.8"/>
<path d="M52 613.5 L53.5 618.7 L55 618.3 L56.5 621.4 L58 621.9 L59.5 620.3 L61 620.1 L62.5 624 L64 616 L65.5 619.9 L67 620.4 L68.5 619.3 L70 620.9 L71.5 626.5 L73 634.8 L74.5 587.7 L76 581.7 L77.5 582.6 L79 582.6 L80.5 590.4 L82 599.6 L83.5 599 L85 605.3 L86.5 615.9 L88 630.8 L89.5 636.8 L91 635.4 L92.5 630.2 L94 629.8 L95.5 629.9 L97 632.3 L98.5 634.4 L100 636.7 L101.5 635.5 L103 635 L104.5 637.1 L106 631.3 L107.5 631.4 L109 632.4 L110.5 633.7 L112 633.2 L113.5 630.3 L115 625.4 L116.5 624.5 L118 620.2 L119.5 617.8 L121 618.6 L122.5 617.3 L124 614.4 L125.5 611.1 L127 613.8 L128.5 619.7 L130 618.3 L131.5 612.3 L133 613.5 L134.5 616.5 L136 612.3 L137.5 612.8 L139 608.5 L140.5 607.8 L142 604 L143.5 609.2 L145 607.6 L146.5 602.9 L148 613.5 L149.5 617.9 L151 630.7 L152.5 623 L154 615.8 L155.5 618.9 L157 618.5 L158.5 613.9 L160 617.8 L161.5 616.9 L163 615.4 L164.5 614.8 L166 616.2 L167.5 613.4 L169 615 L170.5 612.6 L172 613.5 L173.5 604.6 L175 607.2 L176.5 615.4 L178 611.6 L179.5 615.6 L181 616.4 L182.5 612.6 L184 621 L185.5 619.2 L187 618.7 L188.5 620 L190 620.7 L191.5 621.4 L193 624 L194.5 619 L196 618.5 L197.5 619.3 L199 618.6 L200.5 617 L202 614.8 L203.5 619.6 L205 619.6 L206.5 617.2 L208 609.2 L209.5 611.9 L211 610.8 L212.5 611.5 L214 611.9 L215.5 611.3 L217 613.2 L218.5 613.3 L220 610.8 L221.5 609.7 L223 614.2 L224.5 610.2 L226 610.7 L227.5 613.2 L229 610.4 L230.5 615.7 L232 615.5 L233.5 614.1 L235 617 L236.5 618.7 L238 617.3 L239.5 621.5 L241 623.4 L242.5 615.5 L244 619.6 L245.5 610.5 L247 611.5 L248.5 612.5 L250 614.9 L251.5 612.1 L253 612.2 L254.5 615.6 L256 615.2 L257.5 615.7 L259 613.6 L260.5 611.7 L262 610.8 L263.5 618.4 L265 617.5 L266.5 613.3 L268 608.6 L269.5 613.2 L271 608.5 L272.5 605.5 L274 609.3 L275.5 607.8 L277 610.8 L278.5 611.1 L280 606.1 L281.5 611 L283 610.2 L284.5 612.4 L286 606.5 L287.5 607.4 L289 607.9 L290.5 614.8 L292 609.2 L293.5 607.2 L295 616.5 L296.5 608.2 L298 605.7 L299.5 611.3 L301 609.2 L302.5 609.5 L304 612.2 L305.5 608.2 L307 610.4 L308.5 607.6 L310 611.6 L311.5 607 L313 607.9 L314.5 612 L316 611.5 L317.5 609.5 L319 611.7 L320.5 608.3 L322 602.2 L323.5 604.2 L325 600.3 L326.5 602.5 L328 599.7 L329.5 601.7 L331 598.6 L332.5 610.8 L334 612.7 L335.5 621.5 L337 626.4 L338.5 623.5 L340 612.6 L341.5 608.5 L343 611.2 L344.5 606.2 L346 608.3 L347.5 604.8 L349 609.6 L350.5 604.6 L352 611.3 L353.5 607.2 L355 604.1 L356.5 610.3 L358 609.4 L359.5 607.7 L361 610.7 L362.5 598.9 L364 601.1 L365.5 606.7 L367 603 L368.5 607.7 L370 605.1 L371.5 602.4 L373 605.5 L374.5 609.3 L376 608.2 L377.5 609 L379 603.8 L380.5 602.9 L382 606 L383.5 602.2 L385 602.5 L386.5 602.2 L388 599.6 L389.5 604 L391 605.3 L392.5 604.1 L394 606.6 L395.5 604.1 L397 602.6 L398.5 611.8 L400 607 L401.5 605.9 L403 603.9 L404.5 605.9 L406 606.8 L407.5 604.8 L409 607.7 L410.5 612.4 L412 605.3 L413.5 603 L415 609.8 L416.5 605.7 L418 602.2 L419.5 608.6 L421 606.1 L422.5 607.2 L424 608.9 L425.5 601.8 L427 604.7 L428.5 609 L430 610.9 L431.5 617.7 L433 613.3 L434.5 612 L436 610.8 L437.5 603 L439 610.4 L440.5 608.9 L442 608.3 L443.5 606.2 L445 604.1 L446.5 614.4 L448 605.9 L449.5 609.7 L451 609 L452.5 606.2 L454 603.9 L455.5 607.1 L457 607.9 L458.5 609.6 L460 608.5 L461.5 607.4 L463 606.8 L464.5 610.5 L466 609.1 L467.5 608.3 L469 610 L470.5 605.2 L472 607.9 L473.5 610.6 L475 612.5 L476.5 605.3 L478 604.3 L479.5 605.8 L481 609.5 L482.5 606.9 L484 603.5 L485.5 596.2 L487 606 L488.5 603.7 L490 609.4 L491.5 608.9 L493 608.8 L494.5 607.4 L496 603.1 L497.5 601.2 L499 608 L500.5 609.1 L502 607.3 L503.5 602.1 L505 604.3 L506.5 606.3 L508 610.6 L509.5 608.8 L511 612.2 L512.5 613.4 L514 609.1 L515.5 613.2 L517 612.7 L518.5 616.3 L520 613.4 L521.5 613.2 L523 609.2 L524.5 611 L526 607.3 L527.5 612.9 L529 613.5 L530.5 613.7 L532 614.9 L533.5 609.5 L535 610.5 L536.5 612.7 L538 608.3 L539.5 609.5 L541 613.7 L542.5 611.5 L544 614.5 L545.5 611.9 L547 612.6 L548.5 610.6 L550 606.4 L551.5 609.2 L553 617.6 L554.5 620.7 L556 611.1 L557.5 612.9 L559 613.3 L560.5 609.8 L562 615.8 L563.5 613 L565 612.8 L566.5 606.6 L568 607.5 L569.5 611.7 L571 612.6 L572.5 615.4 L574 609.3 L575.5 614.7 L577 612.8 L578.5 614.5 L580 615.5 L581.5 616 L583 614.4 L584.5 609.3 L586 612 L587.5 614.2 L589 610.2 L590.5 609.1 L592 616.4 L593.5 613.6 L595 617.3 L596.5 610.5 L598 613.1 L599.5 616.9 L601 614.2 L602.5 615.5 L604 616.4 L605.5 618.9 L607 619 L608.5 617.1 L610 610.4 L611.5 608.9 L613 605.4 L614.5 603.1 L616 605.9 L617.5 598.1 L619 601.1 L620.5 603.4 L622 603.8 L623.5 613.7 L625 609.7 L626.5 611.7 L628 613.8 L629.5 613.8 L631 612.7 L632.5 608.1 L634 610.3 L635.5 613.6 L637 613.6 L638.5 613.7 L640 611.9 L641.5 613 L643 616.1 L644.5 614.9 L646 619.3 L647.5 623.9 L649 617.6 L650.5 613.8 L652 612.7 L653.5 625.1 L655 629.7 L656.5 632.8 L658 632.7 L659.5 633 L661 631.8 L662.5 626.3 L664 626.1 L665.5 631.9 L667 630.7 L668.5 627.4 L670 636.4 L671.5 624.1 L673 618.6 L674.5 610.9 L676 612.7 L677.5 612 L679 611 L680.5 611.5 L682 611.4 L683.5 612 L685 609.5 L686.5 610.1 L688 611.1 L689.5 608 L691 613.2 L692.5 615.9 L694 606.5 L695.5 612.4 L697 614.5 L698.5 612.9 L700 608.3 L701.5 608.1 L703 611.5 L704.5 605.5 L706 610.2 L707.5 611.3 L709 608.6 L710.5 612.3 L711 612.7 L711 650.6 L710.5 651.1 L709 648.8 L707.5 650.4 L706 649.3 L704.5 647.7 L703 649.5 L701.5 649 L700 648.2 L698.5 650.9 L697 651.4 L695.5 650.4 L694 647.5 L692.5 651.7 L691 651.2 L689.5 648.1 L688 649.3 L686.5 649.8 L685 649.4 L683.5 650 L682 650.4 L680.5 649.7 L679 650 L677.5 650.1 L676 650.1 L674.5 650.3 L673 658.6 L671.5 660.3 L670 673.5 L668.5 667.1 L667 671.3 L665.5 670.8 L664 663.3 L662.5 663.8 L661 651.4 L659.5 651.6 L658 651.7 L656.5 651.9 L655 649.4 L653.5 647.6 L652 650.6 L650.5 651.1 L649 653.2 L647.5 656.2 L646 654.2 L644.5 651.4 L643 652.3 L641.5 650.9 L640 649.9 L638.5 650.8 L637 651.3 L635.5 651.1 L634 649.6 L632.5 648.7 L631 650.3 L629.5 651 L628 651.3 L626.5 650.3 L625 649.3 L623.5 650.8 L622 646.4 L620.5 645.9 L619 645.4 L617.5 642.8 L616 647.4 L614.5 646.3 L613 647.5 L611.5 648.8 L610 649 L608.5 653.6 L607 654.2 L605.5 653.8 L604 652.8 L602.5 652.5 L601 651.5 L599.5 652.8 L598 650.8 L596.5 649.6 L595 652.9 L593.5 651.1 L592 652.8 L590.5 648.8 L589 649.8 L587.5 651.2 L586 650.3 L584.5 649.3 L583 651.3 L581.5 651.2 L580 651.7 L578.5 651.7 L577 650.2 L575.5 651.9 L574 649.3 L572.5 652.1 L571 650.7 L569.5 650.6 L568 648 L566.5 647.6 L565 650.1 L563.5 651.1 L562 651.8 L560.5 649.1 L559 650.5 L557.5 651 L556 649.8 L554.5 654.5 L553 652.6 L551.5 648.9 L550 647 L548.5 649.7 L547 650.7 L545.5 650.8 L544 652.1 L542.5 649.9 L541 652.1 L539.5 649.3 L538 648.8 L536.5 650.4 L535 649.4 L533.5 649.7 L532 651.5 L530.5 650.6 L529 650.7 L527.5 650.8 L526 648.4 L524.5 649.7 L523 649.6 L521.5 650.2 L520 650.6 L518.5 652.7 L517 650.8 L515.5 650.5 L514 648.5 L512.5 651.7 L511 650.2 L509.5 648.4 L508 649.8 L506.5 647.8 L505 646 L503.5 645.3 L502 648 L500.5 648.7 L499 648.5 L497.5 644.7 L496 645.8 L494.5 647.5 L493 648.7 L491.5 648 L490 649.4 L488.5 646 L487 647.2 L485.5 641.9 L484 646.6 L482.5 647.3 L481 648.6 L479.5 647.6 L478 646.7 L476.5 647.1 L475 650.5 L473.5 649.5 L472 648.4 L470.5 647.2 L469 648.7 L467.5 648.3 L466 648.3 L464.5 649.3 L463 647.5 L461.5 648.5 L460 648.9 L458.5 649.5 L457 648.3 L455.5 647.1 L454 646.4 L452.5 647.3 L451 648.4 L449.5 648.4 L448 647.4 L446.5 651.5 L445 646.4 L443.5 647.6 L442 648.3 L440.5 648.7 L439 649.8 L437.5 645.6 L436 650.4 L434.5 650 L433 651.2 L431.5 652.6 L430 649.8 L428.5 648.5 L427 646.5 L425.5 644.8 L424 649.3 L422.5 647.5 L421 646.9 L419.5 648.3 L418 645.3 L416.5 647 L415 649.5 L413.5 645.8 L412 647.1 L410.5 649.9 L409 647.9 L407.5 647 L406 647.3 L404.5 647.5 L403 646.6 L401.5 647.7 L400 647.9 L398.5 650.5 L397 645.3 L395.5 646.7 L394 647.8 L392.5 646 L391 646.7 L389.5 646.2 L388 644 L386.5 644.9 L385 645.4 L383.5 644.9 L382 647.3 L380.5 645.3 L379 645.6 L377.5 648.4 L376 649.1 L374.5 648.9 L373 647.1 L371.5 645.4 L370 646.7 L368.5 647.9 L367 646 L365.5 647.7 L364 645.1 L362.5 643.5 L361 649.9 L359.5 647.8 L358 649.6 L356.5 649.1 L355 645.8 L353.5 647.2 L352 650.2 L350.5 646.8 L349 648.9 L347.5 646.6 L346 648.2 L344.5 647.1 L343 649.9 L341.5 648.3 L340 650.2 L338.5 656.3 L337 657.5 L335.5 654.9 L334 650.9 L332.5 650.1 L331 644.6 L329.5 644.5 L328 644.6 L326.5 645.4 L325 645.3 L323.5 645.6 L322 645.4 L320.5 648.7 L319 649.9 L317.5 649.2 L316 649.8 L314.5 649.7 L313 648.6 L311.5 648.3 L310 650.1 L308.5 647.9 L307 649.4 L305.5 647.8 L304 650.4 L302.5 649.2 L301 648.7 L299.5 649.8 L298 647.7 L296.5 648.5 L295 652.4 L293.5 647.6 L292 648.2 L290.5 651.7 L289 647.9 L287.5 647.9 L286 646.8 L284.5 650.9 L283 649.5 L281.5 649.4 L280 646.9 L278.5 650.2 L277 649.7 L275.5 648.4 L274 649.5 L272.5 647.2 L271 648.6 L269.5 650.5 L268 648.3 L266.5 650.7 L265 652.7 L263.5 653.3 L262 649.1 L260.5 649.8 L259 650.8 L257.5 652.4 L256 651.4 L254.5 652.4 L253 650.2 L251.5 650.3 L250 651.8 L248.5 650.7 L247 650 L245.5 649.6 L244 653.5 L242.5 652 L241 655.9 L239.5 655 L238 653.1 L236.5 653.3 L235 652.5 L233.5 651 L232 652.2 L230.5 652.7 L229 649 L227.5 650.5 L226 649.6 L224.5 649.7 L223 651 L221.5 649 L220 649.4 L218.5 651 L217 650.7 L215.5 650.1 L214 650.4 L212.5 650.2 L211 649.6 L209.5 649.9 L208 649.2 L206.5 652.9 L205 654.4 L203.5 653.5 L202 651.4 L200.5 652.3 L199 653.2 L197.5 653.9 L196 653.3 L194.5 653.7 L193 656.5 L191.5 655.2 L190 654.4 L188.5 654.3 L187 653.5 L185.5 654.3 L184 654.6 L182.5 651 L181 652.4 L179.5 651.9 L178 650.5 L176.5 652 L175 647.9 L173.5 646.9 L172 650.4 L170.5 650.2 L169 651.4 L167.5 651.1 L166 652 L164.5 652.2 L163 651.6 L161.5 652.9 L160 653.5 L158.5 651.2 L157 653.2 L155.5 653.8 L154 652.3 L152.5 655.6 L151 659.4 L149.5 652.8 L148 650.6 L146.5 645.8 L145 648.8 L143.5 648.7 L142 646.6 L140.5 647.8 L139 648.5 L137.5 650.3 L136 649.9 L134.5 652.5 L133 650.9 L131.5 650.2 L130 653.6 L128.5 653.7 L127 651.2 L125.5 650.4 L124 651.5 L122.5 653.2 L121 654.2 L119.5 653 L118 656.7 L116.5 665.5 L115 677.1 L113.5 684.9 L112 687 L110.5 687.4 L109 687.9 L107.5 686.6 L106 685.8 L104.5 678.3 L103 662.2 L101.5 645.2 L100 638.7 L98.5 636.4 L97 636.3 L95.5 632 L94 634.2 L92.5 636.9 L91 649.6 L89.5 663.9 L88 659.7 L86.5 654.7 L85 653.1 L83.5 647.4 L82 637.6 L80.5 639.9 L79 638.9 L77.5 633.3 L76 634 L74.5 640.5 L73 661.7 L71.5 652.6 L70 655.9 L68.5 655.4 L67 653.6 L65.5 653.8 L64 655.3 L62.5 654.7 L61 655 L59.5 654.1 L58 654.5 L56.5 653.1 L55 655 L53.5 654.5 L52 653.4Z" fill="#7eb26d" fill-opacity="0.8"/>
<path d="M52 653.4 L53.5 654.5 L55 655 L56.5 653.1 L58 654.5 L59.5 654.1 L61 655 L62.5 654.7 L64 655.3 L65.5 653.8 L67 653.6 L68.5 655.4 L70 655.9 L71.5 652.6 L73 661.7 L74.5 640.5 L76 634 L77.5 633.3 L79 638.9 L80.5 639.9 L82 637.6 L83.5 647.4 L85 653.1 L86.5 654.7 L88 659.7 L89.5 663.9 L91 649.6 L92.5 636.9 L94 634.2 L95.5 632 L97 636.3 L98.5 636.4 L100 638.7 L101.5 645.2 L103 662.2 L104.5 678.3 L106 685.8 L107.5 686.6 L109 687.9 L110.5 687.4 L112 687 L113.5 684.9 L115 677.1 L116.5 665.5 L118 656.7 L119.5 653 L121 654.2 L122.5 653.2 L124 651.5 L125.5 650.4 L127 651.2 L128.5 653.7 L130 653.6 L131.5 650.2 L133 650.9 L134.5 652.5 L136 649.9 L137.5 650.3 L139 648.5 L140.5 647.8 L142 646.6 L143.5 648.7 L145 648.8 L146.5 645.8 L148 650.6 L149.5 652.8 L151 659.4 L152.5 655.6 L154 652.3 L155.5 653.8 L157 653.2 L158.5 651.2 L160 653.5 L161.5 652.9 L163 651.6 L164.5 652.2 L166 652 L167.5 651.1 L169 651.4 L170.5 650.2 L172 650.4 L173.5 646.9 L175 647.9 L176.5 652 L178 650.5 L179.5 651.9 L181 652.4 L182.5 651 L184 654.6 L185.5 654.3 L187 653.5 L188.5 654.3 L190 654.4 L191.5 655.2 L193 656.5 L194.5 653.7 L196 653.3 L197.5 653.9 L199 653.2 L200.5 652.3 L202 651.4 L203.5 653.5 L205 654.4 L206.5 652.9 L208 649.2 L209.5 649.9 L211 649.6 L212.5 650.2 L214 650.4 L215.5 650.1 L217 650.7 L218.5 651 L220 649.4 L221.5 649 L223 651 L224.5 649.7 L226 649.6 L227.5 650.5 L229 649 L230.5 652.7 L232 652.2 L233.5 651 L235 652.5 L236.5 653.3 L238 653.1 L239.5 655 L241 655.9 L242.5 652 L244 653.5 L245.5 649.6 L247 650 L248.5 650.7 L250 651.8 L251.5 650.3 L253 650.2 L254.5 652.4 L256 651.4 L257.5 652.4 L259 650.8 L260.5 649.8 L262 649.1 L263.5 653.3 L265 652.7 L266.5 650.7 L268 648.3 L269.5 650.5 L271 648.6 L272.5 647.2 L274 649.5 L275.5 648.4 L277 649.7 L278.5 650.2 L280 646.9 L281.5 649.4 L283 649.5 L284.5 650.9 L286 646.8 L287.5 647.9 L289 647.9 L290.5 651.7 L292 648.2 L293.5 647.6 L295 652.4 L296.5 648.5 L298 647.7 L299.5 649.8 L301 648.7 L302.5 649.2 L304 650.4 L305.5 647.8 L307 649.4 L308.5 647.9 L310 650.1 L311.5 648.3 L313 648.6 L314.5 649.7 L316 649.8 L317.5 649.2 L319 649.9 L320.5 648.7 L322 645.4 L323.5 645.6 L325 645.3 L326.5 645.4 L328 644.6 L329.5 644.5 L331 644.6 L332.5 650.1 L334 650.9 L335.5 654.9 L337 657.5 L338.5 656.3 L340 650.2 L341.5 648.3 L343 649.9 L344.5 647.1 L346 648.2 L347.5 646.6 L349 648.9 L350.5 646.8 L352 650.2 L353.5 647.2 L355 645.8 L356.5 649.1 L358 649.6 L359.5 647.8 L361 649.9 L362.5 643.5 L364 645.1 L365.5 647.7 L367 646 L368.5 647.9 L370 646.7 L371.5 645.4 L373 647.1 L374.5 648.9 L376 649.1 L377.5 648.4 L379 645.6 L380.5 645.3 L382 647.3 L383.5 644.9 L385 645.4 L386.5 644.9 L388 644 L389.5 646.2 L391 646.7 L392.5 646 L394 647.8 L395.5 646.7 L397 645.3 L398.5 650.5 L400 647.9 L401.5 647.7 L403 646.6 L404.5 647.5 L406 647.3 L407.5 647 L409 647.9 L410.5 649.9 L412 647.1 L413.5 645.8 L415 649.5 L416.5 647 L418 645.3 L419.5 648.3 L421 646.9 L422.5 647.5 L424 649.3 L425.5 644.8 L427 646.5 L428.5 648.5 L430 649.8 L431.5 652.6 L433 651.2 L434.5 650 L436 650.4 L437.5 645.6 L439 649.8 L440.5 648.7 L442 648.3 L443.5 647.6 L445 646.4 L446.5 651.5 L448 647.4 L449.5 648.4 L451 648.4 L452.5 647.3 L454 646.4 L455.5 647.1 L457 648.3 L458.5 649.5 L460 648.9 L461.5 648.5 L463 647.5 L464.5 649.3 L466 648.3 L467.5 648.3 L469 648.7 L470.5 647.2 L472 648.4 L473.5 649.5 L475 650.5 L476.5 647.1 L478 646.7 L479.5 647.6 L481 648.6 L482.5 647.3 L484 646.6 L485.5 641.9 L487 647.2 L488.5 646 L490 649.4 L491.5 648 L493 648.7 L494.5 647.5 L496 645.8 L497.5 644.7 L499 648.5 L500.5 648.7 L502 648 L503.5 645.3 L505 646 L506.5 647.8 L508 649.8 L509.5 648.4 L511 650.2 L512.5 651.7 L514 648.5 L515.5 650.5 L517 650.8 L518.5 652.7 L520 650.6 L521.5 650.2 L523 649.6 L524.5 649.7 L526 648.4 L527.5 650.8 L529 650.7 L530.5 650.6 L532 651.5 L533.5 649.7 L535 649.4 L536.5 650.4 L538 648.8 L539.5 649.3 L541 652.1 L542.5 649.9 L544 652.1 L545.5 650.8 L547 650.7 L548.5 649.7 L550 647 L551.5 648.9 L553 652.6 L554.5 654.5 L556 649.8 L557.5 651 L559 650.5 L560.5 649.1 L562 651.8 L563.5 651.1 L565 650.1 L566.5 647.6 L568 648 L569.5 650.6 L571 650.7 L572.5 652.1 L574 649.3 L575.5 651.9 L577 650.2 L578.5 651.7 L580 651.7 L581.5 651.2 L583 651.3 L584.5 649.3 L586 650.3 L587.5 651.2 L589 649.8 L590.5 648.8 L592 652.8 L593.5 651.1 L595 652.9 L596.5 649.6 L598 650.8 L599.5 652.8 L601 651.5 L602.5 652.5 L604 652.8 L605.5 653.8 L607 654.2 L608.5 653.6 L610 649 L611.5 648.8 L613 647.5 L614.5 646.3 L616 647.4 L617.5 642.8 L619 645.4 L620.5 645.9 L622 646.4 L623.5 650.8 L625 649.3 L626.5 650.3 L628 651.3 L629.5 651 L631 650.3 L632.5 648.7 L634 649.6 L635.5 651.1 L637 651.3 L638.5 650.8 L640 649.9 L641.5 650.9 L643 652.3 L644.5 651.4 L646 654.2 L647.5 656.2 L649 653.2 L650.5 651.1 L652 650.6 L653.5 647.6 L655 649.4 L656.5 651.9 L658 651.7 L659.5 651.6 L661 651.4 L662.5 663.8 L664 663.3 L665.5 670.8 L667 671.3 L668.5 667.1 L670 673.5 L671.5 660.3 L673 658.6 L674.5 650.3 L676 650.1 L677.5 650.1 L679 650 L680.5 649.7 L682 650.4 L683.5 650 L685 649.4 L686.5 649.8 L688 649.3 L689.5 648.1 L691 651.2 L692.5 651.7 L694 647.5 L695.5 650.4 L697 651.4 L698.5 650.9 L700 648.2 L701.5 649 L703 649.5 L704.5 647.7 L706 649.3 L707.5 650.4 L709 648.8 L710.5 651.1 L711 650.6 L711 688.5 L52 688.5Z" fill="#b7dbab" fill-opacity="0.8"/>
<path d="M52 544.3 L53.5 544 L55 550 L56.5 546.5 L58 547.4 L59.5 554.1 L61 548 L62.5 556.7 L64 542.3 L65.5 542 L67 551 L68.5 540.8 L70 555.3 L71.5 557.6 L73 581.7 L74.5 580 L76 579.5 L77.5 571.2 L79 581.4 L80.5 589.7 L82 575.5 L83.5 559.3 L85 553.3 L86.5 542.5 L88 565.6 L89.5 569.3 L91 537.1 L92.5 520.3 L94 512.9 L95.5 517.6 L97 520.6 L98.5 523.4 L100 517.9 L101.5 521.9 L103 534.6 L104.5 545.2 L106 535 L107.5 521.7 L109 521 L110.5 516.5 L112 519.4 L113.5 527.8 L115 524.5 L116.5 535.3 L118 557.8 L119.5 546.4 L121 547.9 L122.5 545.2 L124 539.8 L125.5 534.6 L127 540.3 L128.5 550.7 L130 549.1 L131.5 537.2 L133 538.5 L134.5 544.7 L136 536.1 L137.5 537.9 L139 530 L140.5 527.7 L142 520.1 L143.5 529.7 L145 526.1 L146.5 516.2 L148 538.7 L149.5 547.5 L151 572.7 L152.5 556.3 L154 543 L155.5 548.5 L157 546.7 L158.5 538 L160 548.2 L161.5 545.9 L163 542.8 L164.5 542.8 L166 545.6 L167.5 538.8 L169 542.3 L170.5 537.1 L172 536.4 L173.5 520.5 L175 526.9 L176.5 541.6 L178 534.9 L179.5 542.3 L181 545.1 L182.5 536.4 L184 552.8 L185.5 549.1 L187 547.4 L188.5 551.1 L190 553 L191.5 554.7 L193 559.7 L194.5 550.3 L196 548.3 L197.5 551 L199 548.5 L200.5 545.3 L202 541.9 L203.5 551.2 L205 550.3 L206.5 544.6 L208 529.7 L209.5 536 L211 533.2 L212.5 534.7 L214 536.1 L215.5 533.2 L217 539.2 L218.5 539.2 L220 532.8 L221.5 531.2 L223 539.6 L224.5 531.6 L226 532.2 L227.5 536.4 L229 531.9 L230.5 541.8 L232 541.9 L233.5 540.2 L235 545.8 L236.5 547.3 L238 546.4 L239.5 555.3 L241 557.5 L242.5 543.1 L244 550.6 L245.5 532.6 L247 533.7 L248.5 537.3 L250 540.5 L251.5 535.6 L253 535.5 L254.5 543.3 L256 541.8 L257.5 543.1 L259 539.1 L260.5 534.4 L262 533.4 L263.5 545.1 L265 545 L266.5 539.5 L268 529.1 L269.5 538.5 L271 531.2 L272.5 522.9 L274 529.8 L275.5 525.5 L277 532.3 L278.5 534.4 L280 523.7 L281.5 534.4 L283 534.5 L284.5 535.8 L286 525.1 L287.5 525 L289 528 L290.5 541.8 L292 529.4 L293.5 525.8 L295 545 L296.5 528.7 L298 523.7 L299.5 532.8 L301 531.6 L302.5 529.6 L304 535.7 L305.5 527.4 L307 532.1 L308.5 526.9 L310 534.8 L311.5 527 L313 526.6 L314.5 536.3 L316 536 L317.5 530.8 L319 533.9 L320.5 525.6 L322 516.5 L323.5 519.1 L325 512.9 L326.5 516 L328 509 L329.5 513.6 L331 508.5 L332.5 534.2 L334 538.1 L335.5 553.6 L337 565.3 L338.5 560.1 L340 537.5 L341.5 528.4 L343 535.3 L344.5 523.7 L346 527.8 L347.5 520.7 L349 528.2 L350.5 520.4 L352 534.8 L353.5 526.6 L355 520.2 L356.5 532.2 L358 530.4 L359.5 527.1 L361 532.6 L362.5 509.3 L364 514.7 L365.5 524 L367 516.5 L368.5 526.5 L370 521.8 L371.5 516.7 L373 522.2 L374.5 529.6 L376 529 L377.5 529 L379 518.7 L380.5 516.1 L382 521.5 L383.5 515.5 L385 515.7 L386.5 515.2 L388 509.7 L389.5 519.3 L391 521.3 L392.5 519.5 L394 523.5 L395.5 520.1 L397 515.1 L398.5 534.4 L400 525.5 L401.5 522.5 L403 519.4 L404.5 523.8 L406 524 L407.5 522.6 L409 526.5 L410.5 536.8 L412 523.6 L413.5 517.5 L415 529.7 L416.5 521.9 L418 516.6 L419.5 527.5 L421 524.2 L422.5 526.7 L424 529.4 L425.5 517.5 L427 521.6 L428.5 529.5 L430 533.1 L431.5 546.9 L433 539.5 L434.5 535.2 L436 533.1 L437.5 518.3 L439 532.6 L440.5 530 L442 529.5 L443.5 524.6 L445 521.5 L446.5 539 L448 524 L449.5 531 L451 530.5 L452.5 524.9 L454 520.5 L455.5 526.4 L457 527.6 L458.5 529.2 L460 528.7 L461.5 525.9 L463 524.6 L464.5 534.3 L466 528.1 L467.5 528.3 L469 529.9 L470.5 522.3 L472 526.9 L473.5 532.9 L475 536.5 L476.5 523.6 L478 519.8 L479.5 523.9 L481 529.6 L482.5 525.6 L484 519.2 L485.5 503.7 L487 524.8 L488.5 519.3 L490 528.4 L491.5 529.8 L493 530.1 L494.5 525.9 L496 518 L497.5 513.8 L499 526.3 L500.5 530.2 L502 526.5 L503.5 516.3 L505 519.1 L506.5 525.8 L508 532.7 L509.5 527.5 L511 536.3 L512.5 538.8 L514 529.3 L515.5 539.6 L517 535.7 L518.5 543.6 L520 537.9 L521.5 538.6 L523 530.8 L524.5 534.5 L526 526.6 L527.5 535.7 L529 540.4 L530.5 538.4 L532 541.2 L533.5 529.6 L535 533.1 L536.5 537.2 L538 528.1 L539.5 531.5 L541 538.4 L542.5 534.6 L544 540.1 L545.5 535.7 L547 536.8 L548.5 531.8 L550 524.4 L551.5 530 L553 546.4 L554.5 553.1 L556 534.6 L557.5 538.6 L559 538 L560.5 532 L562 542 L563.5 537.1 L565 537.7 L566.5 525.4 L568 526.5 L569.5 535.3 L571 536.8 L572.5 542.5 L574 530.3 L575.5 540.5 L577 537.1 L578.5 541.3 L580 542.9 L581.5 545.7 L583 539.9 L584.5 528.3 L586 534.6 L587.5 539.4 L589 531.8 L590.5 529.8 L592 542.6 L593.5 538.6 L595 546.2 L596.5 531.8 L598 538.6 L599.5 547 L601 540.6 L602.5 542.7 L604 544.6 L605.5 548.2 L607 550.1 L608.5 544.9 L610 530.5 L611.5 530.6 L613 523.8 L614.5 516.9 L616 523.4 L617.5 508.4 L619 514.1 L620.5 519.1 L622 519.2 L623.5 537.5 L625 531.3 L626.5 536.1 L628 540 L629.5 538.8 L631 536.7 L632.5 528.4 L634 532.2 L635.5 537.4 L637 537.9 L638.5 537.9 L640 534.2 L641.5 536.9 L643 543.6 L644.5 540 L646 550.7 L647.5 558.7 L649 546.2 L650.5 540.2 L652 537.8 L653.5 538 L655 546.8 L656.5 554.6 L658 552.7 L659.5 553.3 L661 551.7 L662.5 546.1 L664 546.1 L665.5 550.5 L667 544.3 L668.5 541.2 L670 556.5 L671.5 545.8 L673 542.7 L674.5 533.4 L676 536.1 L677.5 535.4 L679 532.7 L680.5 534.7 L682 534.7 L683.5 536 L685 530.7 L686.5 531.9 L688 534.2 L689.5 527.1 L691 538.3 L692.5 543 L694 524.6 L695.5 535.4 L697 538.4 L698.5 536.2 L700 529.9 L701.5 529 L703 533.9 L704.5 522.1 L706 530.1 L707.5 532.2 L709 529.5 L710.5 537.4 L711 537.2" fill="none" stroke="#4b7f3e" stroke-width="1" stroke-linejoin="round"/>
<path d="M52 585.1 L53.5 578.1 L55 582.8 L56.5 586.1 L58 588.7 L59.5 585.4 L61 585.4 L62.5 586.5 L64 589.3 L65.5 582.7 L67 588.2 L68.5 586.7 L70 585.2 L71.5 588.6 L73 624.8 L74.5 580.7 L76 573.2 L77.5 583.3 L79 584.2 L80.5 588.6 L82 602.7 L83.5 597.8 L85 606.1 L86.5 616.6 L88 629.3 L89.5 634.6 L91 608.3 L92.5 577.1 L94 581.7 L95.5 581.8 L97 580.6 L98.5 576.4 L100 580.7 L101.5 580.5 L103 587.3 L104.5 624.5 L106 586 L107.5 579.1 L109 574.7 L110.5 582.1 L112 578.3 L113.5 575.6 L115 580.5 L116.5 582.4 L118 584 L119.5 582.5 L121 583 L122.5 581.2 L124 577 L125.5 573.1 L127 576.9 L128.5 585.2 L130 584 L131.5 575.5 L133 576.3 L134.5 580.7 L136 574.1 L137.5 575.5 L139 569.1 L140.5 567.7 L142 562.5 L143.5 569.1 L145 566.5 L146.5 559.7 L148 575.9 L149.5 582.3 L151 601.6 L152.5 590.1 L154 579.4 L155.5 583.9 L157 582.9 L158.5 576.2 L160 583.2 L161.5 581.2 L163 578.9 L164.5 578.6 L166 581.2 L167.5 576.1 L169 578.5 L170.5 575 L172 574.6 L173.5 562.4 L175 567 L176.5 578.9 L178 573.3 L179.5 578.9 L181 580.7 L182.5 574.6 L184 586.6 L185.5 584 L187 583.2 L188.5 585.7 L190 587 L191.5 587.9 L193 592.5 L194.5 584.8 L196 583.3 L197.5 585.5 L199 583.3 L200.5 581.2 L202 577.6 L203.5 585.8 L205 584.9 L206.5 581 L208 569.5 L209.5 573.9 L211 571.5 L212.5 573.2 L214 573.7 L215.5 572.4 L217 576.1 L218.5 576.3 L220 572.4 L221.5 570.3 L223 577 L224.5 571.1 L226 571.5 L227.5 574.6 L229 571.3 L230.5 578.9 L232 578.1 L233.5 577.4 L235 581.7 L236.5 582.9 L238 581.6 L239.5 588.6 L241 590.6 L242.5 579.1 L244 585.4 L245.5 571.4 L247 572.6 L248.5 574.7 L250 577.8 L251.5 574 L253 574.2 L254.5 579.4 L256 578.3 L257.5 579.2 L259 576.3 L260.5 573 L262 571.1 L263.5 581.9 L265 580.7 L266.5 576.1 L268 569.1 L269.5 575.7 L271 569.5 L272.5 563.8 L274 569.9 L275.5 566.4 L277 571.4 L278.5 573.5 L280 564.5 L281.5 573 L283 572.7 L284.5 574.4 L286 566.2 L287.5 566.1 L289 568.2 L290.5 578.2 L292 568.9 L293.5 566.4 L295 581.2 L296.5 568.2 L298 564.4 L299.5 571.5 L301 570 L302.5 570 L304 574.1 L305.5 568 L307 571.2 L308.5 566.7 L310 573.9 L311.5 567 L313 567.3 L314.5 574 L316 573.9 L317.5 570.3 L319 572.4 L320.5 567.3 L322 559.7 L323.5 562.6 L325 556.7 L326.5 559.7 L328 554 L329.5 557.4 L331 553.8 L332.5 572.6 L334 575.3 L335.5 587.4 L337 596.2 L338.5 591.9 L340 575.6 L341.5 568.7 L343 573.2 L344.5 565.3 L346 567.7 L347.5 563.2 L349 568.7 L350.5 562.8 L352 573.8 L353.5 566.9 L355 561.9 L356.5 571.5 L358 570.4 L359.5 566.7 L361 571.9 L362.5 554 L364 558.1 L365.5 565.2 L367 559.6 L368.5 566.7 L370 564.1 L371.5 559.3 L373 564.3 L374.5 569.5 L376 568.5 L377.5 569 L379 561.4 L380.5 559.1 L382 563.9 L383.5 558.6 L385 559.3 L386.5 558.4 L388 554.9 L389.5 561.8 L391 563.1 L392.5 561.4 L394 565.6 L395.5 562.4 L397 559.2 L398.5 573.1 L400 566.9 L401.5 564.4 L403 561.9 L404.5 564.7 L406 565.5 L407.5 563.7 L409 567.2 L410.5 575 L412 564.8 L413.5 559.6 L415 570.4 L416.5 563.6 L418 558.9 L419.5 568.3 L421 564.6 L422.5 567 L424 569 L425.5 559.6 L427 563.7 L428.5 568.7 L430 572.3 L431.5 582.5 L433 576.2 L434.5 573.8 L436 572.4 L437.5 560.8 L439 571.7 L440.5 569.1 L442 569.3 L443.5 565.8 L445 562.8 L446.5 576.5 L448 564.3 L449.5 570.6 L451 569.5 L452.5 565.7 L454 561.9 L455.5 566.7 L457 568.3 L458.5 568.9 L460 568.7 L461.5 567.1 L463 565.3 L464.5 572.3 L466 569 L467.5 567.7 L469 570.3 L470.5 563.9 L472 567.5 L473.5 571.9 L475 575.1 L476.5 564.6 L478 561.4 L479.5 564.7 L481 569.3 L482.5 565.8 L484 561.1 L485.5 550.3 L487 565.4 L488.5 561.6 L490 569.2 L491.5 569.3 L493 569.4 L494.5 566.5 L496 560.9 L497.5 557 L499 567 L500.5 569.7 L502 566.6 L503.5 559.2 L505 561.7 L506.5 566.4 L508 571.7 L509.5 567.9 L511 574.6 L512.5 576.1 L514 569.6 L515.5 575.5 L517 574 L518.5 580.2 L520 575.4 L521.5 575.4 L523 569.5 L524.5 573.1 L526 567.4 L527.5 574.4 L529 577 L530.5 576.5 L532 578.2 L533.5 569.7 L535 571.3 L536.5 575.6 L538 568.2 L539.5 570.6 L541 576 L542.5 572.9 L544 577.1 L545.5 573.5 L547 574.6 L548.5 570.8 L550 565.1 L551.5 569.7 L553 581.5 L554.5 586.5 L556 572.7 L557.5 576.2 L559 575.4 L560.5 570.3 L562 578.7 L563.5 575.1 L565 575.2 L566.5 565.8 L568 566.8 L569.5 573.1 L571 574.2 L572.5 578.2 L574 569.6 L575.5 577 L577 575.1 L578.5 577.6 L580 579.7 L581.5 580.5 L583 577.2 L584.5 569 L586 572.8 L587.5 576.9 L589 571.5 L590.5 569.3 L592 579.7 L593.5 576.2 L595 581.5 L596.5 571.1 L598 576 L599.5 581.6 L601 578 L602.5 578.7 L604 580.5 L605.5 583.7 L607 584.6 L608.5 580.7 L610 570.2 L611.5 569.3 L613 565.7 L614.5 559.4 L616 564.3 L617.5 553.6 L619 558.3 L620.5 560.8 L622 561.4 L623.5 574.9 L625 571 L626.5 574.4 L628 577.7 L629.5 576.5 L631 574.9 L632.5 568.4 L634 571.4 L635.5 575.4 L637 575.3 L638.5 576 L640 573.6 L641.5 575.3 L643 580 L644.5 577.4 L646 585 L647.5 590.8 L649 582.1 L650.5 576.6 L652 575.4 L653.5 582.4 L655 589.2 L656.5 594.7 L658 593.4 L659.5 594 L661 592.1 L662.5 586.9 L664 587.1 L665.5 591.7 L667 588.8 L668.5 585.4 L670 596.9 L671.5 585.9 L673 580.2 L674.5 572.7 L676 574.5 L677.5 573.8 L679 571.7 L680.5 573.4 L682 573.6 L683.5 574.3 L685 569.7 L686.5 571.2 L688 572.9 L689.5 567.4 L691 575.1 L692.5 579.1 L694 565.8 L695.5 574.1 L697 576.8 L698.5 575 L700 570.3 L701.5 569.1 L703 572.4 L704.5 563.7 L706 570.2 L707.5 571.6 L709 569.5 L710.5 574.8 L711 574.7" fill="none" stroke="#5c9c4c" stroke-width="1" stroke-linejoin="round"/>
<path d="M52 613.5 L53.5 618.7 L55 618.3 L56.5 621.4 L58 621.9 L59.5 620.3 L61 620.1 L62.5 624 L64 616 L65.5 619.9 L67 620.4 L68.5 619.3 L70 620.9 L71.5 626.5 L73 634.8 L74.5 587.7 L76 581.7 L77.5 582.6 L79 582.6 L80.5 590.4 L82 599.6 L83.5 599 L85 605.3 L86.5 615.9 L88 630.8 L89.5 636.8 L91 635.4 L92.5 630.2 L94 629.8 L95.5 629.9 L97 632.3 L98.5 634.4 L100 636.7 L101.5 635.5 L103 635 L104.5 637.1 L106 631.3 L107.5 631.4 L109 632.4 L110.5 633.7 L112 633.2 L113.5 630.3 L115 625.4 L116.5 624.5 L118 620.2 L119.5 617.8 L121 618.6 L122.5 617.3 L124 614.4 L125.5 611.1 L127 613.8 L128.5 619.7 L130 618.3 L131.5 612.3 L133 613.5 L134.5 616.5 L136 612.3 L137.5 612.8 L139 608.5 L140.5 607.8 L142 604 L143.5 609.2 L145 607.6 L146.5 602.9 L148 613.5 L149.5 617.9 L151 630.7 L152.5 623 L154 615.8 L155.5 618.9 L157 618.5 L158.5 613.9 L160 617.8 L161.5 616.9 L163 615.4 L164.5 614.8 L166 616.2 L167.5 613.4 L169 615 L170.5 612.6 L172 613.5 L173.5 604.6 L175 607.2 L176.5 615.4 L178 611.6 L179.5 615.6 L181 616.4 L182.5 612.6 L184 621 L185.5 619.2 L187 618.7 L188.5 620 L190 620.7 L191.5 621.4 L193 624 L194.5 619 L196 618.5 L197.5 619.3 L199 618.6 L200.5 617 L202 614.8 L203.5 619.6 L205 619.6 L206.5 617.2 L208 609.2 L209.5 611.9 L211 610.8 L212.5 611.5 L214 611.9 L215.5 611.3 L217 613.2 L218.5 613.3 L220 610.8 L221.5 609.7 L223 614.2 L224.5 610.2 L226 610.7 L227.5 613.2 L229 610.4 L230.5 615.7 L232 615.5 L233.5 614.1 L235 617 L236.5 618.7 L238 617.3 L239.5 621.5 L241 623.4 L242.5 615.5 L244 619.6 L245.5 610.5 L247 611.5 L248.5 612.5 L250 614.9 L251.5 612.1 L253 612.2 L254.5 615.6 L256 615.2 L257.5 615.7 L259 613.6 L260.5 611.7 L262 610.8 L263.5 618.4 L265 617.5 L266.5 613.3 L268 608.6 L269.5 613.2 L271 608.5 L272.5 605.5 L274 609.3 L275.5 607.8 L277 610.8 L278.5 611.1 L280 606.1 L281.5 611 L283 610.2 L284.5 612.4 L286 606.5 L287.5 607.4 L289 607.9 L290.5 614.8 L292 609.2 L293.5 607.2 L295 616.5 L296.5 608.2 L298 605.7 L299.5 611.3 L301 609.2 L302.5 609.5 L304 612.2 L305.5 608.2 L307 610.4 L308.5 607.6 L310 611.6 L311.5 607 L313 607.9 L314.5 612 L316 611.5 L317.5 609.5 L319 611.7 L320.5 608.3 L322 602.2 L323.5 604.2 L325 600.3 L326.5 602.5 L328 599.7 L329.5 601.7 L331 598.6 L332.5 610.8 L334 612.7 L335.5 621.5 L337 626.4 L338.5 623.5 L340 612.6 L341.5 608.5 L343 611.2 L344.5 606.2 L346 608.3 L347.5 604.8 L349 609.6 L350.5 604.6 L352 611.3 L353.5 607.2 L355 604.1 L356.5 610.3 L358 609.4 L359.5 607.7 L361 610.7 L362.5 598.9 L364 601.1 L365.5 606.7 L367 603 L368.5 607.7 L370 605.1 L371.5 602.4 L373 605.5 L374.5 609.3 L376 608.2 L377.5 609 L379 603.8 L380.5 602.9 L382 606 L383.5 602.2 L385 602.5 L386.5 602.2 L388 599.6 L389.5 604 L391 605.3 L392.5 604.1 L394 606.6 L395.5 604.1 L397 602.6 L398.5 611.8 L400 607 L401.5 605.9 L403 603.9 L404.5 605.9 L406 606.8 L407.5 604.8 L409 607.7 L410.5 612.4 L412 605.3 L413.5 603 L415 609.8 L416.5 605.7 L418 602.2 L419.5 608.6 L421 606.1 L422.5 607.2 L424 608.9 L425.5 601.8 L427 604.7 L428.5 609 L430 610.9 L431.5 617.7 L433 613.3 L434.5 612 L436 610.8 L437.5 603 L439 610.4 L440.5 608.9 L442 608.3 L443.5 606.2 L445 604.1 L446.5 614.4 L448 605.9 L449.5 609.7 L451 609 L452.5 606.2 L454 603.9 L455.5 607.1 L457 607.9 L458.5 609.6 L460 608.5 L461.5 607.4 L463 606.8 L464.5 610.5 L466 609.1 L467.5 608.3 L469 610 L470.5 605.2 L472 607.9 L473.5 610.6 L475 612.5 L476.5 605.3 L478 604.3 L479.5 605.8 L481 609.5 L482.5 606.9 L484 603.5 L485.5 596.2 L487 606 L488.5 603.7 L490 609.4 L491.5 608.9 L493 608.8 L494.5 607.4 L496 603.1 L497.5 601.2 L499 608 L500.5 609.1 L502 607.3 L503.5 602.1 L505 604.3 L506.5 606.3 L508 610.6 L509.5 608.8 L511 612.2 L512.5 613.4 L514 609.1 L515.5 613.2 L517 612.7 L518.5 616.3 L520 613.4 L521.5 613.2 L523 609.2 L524.5 611 L526 607.3 L527.5 612.9 L529 613.5 L530.5 613.7 L532 614.9 L533.5 609.5 L535 610.5 L536.5 612.7 L538 608.3 L539.5 609.5 L541 613.7 L542.5 611.5 L544 614.5 L545.5 611.9 L547 612.6 L548.5 610.6 L550 606.4 L551.5 609.2 L553 617.6 L554.5 620.7 L556 611.1 L557.5 612.9 L559 613.3 L560.5 609.8 L562 615.8 L563.5 613 L565 612.8 L566.5 606.6 L568 607.5 L569.5 611.7 L571 612.6 L572.5 615.4 L574 609.3 L575.5 614.7 L577 612.8 L578.5 614.5 L580 615.5 L581.5 616 L583 614.4 L584.5 609.3 L586 612 L587.5 614.2 L589 610.2 L590.5 609.1 L592 616.4 L593.5 613.6 L595 617.3 L596.5 610.5 L598 613.1 L599.5 616.9 L601 614.2 L602.5 615.5 L604 616.4 L605.5 618.9 L607 619 L608.5 617.1 L610 610.4 L611.5 608.9 L613 605.4 L614.5 603.1 L616 605.9 L617.5 598.1 L619 601.1 L620.5 603.4 L622 603.8 L623.5 613.7 L625 609.7 L626.5 611.7 L628 613.8 L629.5 613.8 L631 612.7 L632.5 608.1 L634 610.3 L635.5 613.6 L637 613.6 L638.5 613.7 L640 611.9 L641.5 613 L643 616.1 L644.5 614.9 L646 619.3 L647.5 623.9 L649 617.6 L650.5 613.8 L652 612.7 L653.5 625.1 L655 629.7 L656.5 632.8 L658 632.7 L659.5 633 L661 631.8 L662.5 626.3 L664 626.1 L665.5 631.9 L667 630.7 L668.5 627.4 L670 636.4 L671.5 624.1 L673 618.6 L674.5 610.9 L676 612.7 L677.5 612 L679 611 L680.5 611.5 L682 611.4 L683.5 612 L685 609.5 L686.5 610.1 L688 611.1 L689.5 608 L691 613.2 L692.5 615.9 L694 606.5 L695.5 612.4 L697 614.5 L698.5 612.9 L700 608.3 L701.5 608.1 L703 611.5 L704.5 605.5 L706 610.2 L707.5 611.3 L709 608.6 L710.5 612.3 L711 612.7" fill="none" stroke="#8cc47a" stroke-width="1" stroke-linejoin="round"/>
<path d="M52 653.4 L53.5 654.5 L55 655 L56.5 653.1 L58 654.5 L59.5 654.1 L61 655 L62.5 654.7 L64 655.3 L65.5 653.8 L67 653.6 L68.5 655.4 L70 655.9 L71.5 652.6 L73 661.7 L74.5 640.5 L76 634 L77.5 633.3 L79 638.9 L80.5 639.9 L82 637.6 L83.5 647.4 L85 653.1 L86.5 654.7 L88 659.7 L89.5 663.9 L91 649.6 L92.5 636.9 L94 634.2 L95.5 632 L97 636.3 L98.5 636.4 L100 638.7 L101.5 645.2 L103 662.2 L104.5 678.3 L106 685.8 L107.5 686.6 L109 687.9 L110.5 687.4 L112 687 L113.5 684.9 L115 677.1 L116.5 665.5 L118 656.7 L119.5 653 L121 654.2 L122.5 653.2 L124 651.5 L125.5 650.4 L127 651.2 L128.5 653.7 L130 653.6 L131.5 650.2 L133 650.9 L134.5 652.5 L136 649.9 L137.5 650.3 L139 648.5 L140.5 647.8 L142 646.6 L143.5 648.7 L145 648.8 L146.5 645.8 L148 650.6 L149.5 652.8 L151 659.4 L152.5 655.6 L154 652.3 L155.5 653.8 L157 653.2 L158.5 651.2 L160 653.5 L161.5 652.9 L163 651.6 L164.5 652.2 L166 652 L167.5 651.1 L169 651.4 L170.5 650.2 L172 650.4 L173.5 646.9 L175 647.9 L176.5 652 L178 650.5 L179.5 651.9 L181 652.4 L182.5 651 L184 654.6 L185.5 654.3 L187 653.5 L188.5 654.3 L190 654.4 L191.5 655.2 L193 656.5 L194.5 653.7 L196 653.3 L197.5 653.9 L199 653.2 L200.5 652.3 L202 651.4 L203.5 653.5 L205 654.4 L206.5 652.9 L208 649.2 L209.5 649.9 L211 649.6 L212.5 650.2 L214 650.4 L215.5 650.1 L217 650.7 L218.5 651 L220 649.4 L221.5 649 L223 651 L224.5 649.7 L226 649.6 L227.5 650.5 L229 649 L230.5 652.7 L232 652.2 L233.5 651 L235 652.5 L236.5 653.3 L238 653.1 L239.5 655 L241 655.9 L242.5 652 L244 653.5 L245.5 649.6 L247 650 L248.5 650.7 L250 651.8 L251.5 650.3 L253 650.2 L254.5 652.4 L256 651.4 L257.5 652.4 L259 650.8 L260.5 649.8 L262 649.1 L263.5 653.3 L265 652.7 L266.5 650.7 L268 648.3 L269.5 650.5 L271 648.6 L272.5 647.2 L274 649.5 L275.5 648.4 L277 649.7 L278.5 650.2 L280 646.9 L281.5 649.4 L283 649.5 L284.5 650.9 L286 646.8 L287.5 647.9 L289 647.9 L290.5 651.7 L292 648.2 L293.5 647.6 L295 652.4 L296.5 648.5 L298 647.7 L299.5 649.8 L301 648.7 L302.5 649.2 L304 650.4 L305.5 647.8 L307 649.4 L308.5 647.9 L310 650.1 L311.5 648.3 L313 648.6 L314.5 649.7 L316 649.8 L317.5 649.2 L319 649.9 L320.5 648.7 L322 645.4 L323.5 645.6 L325 645.3 L326.5 645.4 L328 644.6 L329.5 644.5 L331 644.6 L332.5 650.1 L334 650.9 L335.5 654.9 L337 657.5 L338.5 656.3 L340 650.2 L341.5 648.3 L343 649.9 L344.5 647.1 L346 648.2 L347.5 646.6 L349 648.9 L350.5 646.8 L352 650.2 L353.5 647.2 L355 645.8 L356.5 649.1 L358 649.6 L359.5 647.8 L361 649.9 L362.5 643.5 L364 645.1 L365.5 647.7 L367 646 L368.5 647.9 L370 646.7 L371.5 645.4 L373 647.1 L374.5 648.9 L376 649.1 L377.5 648.4 L379 645.6 L380.5 645.3 L382 647.3 L383.5 644.9 L385 645.4 L386.5 644.9 L388 644 L389.5 646.2 L391 646.7 L392.5 646 L394 647.8 L395.5 646.7 L397 645.3 L398.5 650.5 L400 647.9 L401.5 647.7 L403 646.6 L404.5 647.5 L406 647.3 L407.5 647 L409 647.9 L410.5 649.9 L412 647.1 L413.5 645.8 L415 649.5 L416.5 647 L418 645.3 L419.5 648.3 L421 646.9 L422.5 647.5 L424 649.3 L425.5 644.8 L427 646.5 L428.5 648.5 L430 649.8 L431.5 652.6 L433 651.2 L434.5 650 L436 650.4 L437.5 645.6 L439 649.8 L440.5 648.7 L442 648.3 L443.5 647.6 L445 646.4 L446.5 651.5 L448 647.4 L449.5 648.4 L451 648.4 L452.5 647.3 L454 646.4 L455.5 647.1 L457 648.3 L458.5 649.5 L460 648.9 L461.5 648.5 L463 647.5 L464.5 649.3 L466 648.3 L467.5 648.3 L469 648.7 L470.5 647.2 L472 648.4 L473.5 649.5 L475 650.5 L476.5 647.1 L478 646.7 L479.5 647.6 L481 648.6 L482.5 647.3 L484 646.6 L485.5 641.9 L487 647.2 L488.5 646 L490 649.4 L491.5 648 L493 648.7 L494.5 647.5 L496 645.8 L497.5 644.7 L499 648.5 L500.5 648.7 L502 648 L503.5 645.3 L505 646 L506.5 647.8 L508 649.8 L509.5 648.4 L511 650.2 L512.5 651.7 L514 648.5 L515.5 650.5 L517 650.8 L518.5 652.7 L520 650.6 L521.5 650.2 L523 649.6 L524.5 649.7 L526 648.4 L527.5 650.8 L529 650.7 L530.5 650.6 L532 651.5 L533.5 649.7 L535 649.4 L536.5 650.4 L538 648.8 L539.5 649.3 L541 652.1 L542.5 649.9 L544 652.1 L545.5 650.8 L547 650.7 L548.5 649.7 L550 647 L551.5 648.9 L553 652.6 L554.5 654.5 L556 649.8 L557.5 651 L559 650.5 L560.5 649.1 L562 651.8 L563.5 651.1 L565 650.1 L566.5 647.6 L568 648 L569.5 650.6 L571 650.7 L572.5 652.1 L574 649.3 L575.5 651.9 L577 650.2 L578.5 651.7 L580 651.7 L581.5 651.2 L583 651.3 L584.5 649.3 L586 650.3 L587.5 651.2 L589 649.8 L590.5 648.8 L592 652.8 L593.5 651.1 L595 652.9 L596.5 649.6 L598 650.8 L599.5 652.8 L601 651.5 L602.5 652.5 L604 652.8 L605.5 653.8 L607 654.2 L608.5 653.6 L610 649 L611.5 648.8 L613 647.5 L614.5 646.3 L616 647.4 L617.5 642.8 L619 645.4 L620.5 645.9 L622 646.4 L623.5 650.8 L625 649.3 L626.5 650.3 L628 651.3 L629.5 651 L631 650.3 L632.5 648.7 L634 649.6 L635.5 651.1 L637 651.3 L638.5 650.8 L640 649.9 L641.5 650.9 L643 652.3 L644.5 651.4 L646 654.2 L647.5 656.2 L649 653.2 L650.5 651.1 L652 650.6 L653.5 647.6 L655 649.4 L656.5 651.9 L658 651.7 L659.5 651.6 L661 651.4 L662.5 663.8 L664 663.3 L665.5 670.8 L667 671.3 L668.5 667.1 L670 673.5 L671.5 660.3 L673 658.6 L674.5 650.3 L676 650.1 L677.5 650.1 L679 650 L680.5 649.7 L682 650.4 L683.5 650 L685 649.4 L686.5 649.8 L688 649.3 L689.5 648.1 L691 651.2 L692.5 651.7 L694 647.5 L695.5 650.4 L697 651.4 L698.5 650.9 L700 648.2 L701.5 649 L703 649.5 L704.5 647.7 L706 649.3 L707.5 650.4 L709 648.8 L710.5 651.1 L711 650.6" fill="none" stroke="#cbe7c0" stroke-width="1" stroke-linejoin="round"/>
<path d="M789 478.5H1297M789 525.5H1297M789 572.5H1297M789 619.5H1297M789 666.5H1297M789 713.5H1297M866.5 478.5V713.7M950.5 478.5V713.7M1035.5 478.5V713.7M1120.5 478.5V713.7M1204.5 478.5V713.7M1289.5 478.5V713.7" stroke="#ffffff" stroke-opacity="0.17" stroke-width="1" fill="none" shape-rendering="crispEdges"/>
<text x="784" y="482.1" text-anchor="end" font-size="11.5" fill="#c4c4c4" font-weight="normal">5.0 s</text>
<text x="784" y="529.2" text-anchor="end" font-size="11.5" fill="#c4c4c4" font-weight="normal">4.0 s</text>
<text x="784" y="576.3" text-anchor="end" font-size="11.5" fill="#c4c4c4" font-weight="normal">3.0 s</text>
<text x="784" y="623.4" text-anchor="end" font-size="11.5" fill="#c4c4c4" font-weight="normal">2.0 s</text>
<text x="784" y="670.5" text-anchor="end" font-size="11.5" fill="#c4c4c4" font-weight="normal">1.0 s</text>
<text x="784" y="717.6" text-anchor="end" font-size="11.5" fill="#c4c4c4" font-weight="normal">0 ms</text>
<text x="866" y="733.8" text-anchor="middle" font-size="11.5" fill="#c4c4c4" font-weight="normal">07:00</text>
<text x="950.7" y="733.8" text-anchor="middle" font-size="11.5" fill="#c4c4c4" font-weight="normal">07:30</text>
<text x="1035.4" y="733.8" text-anchor="middle" font-size="11.5" fill="#c4c4c4" font-weight="normal">08:00</text>
<text x="1120.1" y="733.8" text-anchor="middle" font-size="11.5" fill="#c4c4c4" font-weight="normal">08:30</text>
<text x="1204.8" y="733.8" text-anchor="middle" font-size="11.5" fill="#c4c4c4" font-weight="normal">09:00</text>
<text x="1289.5" y="733.8" text-anchor="middle" font-size="11.5" fill="#c4c4c4" font-weight="normal">09:30</text>
<path d="M789 575.6H794.6V652.7H789ZM798.3 574.1H805.9V645.4H798.3ZM809.6 579.3H817.2V643.5H809.6ZM820.9 600H828.5V656.6H820.9ZM832.2 523.5H839.8V617.8H832.2ZM843.4 546H851V616.8H843.4ZM854.7 574.3H862.3V645.6H854.7ZM866 590.1H873.6V647.7H866ZM877.3 560.2H884.9V630.9H877.3ZM888.6 576.2H896.2V642.5H888.6ZM899.9 559.1H907.5V635.7H899.9ZM911.1 600H918.8V655.1H911.1ZM922.4 608.1H930V658.7H922.4ZM933.7 575.1H941.3V638.5H933.7ZM945 597.9H952.6V649H945ZM956.3 589.3H963.9V644.6H956.3ZM967.6 606H975.2V663.7H967.6ZM978.9 597.9H986.5V655.6H978.9ZM990.1 589H997.7V643.5H990.1ZM1001.4 604.7H1009V656.9H1001.4ZM1012.7 536.1H1020.3V620.7H1012.7ZM1024 556.5H1031.6V630.9H1024ZM1035.3 564.9H1042.9V637.8H1035.3ZM1046.6 546H1054.2V623.9H1046.6ZM1057.9 543.4H1065.5V628.1H1057.9ZM1069.1 567H1076.7V632.5H1069.1ZM1080.4 568H1088V642.5H1080.4ZM1091.7 561.2H1099.3V632.5H1091.7ZM1103 576.2H1110.6V639.6H1103ZM1114.3 578H1121.9V635.7H1114.3ZM1125.6 568H1133.2V630.7H1125.6ZM1136.8 567H1144.4V635.4H1136.8ZM1148.1 575.1H1155.7V643.5H1148.1ZM1159.4 574.3H1167V642.5H1159.4ZM1170.7 579.8H1178.3V647.5H1170.7ZM1182 546.3H1189.6V627.5H1182ZM1193.3 541.8H1200.9V627.5H1193.3ZM1204.6 534.2H1212.2V622.3H1204.6ZM1215.8 557.8H1223.4V633.6H1215.8ZM1227.1 568H1234.7V635.7H1227.1ZM1238.4 554.1H1246V637.8H1238.4ZM1249.7 553.6H1257.3V629.6H1249.7ZM1261 568.8H1268.6V637.8H1261ZM1272.3 580.6H1279.9V650.3H1272.3ZM1283.6 507.2H1291.2V609.4H1283.6ZM1294.8 488.9H1297V594.8H1294.8Z" fill="#e24d42" stroke="#c9453b" stroke-width="0.6"/>
<path d="M789 652.7H794.6V694.6H789ZM798.3 645.4H805.9V690.7H798.3ZM809.6 643.5H817.2V683.9H809.6ZM820.9 656.6H828.5V695.4H820.9ZM832.2 617.8H839.8V673.4H832.2ZM843.4 616.8H851V680.2H843.4ZM854.7 645.6H862.3V691.8H854.7ZM866 647.7H873.6V691.8H866ZM877.3 630.9H884.9V690.4H877.3ZM888.6 642.5H896.2V686.3H888.6ZM899.9 635.7H907.5V687.6H899.9ZM911.1 655.1H918.8V690.4H911.1ZM922.4 658.7H930V697.5H922.4ZM933.7 638.5H941.3V688.3H933.7ZM945 649H952.6V689.4H945ZM956.3 644.6H963.9V690.7H956.3ZM967.6 663.7H975.2V698.8H967.6ZM978.9 655.6H986.5V693.3H978.9ZM990.1 643.5H997.7V685.5H990.1ZM1001.4 656.9H1009V693.3H1001.4ZM1012.7 620.7H1020.3V683.6H1012.7ZM1024 630.9H1031.6V681.5H1024ZM1035.3 637.8H1042.9V685.5H1035.3ZM1046.6 623.9H1054.2V681.5H1046.6ZM1057.9 628.1H1065.5V688.9H1057.9ZM1069.1 632.5H1076.7V685.5H1069.1ZM1080.4 642.5H1088V691.2H1080.4ZM1091.7 632.5H1099.3V684.2H1091.7ZM1103 639.6H1110.6V684.4H1103ZM1114.3 635.7H1121.9V681.3H1114.3ZM1125.6 630.7H1133.2V679.4H1125.6ZM1136.8 635.4H1144.4V688.6H1136.8ZM1148.1 643.5H1155.7V687.6H1148.1ZM1159.4 642.5H1167V687.6H1159.4ZM1170.7 647.5H1178.3V688.1H1170.7ZM1182 627.5H1189.6V682.3H1182ZM1193.3 627.5H1200.9V685.5H1193.3ZM1204.6 622.3H1212.2V676.3H1204.6ZM1215.8 633.6H1223.4V683.4H1215.8ZM1227.1 635.7H1234.7V682.3H1227.1ZM1238.4 637.8H1246V688.3H1238.4ZM1249.7 629.6H1257.3V682.3H1249.7ZM1261 637.8H1268.6V687.3H1261ZM1272.3 650.3H1279.9V693.3H1272.3ZM1283.6 609.4H1291.2V678.4H1283.6ZM1294.8 594.8H1297V671H1294.8Z" fill="#ef843c" stroke="#d47535" stroke-width="0.6"/>
<path d="M789 694.6H794.6V712.5H789ZM798.3 690.7H805.9V711.7H798.3ZM809.6 683.9H817.2V709.1H809.6ZM820.9 695.4H828.5V713.3H820.9ZM832.2 673.4H839.8V707.7H832.2ZM843.4 680.2H851V709.3H843.4ZM854.7 691.8H862.3V711.4H854.7ZM866 691.8H873.6V712.5H866ZM877.3 690.4H884.9V713.3H877.3ZM888.6 686.3H896.2V709.3H888.6ZM899.9 687.6H907.5V712.5H899.9ZM911.1 690.4H918.8V713.3H911.1ZM922.4 697.5H930V711.4H922.4ZM933.7 688.3H941.3V708.5H933.7ZM945 689.4H952.6V710.1H945ZM956.3 690.7H963.9V713.3H956.3ZM967.6 698.8H975.2V713.5H967.6ZM978.9 693.3H986.5V713.5H978.9ZM990.1 685.5H997.7V709.6H990.1ZM1001.4 693.3H1009V712.5H1001.4ZM1012.7 683.6H1020.3V710.1H1012.7ZM1024 681.5H1031.6V705.6H1024ZM1035.3 685.5H1042.9V709.1H1035.3ZM1046.6 681.5H1054.2V709.1H1046.6ZM1057.9 688.9H1065.5V712.5H1057.9ZM1069.1 685.5H1076.7V711.7H1069.1ZM1080.4 691.2H1088V711.7H1080.4ZM1091.7 684.2H1099.3V711.4H1091.7ZM1103 684.4H1110.6V708.5H1103ZM1114.3 681.3H1121.9V707.5H1114.3ZM1125.6 679.4H1133.2V706.4H1125.6ZM1136.8 688.6H1144.4V711.4H1136.8ZM1148.1 687.6H1155.7V710.1H1148.1ZM1159.4 687.6H1167V711.4H1159.4ZM1170.7 688.1H1178.3V709.1H1170.7ZM1182 682.3H1189.6V710.1H1182ZM1193.3 685.5H1200.9V710.4H1193.3ZM1204.6 676.3H1212.2V706.7H1204.6ZM1215.8 683.4H1223.4V708H1215.8ZM1227.1 682.3H1234.7V708.5H1227.1ZM1238.4 688.3H1246V711.2H1238.4ZM1249.7 682.3H1257.3V707.7H1249.7ZM1261 687.3H1268.6V709.6H1261ZM1272.3 693.3H1279.9V711.7H1272.3ZM1283.6 678.4H1291.2V708H1283.6ZM1294.8 671H1297V705.9H1294.8Z" fill="#eab839" stroke="#cfa332" stroke-width="0.6"/>
<path d="M789 712.5H794.6V713.8H789ZM798.3 711.7H805.9V713.8H798.3ZM809.6 709.1H817.2V713.8H809.6ZM820.9 713.3H828.5V713.8H820.9ZM832.2 707.7H839.8V713.8H832.2ZM843.4 709.3H851V713.8H843.4ZM854.7 711.4H862.3V713.8H854.7ZM866 712.5H873.6V713.8H866ZM877.3 713.3H884.9V713.8H877.3ZM888.6 709.3H896.2V713.8H888.6ZM899.9 712.5H907.5V713.8H899.9ZM911.1 713.3H918.8V713.8H911.1ZM922.4 711.4H930V713.8H922.4ZM933.7 708.5H941.3V713.8H933.7ZM945 710.1H952.6V713.8H945ZM956.3 713.3H963.9V713.8H956.3ZM967.6 713.5H975.2V713.8H967.6ZM978.9 713.5H986.5V713.8H978.9ZM990.1 709.6H997.7V713.8H990.1ZM1001.4 712.5H1009V713.8H1001.4ZM1012.7 710.1H1020.3V713.8H1012.7ZM1024 705.6H1031.6V713.8H1024ZM1035.3 709.1H1042.9V713.8H1035.3ZM1046.6 709.1H1054.2V713.8H1046.6ZM1057.9 712.5H1065.5V713.8H1057.9ZM1069.1 711.7H1076.7V713.8H1069.1ZM1080.4 711.7H1088V713.8H1080.4ZM1091.7 711.4H1099.3V713.8H1091.7ZM1103 708.5H1110.6V713.8H1103ZM1114.3 707.5H1121.9V713.8H1114.3ZM1125.6 706.4H1133.2V713.8H1125.6ZM1136.8 711.4H1144.4V713.8H1136.8ZM1148.1 710.1H1155.7V713.8H1148.1ZM1159.4 711.4H1167V713.8H1159.4ZM1170.7 709.1H1178.3V713.8H1170.7ZM1182 710.1H1189.6V713.8H1182ZM1193.3 710.4H1200.9V713.8H1193.3ZM1204.6 706.7H1212.2V713.8H1204.6ZM1215.8 708H1223.4V713.8H1215.8ZM1227.1 708.5H1234.7V713.8H1227.1ZM1238.4 711.2H1246V713.8H1238.4ZM1249.7 707.7H1257.3V713.8H1249.7ZM1261 709.6H1268.6V713.8H1261ZM1272.3 711.7H1279.9V713.8H1272.3ZM1283.6 708H1291.2V713.8H1283.6ZM1294.8 705.9H1297V713.8H1294.8Z" fill="#f2c96d" stroke="#d9b460" stroke-width="0.6"/>
<path d="M28 791.1 L36 835.5 L43.9 799.6 L51.9 811.6 L59.9 817 L67.8 800.6 L75.8 822.6 L83.8 817.6 L91.7 808.6 L99.7 826.9 L107.7 817.6 L115.6 816.2 L123.6 822.6 L131.5 833.5 L139.5 820 L147.5 825.9 L155.4 772.2 L163.4 805.6 L171.4 783.1 L179.3 805.6 L187.3 802.6 L195.3 818.2 L203.2 826.9 L211.2 831.5 L219.2 806.2 L227.1 813 L235.1 800.2 L243.1 842.5 L251 785.7 L259 825.5 L266.9 834.9 L274.9 781.3 L282.9 818.6 L290.8 828.9 L298.8 823 L306.8 819.6 L314.7 816.6 L322.7 832.5 L330.7 794.7 L338.6 812 L346.6 812 L354.6 780.1 L362.5 831.9 L370.5 829.5 L378.5 817 L386.4 823.6 L394.4 826.1 L402.4 834.1 L410.3 836.1 L418.3 818.2 L426.2 819.4 L434.2 819 L442.2 830.9 L450.1 815.6 L458.1 806.2 L466.1 833.9 L474 828.5 L482 804.2 L490 839.9 L497.9 813 L505.9 812.2 L513.9 838.9 L521.8 829.5 L529.8 820 L537.8 842.1 L545.7 818.2 L553.7 809 L561.7 826.1 L569.6 810.6 L577.6 830.9 L585.5 821.6 L593.5 828.9 L601.5 835.5 L609.4 823.6 L617.4 807 L625.4 822.6 L633.3 838.1 L641.3 812.6 L649.3 828.9 L657.2 830.9 L665.2 776.3 L673.2 818.6 L681.1 787.1 L689.1 801.6 L697.1 811.6 L705 817.4 L713 811.6 L721 805.6 L728.9 828.5 L736.9 801.2 L744.9 811.8 L752.8 821 L760.8 802.6 L768.7 794.7 L776.7 814.2 L784.7 813 L792.6 807 L800.6 812.6 L808.6 779.7 L816.5 813 L824.5 824.9 L832.5 804.2 L840.4 824.2 L848.4 806.6 L856.4 822.2 L864.3 796.7 L872.3 814.2 L880.3 816.6 L888.2 820.6 L896.2 811 L904.1 801.2 L912.1 811.6 L920.1 821 L928 827.5 L936 813.6 L944 818.2 L951.9 829.5 L959.9 817.4 L967.9 821.6 L975.8 804.6 L983.8 808.2 L991.8 830.1 L999.7 828.9 L1007.7 824 L1015.7 804.6 L1023.6 827.5 L1031.6 801.2 L1039.6 812.2 L1047.5 790.7 L1055.5 822 L1063.5 834.5 L1071.4 821.6 L1079.4 811.2 L1087.3 809.6 L1095.3 817.6 L1103.3 818 L1111.2 802.6 L1119.2 815 L1127.2 824.9 L1135.1 811.6 L1143.1 799.1 L1151.1 802.6 L1159 808.6 L1167 815 L1175 810.6 L1182.9 795.1 L1190.9 789.7 L1198.9 790.7 L1206.8 800.6 L1214.8 811 L1222.8 802 L1230.7 810.2 L1238.7 793.7 L1246.6 811 L1254.6 823 L1262.6 822 L1270.5 820 L1278.5 801 L1286.5 816.6 L1294.4 819 L1302.4 790.3 L1310.4 810.2 L1318.3 796.7 L1326.3 791.3 L1334.3 810.2 L1342.2 818.2 L1350.2 815.6 L1358.2 820 L1366.1 806.2 L1374.1 821.6 L1382 809 L1390 808.6 L1398 821.2 L1405.9 816.6 L1413.9 809 L1421.9 800.6 L1429.8 786.7 L1437.8 788.7 L1445.8 788.7 L1453.7 788.7 L1453.7 862 L28 862Z" fill="#283823"/>
<path d="M28 817.4 L36 838.7 L43.9 841.7 L51.9 842.7 L59.9 821.4 L67.8 828.7 L75.8 827.7 L83.8 842.7 L91.7 835.3 L99.7 830.1 L107.7 825.7 L115.6 832.7 L123.6 838.1 L131.5 838.7 L139.5 830.1 L147.5 845.7 L155.4 809.8 L163.4 843.7 L171.4 796.9 L179.3 808.8 L187.3 803.8 L195.3 823.8 L203.2 833.7 L211.2 847.3 L219.2 820.2 L227.1 823.8 L235.1 826.7 L243.1 843.7 L251 805.4 L259 835.3 L266.9 838.7 L274.9 791.9 L282.9 836.7 L290.8 830.7 L298.8 825.7 L306.8 821.8 L314.7 830.7 L322.7 838.7 L330.7 836.7 L338.6 813.2 L346.6 832.7 L354.6 818.8 L362.5 838.7 L370.5 841.7 L378.5 838.7 L386.4 832.7 L394.4 835.3 L402.4 837.3 L410.3 844.7 L418.3 830.7 L426.2 826.7 L434.2 822.8 L442.2 838.7 L450.1 827.7 L458.1 819.4 L466.1 839.7 L474 833.7 L482 820.8 L490 841.1 L497.9 824.7 L505.9 816.8 L513.9 840.1 L521.8 834.7 L529.8 831.7 L537.8 847.7 L545.7 835.7 L553.7 833.7 L561.7 829.3 L569.6 837.3 L577.6 838.7 L585.5 837.1 L593.5 837.7 L601.5 838.1 L609.4 831.7 L617.4 823.8 L625.4 832.7 L633.3 840.7 L641.3 834.1 L649.3 835.3 L657.2 832.7 L665.2 807.4 L673.2 828.7 L681.1 804.4 L689.1 828.7 L697.1 826.7 L705 825.3 L713 824.4 L721 814.8 L728.9 834.7 L736.9 832.7 L744.9 832.7 L752.8 827.7 L760.8 822.8 L768.7 808.8 L776.7 828.7 L784.7 815.4 L792.6 816.8 L800.6 822.4 L808.6 823.4 L816.5 817.8 L824.5 828.7 L832.5 821.2 L840.4 830.7 L848.4 822.8 L856.4 830.3 L864.3 823.8 L872.3 834.7 L880.3 822.8 L888.2 834.1 L896.2 821.8 L904.1 825.3 L912.1 827.3 L920.1 834.7 L928 831.7 L936 828.7 L944 830.1 L951.9 832.1 L959.9 827.7 L967.9 829.7 L975.8 822.2 L983.8 817.8 L991.8 835.3 L999.7 835.7 L1007.7 828.1 L1015.7 823.2 L1023.6 834.1 L1031.6 813.4 L1039.6 823.8 L1047.5 820.8 L1055.5 836.7 L1063.5 843.7 L1071.4 838.1 L1079.4 824.7 L1087.3 828.1 L1095.3 831.7 L1103.3 841.3 L1111.2 826.1 L1119.2 826.7 L1127.2 840.1 L1135.1 827.3 L1143.1 822.2 L1151.1 819.4 L1159 827.3 L1167 824.7 L1175 818.2 L1182.9 817.4 L1190.9 826.1 L1198.9 821.8 L1206.8 827.3 L1214.8 822.8 L1222.8 825.3 L1230.7 831.7 L1238.7 823.8 L1246.6 823.4 L1254.6 829.7 L1262.6 835.3 L1270.5 829.3 L1278.5 823.8 L1286.5 828.7 L1294.4 826.1 L1302.4 822.8 L1310.4 832.7 L1318.3 824.7 L1326.3 822.4 L1334.3 827.7 L1342.2 824.2 L1350.2 827.7 L1358.2 825.3 L1366.1 823.8 L1374.1 832.7 L1382 827.3 L1390 822.2 L1398 834.1 L1405.9 833.1 L1413.9 838.7 L1421.9 821.8 L1429.8 816.8 L1437.8 808.8 L1445.8 808.8 L1453.7 808.8 L1453.7 862 L28 862Z" fill="#38552f"/>
<path d="M28 840.9 L36 859.8 L43.9 849.5 L51.9 850 L59.9 852.2 L67.8 842.9 L75.8 845.5 L83.8 852.2 L91.7 846.5 L99.7 840.9 L107.7 839.5 L115.6 844.9 L123.6 857.4 L131.5 850.8 L139.5 844.9 L147.5 852.8 L155.4 829.5 L163.4 851.8 L171.4 819.6 L179.3 843.5 L187.3 832.5 L195.3 847.1 L203.2 845.5 L211.2 857 L219.2 837.9 L227.1 851.8 L235.1 846.9 L243.1 850.4 L251 843.9 L259 847.5 L266.9 848.5 L274.9 849.3 L282.9 849.3 L290.8 843.1 L298.8 843.5 L306.8 845.3 L314.7 844.5 L322.7 847.9 L330.7 844.9 L338.6 850.8 L346.6 844.5 L354.6 837.5 L362.5 847.1 L370.5 850.4 L378.5 845.3 L386.4 845.3 L394.4 842.5 L402.4 847.1 L410.3 856.8 L418.3 852.4 L426.2 851.8 L434.2 847.9 L442.2 856.4 L450.1 842.5 L458.1 845.5 L466.1 852.4 L474 846.5 L482 840.5 L490 850 L497.9 846.5 L505.9 839.5 L513.9 846.5 L521.8 854 L529.8 851.8 L537.8 857 L545.7 847.5 L553.7 851.2 L561.7 849.1 L569.6 842.1 L577.6 850.4 L585.5 851.8 L593.5 848.5 L601.5 845.9 L609.4 847.5 L617.4 838.9 L625.4 851 L633.3 849.1 L641.3 848.1 L649.3 849.1 L657.2 847.5 L665.2 842.9 L673.2 845.1 L681.1 836.5 L689.1 846.9 L697.1 846.5 L705 845.5 L713 842.9 L721 840.5 L728.9 849.1 L736.9 846.9 L744.9 845.5 L752.8 843.1 L760.8 848.5 L768.7 835.5 L776.7 843.9 L784.7 845.5 L792.6 847.5 L800.6 845.9 L808.6 844.5 L816.5 839.1 L824.5 846.1 L832.5 845.7 L840.4 845.1 L848.4 842.9 L856.4 848.1 L864.3 849.8 L872.3 850 L880.3 841.5 L888.2 851.4 L896.2 836.9 L904.1 841.5 L912.1 844.5 L920.1 843.1 L928 846.5 L936 845.1 L944 843.9 L951.9 843.1 L959.9 846.5 L967.9 843.5 L975.8 839.1 L983.8 841.5 L991.8 847.1 L999.7 844.1 L1007.7 842.1 L1015.7 847.5 L1023.6 851 L1031.6 844.9 L1039.6 842.5 L1047.5 845.9 L1055.5 847.1 L1063.5 850.2 L1071.4 848.5 L1079.4 843.9 L1087.3 846.1 L1095.3 845.5 L1103.3 850 L1111.2 844.1 L1119.2 845.5 L1127.2 849.3 L1135.1 844.9 L1143.1 842.5 L1151.1 840.9 L1159 842.1 L1167 845.5 L1175 841.1 L1182.9 844.5 L1190.9 846.9 L1198.9 841.5 L1206.8 836.5 L1214.8 842.5 L1222.8 842.9 L1230.7 843.5 L1238.7 843.9 L1246.6 844.9 L1254.6 847.9 L1262.6 846.1 L1270.5 844.1 L1278.5 841.5 L1286.5 844.5 L1294.4 845.3 L1302.4 845.5 L1310.4 847.5 L1318.3 845.9 L1326.3 843.9 L1334.3 844.9 L1342.2 845.3 L1350.2 842.9 L1358.2 847.9 L1366.1 844.5 L1374.1 845.9 L1382 847.9 L1390 845.5 L1398 850.8 L1405.9 850.8 L1413.9 850 L1421.9 849.1 L1429.8 840.5 L1437.8 838.1 L1445.8 838.1 L1453.7 838.1 L1453.7 862 L28 862Z" fill="#47713b"/>
<path d="M28 860.8 L36 860.8 L43.9 860.8 L51.9 860.8 L59.9 860.8 L67.8 860.8 L75.8 860.8 L83.8 860.8 L91.7 860.8 L99.7 860.8 L107.7 854.6 L115.6 860.8 L123.6 860.8 L131.5 860.8 L139.5 860.8 L147.5 860.8 L155.4 846.7 L163.4 860.8 L171.4 860.8 L179.3 860.8 L187.3 852.2 L195.3 860.8 L203.2 860.8 L211.2 860.8 L219.2 860.8 L227.1 860.8 L235.1 860.8 L243.1 860.8 L251 860.8 L259 860.8 L266.9 860.8 L274.9 860.8 L282.9 860.8 L290.8 860.8 L298.8 860.8 L306.8 860.8 L314.7 853.6 L322.7 860.8 L330.7 860.8 L338.6 860.8 L346.6 860.8 L354.6 860.8 L362.5 860.8 L370.5 860.8 L378.5 860.8 L386.4 860.8 L394.4 860.8 L402.4 856.6 L410.3 860.8 L418.3 860.8 L426.2 860.8 L434.2 860.8 L442.2 860.8 L450.1 850 L458.1 860.8 L466.1 860.8 L474 860.8 L482 855.2 L490 860.8 L497.9 860.8 L505.9 860.2 L513.9 860.2 L521.8 860.2 L529.8 860.2 L537.8 860.2 L545.7 860.2 L553.7 860.2 L561.7 860.2 L569.6 860.2 L577.6 860.2 L585.5 860.2 L593.5 860.2 L601.5 860.2 L609.4 860.2 L617.4 854 L625.4 860.2 L633.3 860.2 L641.3 860.2 L649.3 860.2 L657.2 860.2 L665.2 860.2 L673.2 860.2 L681.1 856.6 L689.1 856.6 L697.1 857 L705 856.6 L713 856.6 L721 856.6 L728.9 860.2 L736.9 860.2 L744.9 860.2 L752.8 853.6 L760.8 860.2 L768.7 860.2 L776.7 860.2 L784.7 860.2 L792.6 860.2 L800.6 860.2 L808.6 860.2 L816.5 860.2 L824.5 860.2 L832.5 860.2 L840.4 860.2 L848.4 860.2 L856.4 860.2 L864.3 860.2 L872.3 860.2 L880.3 860.2 L888.2 860.2 L896.2 860.2 L904.1 860.2 L912.1 860.2 L920.1 856 L928 860.2 L936 860.2 L944 860.2 L951.9 855.6 L959.9 860.2 L967.9 860.2 L975.8 850.6 L983.8 860.2 L991.8 860.2 L999.7 860.2 L1007.7 860.2 L1015.7 860.2 L1023.6 860.2 L1031.6 860.2 L1039.6 855.6 L1047.5 860.2 L1055.5 860.2 L1063.5 860.2 L1071.4 860.2 L1079.4 860.2 L1087.3 860.2 L1095.3 857.2 L1103.3 860.2 L1111.2 860.2 L1119.2 856 L1127.2 860.2 L1135.1 860.2 L1143.1 857.2 L1151.1 860.2 L1159 860.2 L1167 856.6 L1175 860.2 L1182.9 860.2 L1190.9 860.2 L1198.9 860.2 L1206.8 851.6 L1214.8 860.2 L1222.8 858.4 L1230.7 858.4 L1238.7 855.2 L1246.6 858.4 L1254.6 858.4 L1262.6 858.4 L1270.5 858.4 L1278.5 854 L1286.5 858.4 L1294.4 858.4 L1302.4 858.4 L1310.4 858.4 L1318.3 858.4 L1326.3 856 L1334.3 856 L1342.2 858.4 L1350.2 858.4 L1358.2 858.4 L1366.1 857.2 L1374.1 857.2 L1382 858.4 L1390 858.4 L1398 858.4 L1405.9 858.4 L1413.9 858.4 L1421.9 858.4 L1429.8 858.4 L1437.8 856 L1445.8 856 L1453.7 856 L1453.7 862 L28 862Z" fill="#5d9a4f"/>
<path d="M28 932.9 L36 888.5 L43.9 924.4 L51.9 912.4 L59.9 907 L67.8 923.4 L75.8 901.4 L83.8 906.4 L91.7 915.4 L99.7 897.1 L107.7 906.4 L115.6 907.8 L123.6 901.4 L131.5 890.5 L139.5 904 L147.5 898.1 L155.4 951.8 L163.4 918.4 L171.4 940.9 L179.3 918.4 L187.3 921.4 L195.3 905.8 L203.2 897.1 L211.2 892.5 L219.2 917.8 L227.1 911 L235.1 923.8 L243.1 881.5 L251 938.3 L259 898.5 L266.9 889.1 L274.9 942.7 L282.9 905.4 L290.8 895.1 L298.8 901 L306.8 904.4 L314.7 907.4 L322.7 891.5 L330.7 929.3 L338.6 912 L346.6 912 L354.6 943.9 L362.5 892.1 L370.5 894.5 L378.5 907 L386.4 900.4 L394.4 897.9 L402.4 889.9 L410.3 887.9 L418.3 905.8 L426.2 904.6 L434.2 905 L442.2 893.1 L450.1 908.4 L458.1 917.8 L466.1 890.1 L474 895.5 L482 919.8 L490 884.1 L497.9 911 L505.9 911.8 L513.9 885.1 L521.8 894.5 L529.8 904 L537.8 881.9 L545.7 905.8 L553.7 915 L561.7 897.9 L569.6 913.4 L577.6 893.1 L585.5 902.4 L593.5 895.1 L601.5 888.5 L609.4 900.4 L617.4 917 L625.4 901.4 L633.3 885.9 L641.3 911.4 L649.3 895.1 L657.2 893.1 L665.2 947.7 L673.2 905.4 L681.1 936.9 L689.1 922.4 L697.1 912.4 L705 906.6 L713 912.4 L721 918.4 L728.9 895.5 L736.9 922.8 L744.9 912.2 L752.8 903 L760.8 921.4 L768.7 929.3 L776.7 909.8 L784.7 911 L792.6 917 L800.6 911.4 L808.6 944.3 L816.5 911 L824.5 899.1 L832.5 919.8 L840.4 899.8 L848.4 917.4 L856.4 901.8 L864.3 927.3 L872.3 909.8 L880.3 907.4 L888.2 903.4 L896.2 913 L904.1 922.8 L912.1 912.4 L920.1 903 L928 896.5 L936 910.4 L944 905.8 L951.9 894.5 L959.9 906.6 L967.9 902.4 L975.8 919.4 L983.8 915.8 L991.8 893.9 L999.7 895.1 L1007.7 900 L1015.7 919.4 L1023.6 896.5 L1031.6 922.8 L1039.6 911.8 L1047.5 933.3 L1055.5 902 L1063.5 889.5 L1071.4 902.4 L1079.4 912.8 L1087.3 914.4 L1095.3 906.4 L1103.3 906 L1111.2 921.4 L1119.2 909 L1127.2 899.1 L1135.1 912.4 L1143.1 924.9 L1151.1 921.4 L1159 915.4 L1167 909 L1175 913.4 L1182.9 928.9 L1190.9 934.3 L1198.9 933.3 L1206.8 923.4 L1214.8 913 L1222.8 922 L1230.7 913.8 L1238.7 930.3 L1246.6 913 L1254.6 901 L1262.6 902 L1270.5 904 L1278.5 923 L1286.5 907.4 L1294.4 905 L1302.4 933.7 L1310.4 913.8 L1318.3 927.3 L1326.3 932.7 L1334.3 913.8 L1342.2 905.8 L1350.2 908.4 L1358.2 904 L1366.1 917.8 L1374.1 902.4 L1382 915 L1390 915.4 L1398 902.8 L1405.9 907.4 L1413.9 915 L1421.9 923.4 L1429.8 937.3 L1437.8 935.3 L1445.8 935.3 L1453.7 935.3 L1453.7 862 L28 862Z" fill="#52321f"/>
<path d="M28 883.1 L36 864.2 L43.9 874.5 L51.9 874 L59.9 871.8 L67.8 881.1 L75.8 878.5 L83.8 871.8 L91.7 877.5 L99.7 883.1 L107.7 884.5 L115.6 879.1 L123.6 866.6 L131.5 873.2 L139.5 879.1 L147.5 871.2 L155.4 894.5 L163.4 872.2 L171.4 904.4 L179.3 880.5 L187.3 891.5 L195.3 876.9 L203.2 878.5 L211.2 867 L219.2 886.1 L227.1 872.2 L235.1 877.1 L243.1 873.6 L251 880.1 L259 876.5 L266.9 875.5 L274.9 874.7 L282.9 874.7 L290.8 880.9 L298.8 880.5 L306.8 878.7 L314.7 879.5 L322.7 876.1 L330.7 879.1 L338.6 873.2 L346.6 879.5 L354.6 886.5 L362.5 876.9 L370.5 873.6 L378.5 878.7 L386.4 878.7 L394.4 881.5 L402.4 876.9 L410.3 867.2 L418.3 871.6 L426.2 872.2 L434.2 876.1 L442.2 867.6 L450.1 881.5 L458.1 878.5 L466.1 871.6 L474 877.5 L482 883.5 L490 874 L497.9 877.5 L505.9 884.5 L513.9 877.5 L521.8 870 L529.8 872.2 L537.8 867 L545.7 876.5 L553.7 872.8 L561.7 874.9 L569.6 881.9 L577.6 873.6 L585.5 872.2 L593.5 875.5 L601.5 878.1 L609.4 876.5 L617.4 885.1 L625.4 873 L633.3 874.9 L641.3 875.9 L649.3 874.9 L657.2 876.5 L665.2 881.1 L673.2 878.9 L681.1 887.5 L689.1 877.1 L697.1 877.5 L705 878.5 L713 881.1 L721 883.5 L728.9 874.9 L736.9 877.1 L744.9 878.5 L752.8 880.9 L760.8 875.5 L768.7 888.5 L776.7 880.1 L784.7 878.5 L792.6 876.5 L800.6 878.1 L808.6 879.5 L816.5 884.9 L824.5 877.9 L832.5 878.3 L840.4 878.9 L848.4 881.1 L856.4 875.9 L864.3 874.2 L872.3 874 L880.3 882.5 L888.2 872.6 L896.2 887.1 L904.1 882.5 L912.1 879.5 L920.1 880.9 L928 877.5 L936 878.9 L944 880.1 L951.9 880.9 L959.9 877.5 L967.9 880.5 L975.8 884.9 L983.8 882.5 L991.8 876.9 L999.7 879.9 L1007.7 881.9 L1015.7 876.5 L1023.6 873 L1031.6 879.1 L1039.6 881.5 L1047.5 878.1 L1055.5 876.9 L1063.5 873.8 L1071.4 875.5 L1079.4 880.1 L1087.3 877.9 L1095.3 878.5 L1103.3 874 L1111.2 879.9 L1119.2 878.5 L1127.2 874.7 L1135.1 879.1 L1143.1 881.5 L1151.1 883.1 L1159 881.9 L1167 878.5 L1175 882.9 L1182.9 879.5 L1190.9 877.1 L1198.9 882.5 L1206.8 887.5 L1214.8 881.5 L1222.8 881.1 L1230.7 880.5 L1238.7 880.1 L1246.6 879.1 L1254.6 876.1 L1262.6 877.9 L1270.5 879.9 L1278.5 882.5 L1286.5 879.5 L1294.4 878.7 L1302.4 878.5 L1310.4 876.5 L1318.3 878.1 L1326.3 880.1 L1334.3 879.1 L1342.2 878.7 L1350.2 881.1 L1358.2 876.1 L1366.1 879.5 L1374.1 878.1 L1382 876.1 L1390 878.5 L1398 873.2 L1405.9 873.2 L1413.9 874 L1421.9 874.9 L1429.8 883.5 L1437.8 885.9 L1445.8 885.9 L1453.7 885.9 L1453.7 862 L28 862Z" fill="#7f5c28"/>
<path d="M28 791.1 L36 835.5 L43.9 799.6 L51.9 811.6 L59.9 817 L67.8 800.6 L75.8 822.6 L83.8 817.6 L91.7 808.6 L99.7 826.9 L107.7 817.6 L115.6 816.2 L123.6 822.6 L131.5 833.5 L139.5 820 L147.5 825.9 L155.4 772.2 L163.4 805.6 L171.4 783.1 L179.3 805.6 L187.3 802.6 L195.3 818.2 L203.2 826.9 L211.2 831.5 L219.2 806.2 L227.1 813 L235.1 800.2 L243.1 842.5 L251 785.7 L259 825.5 L266.9 834.9 L274.9 781.3 L282.9 818.6 L290.8 828.9 L298.8 823 L306.8 819.6 L314.7 816.6 L322.7 832.5 L330.7 794.7 L338.6 812 L346.6 812 L354.6 780.1 L362.5 831.9 L370.5 829.5 L378.5 817 L386.4 823.6 L394.4 826.1 L402.4 834.1 L410.3 836.1 L418.3 818.2 L426.2 819.4 L434.2 819 L442.2 830.9 L450.1 815.6 L458.1 806.2 L466.1 833.9 L474 828.5 L482 804.2 L490 839.9 L497.9 813 L505.9 812.2 L513.9 838.9 L521.8 829.5 L529.8 820 L537.8 842.1 L545.7 818.2 L553.7 809 L561.7 826.1 L569.6 810.6 L577.6 830.9 L585.5 821.6 L593.5 828.9 L601.5 835.5 L609.4 823.6 L617.4 807 L625.4 822.6 L633.3 838.1 L641.3 812.6 L649.3 828.9 L657.2 830.9 L665.2 776.3 L673.2 818.6 L681.1 787.1 L689.1 801.6 L697.1 811.6 L705 817.4 L713 811.6 L721 805.6 L728.9 828.5 L736.9 801.2 L744.9 811.8 L752.8 821 L760.8 802.6 L768.7 794.7 L776.7 814.2 L784.7 813 L792.6 807 L800.6 812.6 L808.6 779.7 L816.5 813 L824.5 824.9 L832.5 804.2 L840.4 824.2 L848.4 806.6 L856.4 822.2 L864.3 796.7 L872.3 814.2 L880.3 816.6 L888.2 820.6 L896.2 811 L904.1 801.2 L912.1 811.6 L920.1 821 L928 827.5 L936 813.6 L944 818.2 L951.9 829.5 L959.9 817.4 L967.9 821.6 L975.8 804.6 L983.8 808.2 L991.8 830.1 L999.7 828.9 L1007.7 824 L1015.7 804.6 L1023.6 827.5 L1031.6 801.2 L1039.6 812.2 L1047.5 790.7 L1055.5 822 L1063.5 834.5 L1071.4 821.6 L1079.4 811.2 L1087.3 809.6 L1095.3 817.6 L1103.3 818 L1111.2 802.6 L1119.2 815 L1127.2 824.9 L1135.1 811.6 L1143.1 799.1 L1151.1 802.6 L1159 808.6 L1167 815 L1175 810.6 L1182.9 795.1 L1190.9 789.7 L1198.9 790.7 L1206.8 800.6 L1214.8 811 L1222.8 802 L1230.7 810.2 L1238.7 793.7 L1246.6 811 L1254.6 823 L1262.6 822 L1270.5 820 L1278.5 801 L1286.5 816.6 L1294.4 819 L1302.4 790.3 L1310.4 810.2 L1318.3 796.7 L1326.3 791.3 L1334.3 810.2 L1342.2 818.2 L1350.2 815.6 L1358.2 820 L1366.1 806.2 L1374.1 821.6 L1382 809 L1390 808.6 L1398 821.2 L1405.9 816.6 L1413.9 809 L1421.9 800.6 L1429.8 786.7 L1437.8 788.7 L1445.8 788.7 L1453.7 788.7" fill="none" stroke="#5aa14b" stroke-width="1.9" stroke-linejoin="round"/>
<path d="M28 817.4 L36 838.7 L43.9 841.7 L51.9 842.7 L59.9 821.4 L67.8 828.7 L75.8 827.7 L83.8 842.7 L91.7 835.3 L99.7 830.1 L107.7 825.7 L115.6 832.7 L123.6 838.1 L131.5 838.7 L139.5 830.1 L147.5 845.7 L155.4 809.8 L163.4 843.7 L171.4 796.9 L179.3 808.8 L187.3 803.8 L195.3 823.8 L203.2 833.7 L211.2 847.3 L219.2 820.2 L227.1 823.8 L235.1 826.7 L243.1 843.7 L251 805.4 L259 835.3 L266.9 838.7 L274.9 791.9 L282.9 836.7 L290.8 830.7 L298.8 825.7 L306.8 821.8 L314.7 830.7 L322.7 838.7 L330.7 836.7 L338.6 813.2 L346.6 832.7 L354.6 818.8 L362.5 838.7 L370.5 841.7 L378.5 838.7 L386.4 832.7 L394.4 835.3 L402.4 837.3 L410.3 844.7 L418.3 830.7 L426.2 826.7 L434.2 822.8 L442.2 838.7 L450.1 827.7 L458.1 819.4 L466.1 839.7 L474 833.7 L482 820.8 L490 841.1 L497.9 824.7 L505.9 816.8 L513.9 840.1 L521.8 834.7 L529.8 831.7 L537.8 847.7 L545.7 835.7 L553.7 833.7 L561.7 829.3 L569.6 837.3 L577.6 838.7 L585.5 837.1 L593.5 837.7 L601.5 838.1 L609.4 831.7 L617.4 823.8 L625.4 832.7 L633.3 840.7 L641.3 834.1 L649.3 835.3 L657.2 832.7 L665.2 807.4 L673.2 828.7 L681.1 804.4 L689.1 828.7 L697.1 826.7 L705 825.3 L713 824.4 L721 814.8 L728.9 834.7 L736.9 832.7 L744.9 832.7 L752.8 827.7 L760.8 822.8 L768.7 808.8 L776.7 828.7 L784.7 815.4 L792.6 816.8 L800.6 822.4 L808.6 823.4 L816.5 817.8 L824.5 828.7 L832.5 821.2 L840.4 830.7 L848.4 822.8 L856.4 830.3 L864.3 823.8 L872.3 834.7 L880.3 822.8 L888.2 834.1 L896.2 821.8 L904.1 825.3 L912.1 827.3 L920.1 834.7 L928 831.7 L936 828.7 L944 830.1 L951.9 832.1 L959.9 827.7 L967.9 829.7 L975.8 822.2 L983.8 817.8 L991.8 835.3 L999.7 835.7 L1007.7 828.1 L1015.7 823.2 L1023.6 834.1 L1031.6 813.4 L1039.6 823.8 L1047.5 820.8 L1055.5 836.7 L1063.5 843.7 L1071.4 838.1 L1079.4 824.7 L1087.3 828.1 L1095.3 831.7 L1103.3 841.3 L1111.2 826.1 L1119.2 826.7 L1127.2 840.1 L1135.1 827.3 L1143.1 822.2 L1151.1 819.4 L1159 827.3 L1167 824.7 L1175 818.2 L1182.9 817.4 L1190.9 826.1 L1198.9 821.8 L1206.8 827.3 L1214.8 822.8 L1222.8 825.3 L1230.7 831.7 L1238.7 823.8 L1246.6 823.4 L1254.6 829.7 L1262.6 835.3 L1270.5 829.3 L1278.5 823.8 L1286.5 828.7 L1294.4 826.1 L1302.4 822.8 L1310.4 832.7 L1318.3 824.7 L1326.3 822.4 L1334.3 827.7 L1342.2 824.2 L1350.2 827.7 L1358.2 825.3 L1366.1 823.8 L1374.1 832.7 L1382 827.3 L1390 822.2 L1398 834.1 L1405.9 833.1 L1413.9 838.7 L1421.9 821.8 L1429.8 816.8 L1437.8 808.8 L1445.8 808.8 L1453.7 808.8" fill="none" stroke="#5aa14b" stroke-width="1.9" stroke-linejoin="round"/>
<path d="M28 840.9 L36 859.8 L43.9 849.5 L51.9 850 L59.9 852.2 L67.8 842.9 L75.8 845.5 L83.8 852.2 L91.7 846.5 L99.7 840.9 L107.7 839.5 L115.6 844.9 L123.6 857.4 L131.5 850.8 L139.5 844.9 L147.5 852.8 L155.4 829.5 L163.4 851.8 L171.4 819.6 L179.3 843.5 L187.3 832.5 L195.3 847.1 L203.2 845.5 L211.2 857 L219.2 837.9 L227.1 851.8 L235.1 846.9 L243.1 850.4 L251 843.9 L259 847.5 L266.9 848.5 L274.9 849.3 L282.9 849.3 L290.8 843.1 L298.8 843.5 L306.8 845.3 L314.7 844.5 L322.7 847.9 L330.7 844.9 L338.6 850.8 L346.6 844.5 L354.6 837.5 L362.5 847.1 L370.5 850.4 L378.5 845.3 L386.4 845.3 L394.4 842.5 L402.4 847.1 L410.3 856.8 L418.3 852.4 L426.2 851.8 L434.2 847.9 L442.2 856.4 L450.1 842.5 L458.1 845.5 L466.1 852.4 L474 846.5 L482 840.5 L490 850 L497.9 846.5 L505.9 839.5 L513.9 846.5 L521.8 854 L529.8 851.8 L537.8 857 L545.7 847.5 L553.7 851.2 L561.7 849.1 L569.6 842.1 L577.6 850.4 L585.5 851.8 L593.5 848.5 L601.5 845.9 L609.4 847.5 L617.4 838.9 L625.4 851 L633.3 849.1 L641.3 848.1 L649.3 849.1 L657.2 847.5 L665.2 842.9 L673.2 845.1 L681.1 836.5 L689.1 846.9 L697.1 846.5 L705 845.5 L713 842.9 L721 840.5 L728.9 849.1 L736.9 846.9 L744.9 845.5 L752.8 843.1 L760.8 848.5 L768.7 835.5 L776.7 843.9 L784.7 845.5 L792.6 847.5 L800.6 845.9 L808.6 844.5 L816.5 839.1 L824.5 846.1 L832.5 845.7 L840.4 845.1 L848.4 842.9 L856.4 848.1 L864.3 849.8 L872.3 850 L880.3 841.5 L888.2 851.4 L896.2 836.9 L904.1 841.5 L912.1 844.5 L920.1 843.1 L928 846.5 L936 845.1 L944 843.9 L951.9 843.1 L959.9 846.5 L967.9 843.5 L975.8 839.1 L983.8 841.5 L991.8 847.1 L999.7 844.1 L1007.7 842.1 L1015.7 847.5 L1023.6 851 L1031.6 844.9 L1039.6 842.5 L1047.5 845.9 L1055.5 847.1 L1063.5 850.2 L1071.4 848.5 L1079.4 843.9 L1087.3 846.1 L1095.3 845.5 L1103.3 850 L1111.2 844.1 L1119.2 845.5 L1127.2 849.3 L1135.1 844.9 L1143.1 842.5 L1151.1 840.9 L1159 842.1 L1167 845.5 L1175 841.1 L1182.9 844.5 L1190.9 846.9 L1198.9 841.5 L1206.8 836.5 L1214.8 842.5 L1222.8 842.9 L1230.7 843.5 L1238.7 843.9 L1246.6 844.9 L1254.6 847.9 L1262.6 846.1 L1270.5 844.1 L1278.5 841.5 L1286.5 844.5 L1294.4 845.3 L1302.4 845.5 L1310.4 847.5 L1318.3 845.9 L1326.3 843.9 L1334.3 844.9 L1342.2 845.3 L1350.2 842.9 L1358.2 847.9 L1366.1 844.5 L1374.1 845.9 L1382 847.9 L1390 845.5 L1398 850.8 L1405.9 850.8 L1413.9 850 L1421.9 849.1 L1429.8 840.5 L1437.8 838.1 L1445.8 838.1 L1453.7 838.1" fill="none" stroke="#5aa14b" stroke-width="1.9" stroke-linejoin="round"/>
<path d="M28 860.8 L36 860.8 L43.9 860.8 L51.9 860.8 L59.9 860.8 L67.8 860.8 L75.8 860.8 L83.8 860.8 L91.7 860.8 L99.7 860.8 L107.7 854.6 L115.6 860.8 L123.6 860.8 L131.5 860.8 L139.5 860.8 L147.5 860.8 L155.4 846.7 L163.4 860.8 L171.4 860.8 L179.3 860.8 L187.3 852.2 L195.3 860.8 L203.2 860.8 L211.2 860.8 L219.2 860.8 L227.1 860.8 L235.1 860.8 L243.1 860.8 L251 860.8 L259 860.8 L266.9 860.8 L274.9 860.8 L282.9 860.8 L290.8 860.8 L298.8 860.8 L306.8 860.8 L314.7 853.6 L322.7 860.8 L330.7 860.8 L338.6 860.8 L346.6 860.8 L354.6 860.8 L362.5 860.8 L370.5 860.8 L378.5 860.8 L386.4 860.8 L394.4 860.8 L402.4 856.6 L410.3 860.8 L418.3 860.8 L426.2 860.8 L434.2 860.8 L442.2 860.8 L450.1 850 L458.1 860.8 L466.1 860.8 L474 860.8 L482 855.2 L490 860.8 L497.9 860.8 L505.9 860.2 L513.9 860.2 L521.8 860.2 L529.8 860.2 L537.8 860.2 L545.7 860.2 L553.7 860.2 L561.7 860.2 L569.6 860.2 L577.6 860.2 L585.5 860.2 L593.5 860.2 L601.5 860.2 L609.4 860.2 L617.4 854 L625.4 860.2 L633.3 860.2 L641.3 860.2 L649.3 860.2 L657.2 860.2 L665.2 860.2 L673.2 860.2 L681.1 856.6 L689.1 856.6 L697.1 857 L705 856.6 L713 856.6 L721 856.6 L728.9 860.2 L736.9 860.2 L744.9 860.2 L752.8 853.6 L760.8 860.2 L768.7 860.2 L776.7 860.2 L784.7 860.2 L792.6 860.2 L800.6 860.2 L808.6 860.2 L816.5 860.2 L824.5 860.2 L832.5 860.2 L840.4 860.2 L848.4 860.2 L856.4 860.2 L864.3 860.2 L872.3 860.2 L880.3 860.2 L888.2 860.2 L896.2 860.2 L904.1 860.2 L912.1 860.2 L920.1 856 L928 860.2 L936 860.2 L944 860.2 L951.9 855.6 L959.9 860.2 L967.9 860.2 L975.8 850.6 L983.8 860.2 L991.8 860.2 L999.7 860.2 L1007.7 860.2 L1015.7 860.2 L1023.6 860.2 L1031.6 860.2 L1039.6 855.6 L1047.5 860.2 L1055.5 860.2 L1063.5 860.2 L1071.4 860.2 L1079.4 860.2 L1087.3 860.2 L1095.3 857.2 L1103.3 860.2 L1111.2 860.2 L1119.2 856 L1127.2 860.2 L1135.1 860.2 L1143.1 857.2 L1151.1 860.2 L1159 860.2 L1167 856.6 L1175 860.2 L1182.9 860.2 L1190.9 860.2 L1198.9 860.2 L1206.8 851.6 L1214.8 860.2 L1222.8 858.4 L1230.7 858.4 L1238.7 855.2 L1246.6 858.4 L1254.6 858.4 L1262.6 858.4 L1270.5 858.4 L1278.5 854 L1286.5 858.4 L1294.4 858.4 L1302.4 858.4 L1310.4 858.4 L1318.3 858.4 L1326.3 856 L1334.3 856 L1342.2 858.4 L1350.2 858.4 L1358.2 858.4 L1366.1 857.2 L1374.1 857.2 L1382 858.4 L1390 858.4 L1398 858.4 L1405.9 858.4 L1413.9 858.4 L1421.9 858.4 L1429.8 858.4 L1437.8 856 L1445.8 856 L1453.7 856" fill="none" stroke="#6aad5a" stroke-width="1.2" stroke-linejoin="round"/>
<path d="M28 932.9 L36 888.5 L43.9 924.4 L51.9 912.4 L59.9 907 L67.8 923.4 L75.8 901.4 L83.8 906.4 L91.7 915.4 L99.7 897.1 L107.7 906.4 L115.6 907.8 L123.6 901.4 L131.5 890.5 L139.5 904 L147.5 898.1 L155.4 951.8 L163.4 918.4 L171.4 940.9 L179.3 918.4 L187.3 921.4 L195.3 905.8 L203.2 897.1 L211.2 892.5 L219.2 917.8 L227.1 911 L235.1 923.8 L243.1 881.5 L251 938.3 L259 898.5 L266.9 889.1 L274.9 942.7 L282.9 905.4 L290.8 895.1 L298.8 901 L306.8 904.4 L314.7 907.4 L322.7 891.5 L330.7 929.3 L338.6 912 L346.6 912 L354.6 943.9 L362.5 892.1 L370.5 894.5 L378.5 907 L386.4 900.4 L394.4 897.9 L402.4 889.9 L410.3 887.9 L418.3 905.8 L426.2 904.6 L434.2 905 L442.2 893.1 L450.1 908.4 L458.1 917.8 L466.1 890.1 L474 895.5 L482 919.8 L490 884.1 L497.9 911 L505.9 911.8 L513.9 885.1 L521.8 894.5 L529.8 904 L537.8 881.9 L545.7 905.8 L553.7 915 L561.7 897.9 L569.6 913.4 L577.6 893.1 L585.5 902.4 L593.5 895.1 L601.5 888.5 L609.4 900.4 L617.4 917 L625.4 901.4 L633.3 885.9 L641.3 911.4 L649.3 895.1 L657.2 893.1 L665.2 947.7 L673.2 905.4 L681.1 936.9 L689.1 922.4 L697.1 912.4 L705 906.6 L713 912.4 L721 918.4 L728.9 895.5 L736.9 922.8 L744.9 912.2 L752.8 903 L760.8 921.4 L768.7 929.3 L776.7 909.8 L784.7 911 L792.6 917 L800.6 911.4 L808.6 944.3 L816.5 911 L824.5 899.1 L832.5 919.8 L840.4 899.8 L848.4 917.4 L856.4 901.8 L864.3 927.3 L872.3 909.8 L880.3 907.4 L888.2 903.4 L896.2 913 L904.1 922.8 L912.1 912.4 L920.1 903 L928 896.5 L936 910.4 L944 905.8 L951.9 894.5 L959.9 906.6 L967.9 902.4 L975.8 919.4 L983.8 915.8 L991.8 893.9 L999.7 895.1 L1007.7 900 L1015.7 919.4 L1023.6 896.5 L1031.6 922.8 L1039.6 911.8 L1047.5 933.3 L1055.5 902 L1063.5 889.5 L1071.4 902.4 L1079.4 912.8 L1087.3 914.4 L1095.3 906.4 L1103.3 906 L1111.2 921.4 L1119.2 909 L1127.2 899.1 L1135.1 912.4 L1143.1 924.9 L1151.1 921.4 L1159 915.4 L1167 909 L1175 913.4 L1182.9 928.9 L1190.9 934.3 L1198.9 933.3 L1206.8 923.4 L1214.8 913 L1222.8 922 L1230.7 913.8 L1238.7 930.3 L1246.6 913 L1254.6 901 L1262.6 902 L1270.5 904 L1278.5 923 L1286.5 907.4 L1294.4 905 L1302.4 933.7 L1310.4 913.8 L1318.3 927.3 L1326.3 932.7 L1334.3 913.8 L1342.2 905.8 L1350.2 908.4 L1358.2 904 L1366.1 917.8 L1374.1 902.4 L1382 915 L1390 915.4 L1398 902.8 L1405.9 907.4 L1413.9 915 L1421.9 923.4 L1429.8 937.3 L1437.8 935.3 L1445.8 935.3 L1453.7 935.3" fill="none" stroke="#f58b3d" stroke-width="1.9" stroke-linejoin="round"/>
<path d="M28 883.1 L36 864.2 L43.9 874.5 L51.9 874 L59.9 871.8 L67.8 881.1 L75.8 878.5 L83.8 871.8 L91.7 877.5 L99.7 883.1 L107.7 884.5 L115.6 879.1 L123.6 866.6 L131.5 873.2 L139.5 879.1 L147.5 871.2 L155.4 894.5 L163.4 872.2 L171.4 904.4 L179.3 880.5 L187.3 891.5 L195.3 876.9 L203.2 878.5 L211.2 867 L219.2 886.1 L227.1 872.2 L235.1 877.1 L243.1 873.6 L251 880.1 L259 876.5 L266.9 875.5 L274.9 874.7 L282.9 874.7 L290.8 880.9 L298.8 880.5 L306.8 878.7 L314.7 879.5 L322.7 876.1 L330.7 879.1 L338.6 873.2 L346.6 879.5 L354.6 886.5 L362.5 876.9 L370.5 873.6 L378.5 878.7 L386.4 878.7 L394.4 881.5 L402.4 876.9 L410.3 867.2 L418.3 871.6 L426.2 872.2 L434.2 876.1 L442.2 867.6 L450.1 881.5 L458.1 878.5 L466.1 871.6 L474 877.5 L482 883.5 L490 874 L497.9 877.5 L505.9 884.5 L513.9 877.5 L521.8 870 L529.8 872.2 L537.8 867 L545.7 876.5 L553.7 872.8 L561.7 874.9 L569.6 881.9 L577.6 873.6 L585.5 872.2 L593.5 875.5 L601.5 878.1 L609.4 876.5 L617.4 885.1 L625.4 873 L633.3 874.9 L641.3 875.9 L649.3 874.9 L657.2 876.5 L665.2 881.1 L673.2 878.9 L681.1 887.5 L689.1 877.1 L697.1 877.5 L705 878.5 L713 881.1 L721 883.5 L728.9 874.9 L736.9 877.1 L744.9 878.5 L752.8 880.9 L760.8 875.5 L768.7 888.5 L776.7 880.1 L784.7 878.5 L792.6 876.5 L800.6 878.1 L808.6 879.5 L816.5 884.9 L824.5 877.9 L832.5 878.3 L840.4 878.9 L848.4 881.1 L856.4 875.9 L864.3 874.2 L872.3 874 L880.3 882.5 L888.2 872.6 L896.2 887.1 L904.1 882.5 L912.1 879.5 L920.1 880.9 L928 877.5 L936 878.9 L944 880.1 L951.9 880.9 L959.9 877.5 L967.9 880.5 L975.8 884.9 L983.8 882.5 L991.8 876.9 L999.7 879.9 L1007.7 881.9 L1015.7 876.5 L1023.6 873 L1031.6 879.1 L1039.6 881.5 L1047.5 878.1 L1055.5 876.9 L1063.5 873.8 L1071.4 875.5 L1079.4 880.1 L1087.3 877.9 L1095.3 878.5 L1103.3 874 L1111.2 879.9 L1119.2 878.5 L1127.2 874.7 L1135.1 879.1 L1143.1 881.5 L1151.1 883.1 L1159 881.9 L1167 878.5 L1175 882.9 L1182.9 879.5 L1190.9 877.1 L1198.9 882.5 L1206.8 887.5 L1214.8 881.5 L1222.8 881.1 L1230.7 880.5 L1238.7 880.1 L1246.6 879.1 L1254.6 876.1 L1262.6 877.9 L1270.5 879.9 L1278.5 882.5 L1286.5 879.5 L1294.4 878.7 L1302.4 878.5 L1310.4 876.5 L1318.3 878.1 L1326.3 880.1 L1334.3 879.1 L1342.2 878.7 L1350.2 881.1 L1358.2 876.1 L1366.1 879.5 L1374.1 878.1 L1382 876.1 L1390 878.5 L1398 873.2 L1405.9 873.2 L1413.9 874 L1421.9 874.9 L1429.8 883.5 L1437.8 885.9 L1445.8 885.9 L1453.7 885.9" fill="none" stroke="#f0c030" stroke-width="1.9" stroke-linejoin="round"/>
<path d="M28 862.3H1453.7" stroke="#dccf7c" stroke-width="1"/></svg>

<div class="big abs" style="left:15px;width:478px;top:95px;color:#e03434;">190</div>
<div class="big abs" style="left:503px;width:478px;top:95px;color:#d67627;">269</div>
<div class="big abs" style="left:991px;width:478px;top:95px;color:#31a82d;">273</div>

<div class="legend" style="left:56px;top:405px;"><i style="background:#6ed0e0"></i>memory</div>
<div class="legend" style="left:426px;top:405px;"><i style="background:#e24d42"></i>cpu</div>
<div class="legend" style="left:1032px;top:405px;"><i style="background:#6ed0e0"></i>memory</div>
<div class="legend" style="left:1402px;top:405px;"><i style="background:#e24d42"></i>cpu</div>
<div class="legend" style="left:544px;top:405px;"><i style="background:#7eb26d"></i>logins</div>
<div class="legend" style="left:602px;top:405px;"><i style="background:#eab839"></i>logins (-1 hour)</div>
<div class="legend" style="left:56px;top:722px;"><i style="background:#b7dbab"></i>web_server_01</div>
<div class="legend" style="left:164px;top:722px;"><i style="background:#7eb26d"></i>web_server_02</div>
<div class="legend" style="left:272px;top:722px;"><i style="background:#508642"></i>web_server_03</div>
<div class="legend" style="left:380px;top:722px;"><i style="background:#3f6833"></i>web_server_04</div>
</body>
</html>
